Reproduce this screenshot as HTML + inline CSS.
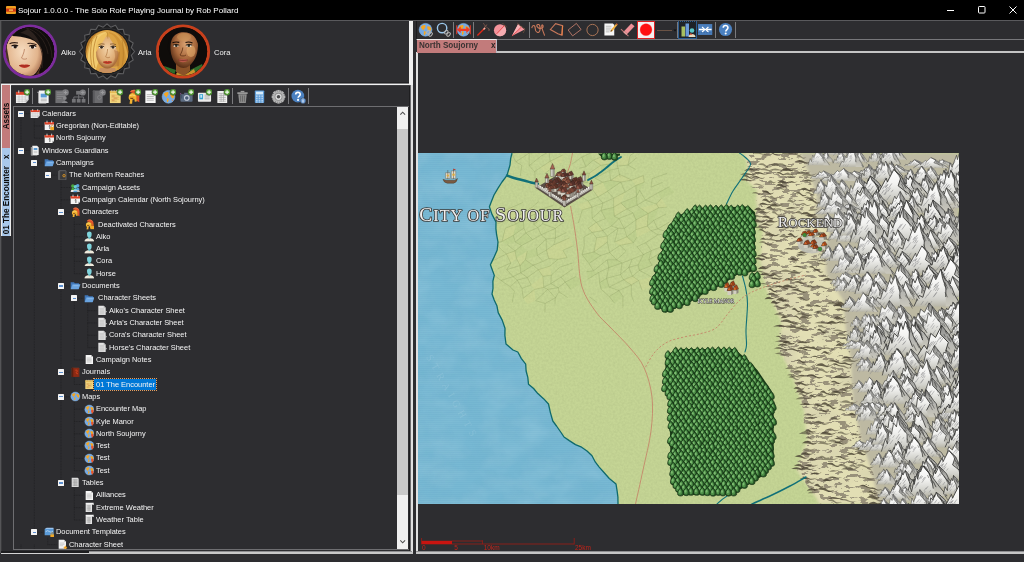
<!DOCTYPE html>
<html lang="en"><head><meta charset="utf-8"><title>Sojour 1.0.0.0 - The Solo Role Playing Journal by Rob Pollard</title>
<style>

*{box-sizing:border-box;margin:0;padding:0}
html,body{width:1024px;height:562px;overflow:hidden;background:#2d2d30;font-family:"Liberation Sans",sans-serif;color:#f1f1f1}
.abs{position:absolute}
.row,.pname,#title .t,.vtab span,.tabt{will-change:transform}
#title{left:0;top:0;width:1024px;height:20px;background:#000}
#title .t{left:18px;top:3.6px;font-size:8.05px;line-height:14px;color:#fff;white-space:nowrap}
.ln{position:absolute;background:#e6e6e6}
.g{position:absolute;background:#6a6a6d}
.pname{font-size:7.6px;color:#f1f1f1;line-height:10px;white-space:nowrap}
.vtab{position:absolute;left:1px;width:10.3px;overflow:visible;border-left:1px solid #ececec;border-right:1px solid #ececec}
.vtab span{position:absolute;left:50%;top:50%;transform:translate(-50%,-50%) rotate(-90deg);white-space:pre;font-weight:bold;font-size:8px;color:#151515;line-height:9px;margin-left:-.4px}
.sep{position:absolute;width:1px;background:#7a7a7d}
.ti{position:absolute;width:16px;height:16px}
.row{position:absolute;font-size:7.44px;line-height:11px;white-space:pre;color:#f4f4f4;height:11px}
.exp{position:absolute;width:6px;height:6px;background:#f4f4f4;border-radius:.5px}
.exp:after{content:"";position:absolute;left:1.3px;top:2.4px;width:3.4px;height:1.2px;background:#5c8fd0}
.ic{position:absolute;width:11px;height:11px}

</style></head>
<body>
<svg width="0" height="0" style="position:absolute"><defs>
<symbol id="plus" viewBox="0 0 16 16"><circle cx="12.900" cy="3.300" r="3.500" fill="#56a236" stroke="#2d2d30" stroke-width=".4"/><path d="M12.900 1.200v4.200M10.800 3.300h4.200" stroke="#f4f8f0" stroke-width="1.300"/></symbol>
<symbol id="cal" viewBox="0 0 16 16"><path d="M1 3.500h13.500v8l-3 3.500h-10.500z" fill="#f2f2f2"/><path d="M11.500 15v-3.500h3z" fill="#bdbdbd"/><rect x="1" y="3" width="13.500" height="3.200" fill="#d9432a"/><path d="M4 1.500v3M11.500 1.500v3" stroke="#ddd" stroke-width="1"/><path d="M1.500 8.500h12.500M1.500 10.800h12.500M1.500 13h10M4.300 6.500v8M7.600 6.500v8M10.900 6.500v8" stroke="#b9b9b9" stroke-width=".6"/></symbol>
<symbol id="cal1" viewBox="0 0 16 16"><path d="M1 3.500h14v8l-3 3.500h-11z" fill="#f4f4f4"/><path d="M12 15v-3.500h3z" fill="#bdbdbd"/><rect x="1" y="3" width="14" height="3.800" fill="#d9432a"/><path d="M4.500 1v3.500M11.500 1v3.500" stroke="#e8e8e8" stroke-width="1.200"/><path d="M7.200 9.200l1.600-1v5.300" stroke="#555" stroke-width="1.300" fill="none"/></symbol>
<symbol id="lock" viewBox="0 0 16 16"><rect x="9.500" y="10.500" width="6" height="4.800" fill="#f0a828"/><path d="M11 10.500v-1.300a1.500 1.500 0 0 1 3 0v1.300" stroke="#c88818" stroke-width=".9" fill="none"/></symbol>
<symbol id="docpic" viewBox="0 0 16 16"><path d="M3 1.500h8l2.500 2.500v11h-10.500z" fill="#f4f4f4"/><path d="M1.500 3.500h1.500v11.500h8" stroke="#cfcfcf" stroke-width="1" fill="none"/><rect x="5" y="5" width="6.500" height="4" fill="#5b9bd5"/><path d="M5 10.800h6.500M5 12.600h6.500" stroke="#9a9a9a" stroke-width=".8"/></symbol>
<symbol id="gsheet" viewBox="0 0 16 16"><rect x="1.500" y="1.500" width="10.500" height="13.500" fill="#707073"/><path d="M3 4h7.500M3 6h7.500M3 8h7.500M3 10h5" stroke="#8c8c8f" stroke-width=".8"/><circle cx="11.500" cy="9.500" r="2" fill="#88888b"/><path d="M8.300 15c0-3 6.400-3 6.400 0z" fill="#88888b"/><circle cx="12.300" cy="3.700" r="3.500" fill="#7c7c7f"/><path d="M12.300 1.800v3.800M10.400 3.700h3.800" stroke="#99999c" stroke-width="1.100"/></symbol>
<symbol id="gorg" viewBox="0 0 16 16"><rect x="5.500" y="2" width="5.500" height="4" fill="#747477"/><rect x="1" y="10.500" width="4" height="4" fill="#747477"/><rect x="6.200" y="10.500" width="4" height="4" fill="#747477"/><rect x="11.400" y="10.500" width="4" height="4" fill="#747477"/><path d="M8.200 6v4.500M3 10.500v-2h10.400v2" stroke="#747477" stroke-width="1" fill="none"/><circle cx="12.600" cy="3.700" r="3.300" fill="#7c7c7f"/><path d="M12.600 1.900v3.600M10.800 3.700h3.600" stroke="#99999c" stroke-width="1.100"/></symbol>
<symbol id="gbook" viewBox="0 0 16 16"><rect x="2" y="1.500" width="10.500" height="13.500" rx="1" fill="#6b6b6e"/><rect x="2" y="1.500" width="2" height="13.500" fill="#5a5a5d"/><circle cx="9" cy="9" r="2" fill="none" stroke="#858588" stroke-width=".9"/><circle cx="12.300" cy="3.700" r="3.500" fill="#7c7c7f"/><path d="M12.300 1.800v3.800M10.400 3.700h3.800" stroke="#99999c" stroke-width="1.100"/></symbol>
<symbol id="notes" viewBox="0 0 16 16"><rect x="2" y="2" width="11.500" height="13" fill="#f3d680"/><rect x="2" y="2" width="11.500" height="2.200" fill="#e6b84a"/><path d="M4 1v2.500M6.500 1v2.500M9 1v2.500M11.500 1v2.500" stroke="#c8c8c8" stroke-width=".7"/><path d="M3.500 6.500h8.500M3.500 8.700h8.500M3.500 10.900h8.500M3.500 13h6" stroke="#d0a850" stroke-width=".7"/><path d="M4 7.600h3M6 9.800h4M4 12h3" stroke="#d06a3a" stroke-width=".6"/></symbol>
<symbol id="helmet" viewBox="0 0 16 16"><path d="M4.200 3.200C6.500 -.3 12.800 0 14 5C14.800 8.500 13.800 11 14.300 14L11 12.500C11.300 9 11 5.800 8 4.600Z" fill="#e2542a"/><path d="M5 2.600C7 .8 11 1 12.600 3.500" stroke="#f08a5a" stroke-width=".8" fill="none"/><path d="M2.800 9C2.800 5.500 5.500 4 8 4.400C10.500 4.900 11.600 7 11.300 10L11.500 13.200L9.300 13.600L9 10.800L7 11.300L6.500 15.800L3.800 15.800L4.300 11.800C3.300 11.200 2.800 10.300 2.800 9Z" fill="#f2b232"/><path d="M4.300 9.300h3.700l-.5 1.300h-2.700z" fill="#7a4a10"/><path d="M3.800 7.300q2.500-2 6.200 0" stroke="#fbdc80" stroke-width=".9" fill="none"/></symbol>
<symbol id="doc" viewBox="0 0 16 16"><path d="M2.500 1.500h8l3 3v10.500h-11z" fill="#f6f6f6"/><path d="M10.500 1.500v3h3z" fill="#c8c8c8"/><path d="M4 6h7.500M4 8h7.500M4 10h7.500M4 12h7.500" stroke="#a8a8a8" stroke-width=".8"/></symbol>
<symbol id="globe" viewBox="0 0 16 16"><circle cx="8" cy="8.300" r="6.800" fill="#76aae4"/><path d="M3 5.500C4 3.500 6.500 2.800 8 3.500C7.500 4.500 8.500 5.500 7.500 6.500C6.500 7 6.800 8.500 6 9C5 9 4.800 7.500 3.800 7Z" fill="#f5a623"/><path d="M6.500 9.500C8 9.500 8.800 10.500 8.200 12C7.800 13.200 7 14 6.800 14.500C6 13 6 11 6.500 9.500Z" fill="#f5a623"/><path d="M10 4.500C12 4 13.800 5.500 14.300 7.500C13.500 8 13.800 9.500 12.800 10.500C12 9.500 11 9.500 10.500 8C10 7 9.500 5.500 10 4.500Z" fill="#f5a623"/><path d="M11.500 11.500l1.200 .3l-.8 1.500z" fill="#f08030"/><circle cx="8" cy="8.300" r="6.800" fill="none" stroke="#8ab8e4" stroke-width=".6"/></symbol>
<symbol id="pin" viewBox="0 0 16 16"><path d="M12.500 8.500c1.400 0 2 1.100 2 2c0 1.500-2 4-2 4s-2-2.500-2-4c0-.9.600-2 2-2z" fill="#e8542a"/></symbol>
<symbol id="camera" viewBox="0 0 16 16"><rect x="1.500" y="5.500" width="13" height="8" rx="1" fill="#5c6c82"/><rect x="5.500" y="4" width="4" height="2" fill="#5c6c82"/><circle cx="8.300" cy="9.500" r="3" fill="#c8d0dc"/><circle cx="8.300" cy="9.500" r="1.900" fill="#4a5c78"/><rect x="2" y="6.200" width="1.500" height="4" fill="#44546a"/><circle cx="1.800" cy="5" r=".6" fill="#b060c0"/></symbol>
<symbol id="idcard" viewBox="0 0 16 16"><rect x="1" y="4" width="14" height="9.500" rx=".8" fill="#ececec"/><rect x="2.500" y="5.500" width="4" height="5.500" fill="#35a0d0"/><rect x="3.500" y="6.300" width="2" height="3" fill="#bfe4f4"/><path d="M8 6.500h5.500M8 8.500h5.500M8 10.500h5.500" stroke="#9a9a9a" stroke-width=".8"/></symbol>
<symbol id="tabledoc" viewBox="0 0 16 16"><path d="M2.500 2h8.500l2 2v11h-10.500z" fill="#f0f0f0"/><path d="M4 5h7.500M4 7h7.500M4 9h7.500M4 11h7.500M4 13h7.500M6.500 4.500v9M9 4.500v9" stroke="#a0a0a0" stroke-width=".7"/></symbol>
<symbol id="trash" viewBox="0 0 16 16"><path d="M3.500 5.500h9l-1 9.500h-7z" fill="#8c8c8c"/><rect x="2.500" y="3.500" width="11" height="1.800" fill="#9c9c9c"/><rect x="6" y="2" width="4" height="1.500" fill="#9c9c9c"/><path d="M6 7v6.500M8 7v6.500M10 7v6.500" stroke="#5c5c5c" stroke-width=".8"/></symbol>
<symbol id="calc" viewBox="0 0 16 16"><rect x="3" y="1.500" width="10" height="13.500" rx=".8" fill="#5b9bd8"/><rect x="4.200" y="2.800" width="7.600" height="3" fill="#d8ecfa"/><path d="M4.200 7.600h7.600M4.200 9.800h7.600M4.200 12h7.600M4.200 13.800h7.600" stroke="#d0e4f6" stroke-width="1.200" stroke-dasharray="1.800 1.100"/></symbol>
<symbol id="gear" viewBox="0 0 16 16"><g transform="translate(8 8.300)"><g fill="#b4b4b4"><rect x="-1.300" y="-7.300" width="2.600" height="14.600"/><rect x="-1.300" y="-7.300" width="2.600" height="14.600" transform="rotate(45)"/><rect x="-1.300" y="-7.300" width="2.600" height="14.600" transform="rotate(90)"/><rect x="-1.300" y="-7.300" width="2.600" height="14.600" transform="rotate(135)"/><rect x="-1" y="-7" width="2" height="14" transform="rotate(22.500)"/><rect x="-1" y="-7" width="2" height="14" transform="rotate(67.500)"/><rect x="-1" y="-7" width="2" height="14" transform="rotate(112.500)"/><rect x="-1" y="-7" width="2" height="14" transform="rotate(157.500)"/><circle r="5.400"/></g><circle r="4.200" fill="#8e8e8e"/><circle r="3.300" fill="#dcdcdc"/><circle r="1.900" fill="#4a4a4c"/></g></symbol>
<symbol id="help" viewBox="0 0 16 16"><circle cx="8" cy="8" r="7" fill="#4a80c0"/><path d="M5.600 6.200c0-3.200 5-3.200 5 0c0 1.800-2.300 1.900-2.300 3.800" stroke="#fff" stroke-width="1.700" fill="none"/><circle cx="8.200" cy="12.200" r="1.100" fill="#fff"/></symbol>
<symbol id="helpi" viewBox="0 0 16 16"><circle cx="7.300" cy="7.500" r="6.800" fill="#4a80c0"/><path d="M5 5.800c0-3 4.800-3 4.800 0c0 1.700-2.200 1.800-2.200 3.600" stroke="#fff" stroke-width="1.700" fill="none"/><circle cx="7.500" cy="11.600" r="1.100" fill="#fff"/><circle cx="12.800" cy="12.600" r="3" fill="#6a9ad4" stroke="#2d2d30" stroke-width=".4"/><path d="M12.800 11.800v2.600" stroke="#fff" stroke-width="1"/><circle cx="12.800" cy="10.700" r=".55" fill="#fff"/></symbol>
<symbol id="server" viewBox="0 0 16 16"><path d="M3.500 1h7l2.500 2.500v11.500h-9.500z" fill="#f2f2f2"/><path d="M2 3v12.500h9" stroke="#c0c0c0" stroke-width="1.200" fill="none"/><rect x="5.500" y="4.500" width="5.500" height="3" fill="#5b9bd5"/><path d="M5.500 9.500h5.500M5.500 11.500h5.500" stroke="#aaa" stroke-width=".8"/></symbol>
<symbol id="folder" viewBox="0 0 16 16"><path d="M1 3.500h5l1.200 1.500h6.300v8.500h-12.500z" fill="#3f76b8"/><path d="M3.800 6.500h12l-3 7.500h-11.800z" fill="#6aa4e0"/><path d="M5 8.500h8" stroke="#a8ccf0" stroke-width=".8"/></symbol>
<symbol id="book" viewBox="0 0 16 16"><rect x="2.500" y="1" width="11" height="14" rx="1" fill="#3a3a3c" stroke="#8a8a8c" stroke-width=".8"/><rect x="2.500" y="1" width="2.200" height="14" fill="#58585a"/><circle cx="10.500" cy="8.500" r="1.800" fill="none" stroke="#f0a020" stroke-width="1.200"/></symbol>
<symbol id="assets" viewBox="0 0 16 16"><path d="M1 14.500c0-4 5-4 5 0z" fill="#e8e8e8"/><circle cx="4.200" cy="6" r="2.600" fill="#4aa840"/><path d="M2 12c0-5 4.500-5 4.500 0z" fill="#4aa840"/><circle cx="11.500" cy="5.500" r="2.600" fill="#5aa0dc"/><path d="M9 12c0-5 5-5 5 0z" fill="#5aa0dc"/><circle cx="8" cy="7" r="2.500" fill="#6ad0d0"/><path d="M5.500 13c0-5 5-5 5 0z" fill="#6ad0d0"/><path d="M2.500 12.500h11l1.500 2h-14z" fill="#f0f0f0"/><path d="M5.500 13.200h5l.5 2h-6z" fill="#58a0d8"/></symbol>
<symbol id="user" viewBox="0 0 16 16"><path d="M4.500 4C4.500 -.2 11.500 -.2 11.500 4L11.200 7C10.800 10.500 5.200 10.500 4.800 7Z" fill="#7fd4dc"/><path d="M6.300 9h3.400v3h-3.400z" fill="#68c0c8"/><path d="M.8 15.800c0-4 3.700-4.500 5.500-4.900l1.700 1.300l1.700-1.300c1.800 .4 5.500 .9 5.500 4.900z" fill="#eeeadc"/></symbol>
<symbol id="sheet" viewBox="0 0 16 16"><path d="M2 1h8l3 3v11h-11z" fill="#e4e4e4"/><path d="M10 1v3h3z" fill="#b0b0b0"/><path d="M3.500 5h8M3.500 7.200h8M3.500 9.400h8M3.500 11.600h8M3.500 13.500h8M6 4.500v9.500M9 4.500v9.500" stroke="#b4b4b4" stroke-width=".6"/><path d="M12.500 8l2.500 2l-2.500 2z" fill="#d0d0d0"/></symbol>
<symbol id="journal" viewBox="0 0 16 16"><rect x="2.500" y="1" width="11.500" height="14.500" rx=".8" fill="#8c2a14" stroke="#4a3a34" stroke-width=".8"/><rect x="2.500" y="1" width="2.400" height="14.500" fill="#5a2010"/><path d="M8 5c2-1.500 4 1 2 2.500c-2 1.500 1 3.500 2 2" stroke="#e84a20" stroke-width="1.200" fill="none"/></symbol>
<symbol id="table" viewBox="0 0 16 16"><path d="M2.500 1h9l1.500 1.500v12.500h-10.500z" fill="#dcdcdc"/><path d="M4 4h7.500M4 6.200h7.500M4 8.400h7.500M4 10.600h7.500M4 12.800h7.500M6.500 3.500v10M9 3.500v10" stroke="#909090" stroke-width=".7"/></symbol>
<symbol id="table2" viewBox="0 0 16 16"><path d="M2.500 2.500h9.500v12.500h-9.500z" fill="#e4e4e4"/><path d="M2.500 1h12v3.500h-2v-1.500h-10z" fill="#f4f4f4"/><path d="M4 5.500h6.500M4 7.700h6.500M4 9.900h6.500M4 12.100h6.500M6.300 5v9M8.600 5v9" stroke="#9a9a9a" stroke-width=".7"/></symbol>
<symbol id="tmpl" viewBox="0 0 16 16"><path d="M1 3h13.500v9.500h-13.500z" fill="#5b9bd8"/><path d="M1 3l3-2h10l.5 2z" fill="#9cc4ee"/><path d="M2.500 7q3-3 6 0q2 2 5-1" stroke="#d8eafa" stroke-width="1" fill="none"/><rect x="9.500" y="11" width="5.500" height="4.300" fill="#f0a828"/><path d="M10.800 11v-1.200a1.400 1.400 0 0 1 2.800 0v1.200" stroke="#c88818" stroke-width=".9" fill="none"/></symbol>
<symbol id="docstar" viewBox="0 0 16 16"><path d="M2.500 1h8l3 3v10.500h-11z" fill="#f2f2f2"/><path d="M10.500 1v3h3z" fill="#c0c0c0"/><path d="M4 6h7M4 8h7M4 10h5" stroke="#b0b0b0" stroke-width=".8"/><path d="M12.500 9.500l1 2.200l2.300 .2l-1.800 1.500l.6 2.300l-2.100-1.300l-2.100 1.300l.6-2.300l-1.800-1.500l2.300-.2z" fill="#f5a623"/></symbol>
<symbol id="link" viewBox="0 0 16 16"><g fill="none" stroke="#b4b4b4" stroke-width="1.100"><rect x="9.500" y="8.600" width="2.800" height="4.400" rx="1.400" transform="rotate(42 10.900 10.800)"/><rect x="12" y="11" width="2.800" height="4.400" rx="1.400" transform="rotate(42 13.400 13.200)"/></g></symbol>
<symbol id="mag" viewBox="0 0 16 16"><circle cx="6.500" cy="6.500" r="5" fill="none" stroke="#9cc8ec" stroke-width="1.500"/></symbol>
<symbol id="arrowlr" viewBox="0 0 16 16"><path d="M1 8.300l4-3.500v2.300h6v-2.300l4 3.500l-4 3.500v-2.300h-6v2.300z" fill="#f03828"/><path d="M.8 3.500v9.600M15.200 3.500v9.600" stroke="#f03828" stroke-width="1.100"/></symbol>
<symbol id="wand" viewBox="0 0 16 16"><path d="M1.500 14.500L9.500 6.500" stroke="#e02818" stroke-width="1.500"/><path d="M8 8l1.800-1.800" stroke="#f8b8a8" stroke-width="1.500"/><path d="M8 1.500l2 3l4.500 3.500M10 4.500l-1.500 2M11.500 2.800l-1 1.500M13 8.500l1.500 .2" stroke="#a06858" stroke-width=".9" fill="none" stroke-dasharray="1.600 .9"/></symbol>
<symbol id="pcircle" viewBox="0 0 16 16"><circle cx="7.500" cy="8.800" r="6.500" fill="#f4949c"/><path d="M7.500 2.300a6.500 6.500 0 0 1 0 13z" fill="#f8b8bc" opacity=".7" transform="rotate(40 7.500 8.800)"/><path d="M4 12.500L12.500 3.500" stroke="#e83838" stroke-width=".9"/><path d="M10.500 1.500l4.500 4.500" stroke="#a06848" stroke-width=".9" stroke-dasharray="1.300 .9"/></symbol>
<symbol id="pcone" viewBox="0 0 16 16"><path d="M1 15L7.500 2.500L14.500 8Z" fill="#f4949c"/><path d="M1 15L7.500 2.500L10 5Z" fill="#f8b4b8"/><path d="M1 15L11 5.500" stroke="#e84848" stroke-width=".8"/><path d="M7 1.500l8.500 6.500M14.500 9l-1.500 2.500" stroke="#a06848" stroke-width=".9" stroke-dasharray="1.300 .9"/></symbol>
<symbol id="squig" viewBox="0 0 16 16"><path d="M.8 6.500C1.500 2.500 4.500 3 4.500 7C4.500 11 8.500 13 9.500 9C10.500 5 9 1.500 6.500 3C5 5 9 8 12 6.500C14 5 12.500 2 11.500 3.500C11 6 13 10 14.500 14.500" fill="none" stroke="#c8785a" stroke-width="1.200"/></symbol>
<symbol id="poly" viewBox="0 0 16 16"><path d="M1.500 8L7 1.800L14.500 4L13.800 14L9.500 12.500Z" fill="none" stroke="#c8785a" stroke-width="1.200"/><path d="M14.500 4L13.800 14" stroke="#e8804a" stroke-width="1.300"/></symbol>
<symbol id="rrect" viewBox="0 0 16 16"><path d="M1.200 8.500L10 1.500L15 8L6 14.800Z" fill="none" stroke="#b87868" stroke-width="1"/></symbol>
<symbol id="ocircle" viewBox="0 0 16 16"><circle cx="8" cy="8.500" r="6" fill="none" stroke="#b07858" stroke-width="1"/></symbol>
<symbol id="docpen" viewBox="0 0 16 16"><path d="M1.500 1.500h9l1.500 1.500v11.500h-10.500z" fill="#f6f6f6"/><path d="M3 4.500h6M3 6.500h6M3 8.500h5M3 10.500h4" stroke="#a8a8a8" stroke-width=".8"/><path d="M8 10.500l.5-2.200l5.200-6.300l1.600 1.300l-5.200 6.300z" fill="#f0b040"/><path d="M13.700 2l1.600 1.300l.6-.9l-1.500-1.200z" fill="#e06030"/><path d="M8 10.500l.5-2.200l1.500 1.300z" fill="#604020"/></symbol>
<symbol id="eraser" viewBox="0 0 16 16"><path d="M4.500 9.500L12 1.500L15.500 4.500L8 12.500Z" fill="#f09098"/><path d="M1 7.500L9 15" stroke="#c07878" stroke-width="1.100"/><path d="M4.500 9.500L8 12.500L6.800 13.800L3.500 10.800Z" fill="#e8a0a0"/></symbol>
<symbol id="chart" viewBox="0 0 16 16"><rect x="1.500" y="4.500" width="3.500" height="10" fill="#a8c060"/><rect x="5.500" y="1.500" width="3.500" height="13" fill="#6a9ad8"/><circle cx="12" cy="8.500" r="2.300" fill="#5ac8c8"/><path d="M8.500 15c0-4 7-4 7 0z" fill="#e8dcc0"/><path d="M9 12.500l2-1.500l1.500 2z" fill="#e05838"/></symbol>
<symbol id="merge" viewBox="0 0 16 16"><rect x="0" y="2" width="16" height="12" fill="#4a7ebc"/><path d="M1 8h5.500M15 8h-5.500" stroke="#fff" stroke-width="1.600"/><path d="M4.500 5.200l3 2.800l-3 2.800M11.500 5.200l-3 2.800l3 2.800" fill="none" stroke="#fff" stroke-width="1.300"/><path d="M0 11.500h16" stroke="#3a68a0" stroke-width="1" stroke-dasharray="2 1"/></symbol>

</defs></svg>

<div id="title" class="abs"><svg class="abs" style="left:6px;top:6px" width="10" height="8" viewBox="0 0 10 8"><rect width="10" height="8" rx="1" fill="#f0a020"/><rect x="0" y="2.5" width="10" height="3.2" fill="#d03818"/><path d="M3 4.1h4" stroke="#ffd860" stroke-width="1.2"/></svg>
<div class="t abs">Sojour 1.0.0.0 - The Solo Role Playing Journal by Rob Pollard</div>
<svg class="abs" style="left:940px;top:0" width="84" height="20" viewBox="0 0 84 20"><g stroke="#fff" stroke-width="1" fill="none"><path d="M7 10.5h7"/><rect x="38.5" y="6.5" width="6.5" height="6.5" rx=".8"/><path d="M69.5 6.5l7 7M76.5 6.5l-7 7"/></g></svg>
</div>
<!-- frame lines -->
<div class="g" style="left:0;top:20px;width:1024px;height:1px;background:#5a5a5d"></div>
<div class="g" style="left:0;top:21px;width:1px;height:532px;background:#555557"></div>
<div class="g" style="left:1px;top:21px;width:1px;height:532px;background:#3a3a3c"></div>
<div class="g" style="left:1px;top:82px;width:409px;height:1px;background:#232325"></div>
<div class="g" style="left:1px;top:83px;width:411px;height:1px;background:#7a7a7c"></div>
<div class="ln" style="left:1px;top:84px;width:412px;height:1px;background:#f2f2f2"></div>
<div class="g" style="left:2px;top:85px;width:408px;height:1px;background:#48484a"></div>
<div class="ln" style="left:409px;top:21px;width:4px;height:64px;background:#f0f0f0"></div>
<div class="ln" style="left:411px;top:85px;width:2px;height:469px;background:#e0e0e0"></div>
<div class="g" style="left:410px;top:85px;width:1px;height:468px;background:#6a6a6c"></div>
<div class="g" style="left:409px;top:86px;width:1px;height:465px;background:#1e1e20"></div>
<div class="g" style="left:1px;top:551px;width:88px;height:2px;background:#1e1e20"></div>
<div class="ln" style="left:1px;top:553px;width:88px;height:1px;background:#d4d4d4"></div>
<div class="g" style="left:89px;top:551px;width:323px;height:1px;background:#8e8e90"></div>
<div class="ln" style="left:89px;top:552px;width:324px;height:2px;background:#c8c8c8"></div>
<div class="ln" style="left:416px;top:52px;width:2px;height:501px;background:#e0e0e0"></div>
<div class="g" style="left:416px;top:551px;width:608px;height:1px;background:#8e8e90"></div>
<div class="ln" style="left:416px;top:552px;width:608px;height:2px;background:#c6c6c6"></div>
<div class="ln" style="left:497px;top:51px;width:527px;height:2px;background:#c4c4c4"></div>
<div class="g" style="left:416px;top:39px;width:608px;height:1px;background:#77777a"></div>
<div class="g" style="left:416px;top:21px;width:1px;height:18px;background:#1c1c1e"></div>

<!-- portraits -->
<svg class="abs" style="left:0;top:21px" width="240" height="62" viewBox="0 21 240 62">
<defs>
<clipPath id="c1"><circle cx="30" cy="51.5" r="24.2"/></clipPath>
<clipPath id="c2"><circle cx="107" cy="51.5" r="21.5"/></clipPath>
<clipPath id="c3"><circle cx="183" cy="51.5" r="24.2"/></clipPath>
<radialGradient id="sk1" cx=".45" cy=".45" r=".6"><stop offset="0" stop-color="#f6dcc0"/><stop offset=".7" stop-color="#e2b48c"/><stop offset="1" stop-color="#a87050"/></radialGradient>
<radialGradient id="sk2" cx=".5" cy=".4" r=".6"><stop offset="0" stop-color="#f3d3a8"/><stop offset=".7" stop-color="#dca870"/><stop offset="1" stop-color="#9a6030"/></radialGradient>
<radialGradient id="sk3" cx=".55" cy=".4" r=".6"><stop offset="0" stop-color="#d8a070"/><stop offset=".6" stop-color="#a8683c"/><stop offset="1" stop-color="#5a3018"/></radialGradient>
</defs>
<!-- Aiko -->
<circle cx="30" cy="51.500" r="25.600" fill="#0d0b0b" stroke="#7c2c9c" stroke-width="3"/>
<g clip-path="url(#c1)">
<rect x="4" y="26" width="52" height="52" fill="#100c0b"/>
<ellipse cx="24" cy="54" rx="18.500" ry="24.500" fill="url(#sk1)"/>
<path d="M4 34C7 44 8 58 11 68L4 70Z" fill="#2a1810" opacity=".85"/><path d="M40 46C44 56 42 68 34 77L46 78L48 50Z" fill="#8a5438" opacity=".55"/>
<path d="M7 42C9 30 18 25 28 26.500C44 26 57 38 56 56C55 68 48 77 42 78L39 72C43 64 44 54 41 48C37 41 30 35 22 32C15 31 10 36 7 42Z" fill="#110d0c"/>
<path d="M12 36C16 28 24 26 30 27L46 34L45 52C42 46 36 41 30 39C24 37 17 36 12 36Z" fill="#120e0d"/><path d="M20 33C28 34 36 40 41 48C40 42 36 34 28 29Z" fill="#2c221e"/><path d="M26 28C36 30 46 40 48 54M30 27C42 30 52 42 52 58M36 40C42 48 44 58 42 68" stroke="#2e2420" stroke-width=".8" fill="none"/>
<path d="M9.500 43.800q3.500-1.800 8.500-.8M27.500 43.500q4.500-1 9 1.300" stroke="#3a261e" stroke-width="1.100" fill="none"/>
<ellipse cx="14.800" cy="46.800" rx="3" ry="1.400" fill="#f4ece6"/><ellipse cx="32.800" cy="47" rx="3.200" ry="1.400" fill="#f4ece6"/>
<circle cx="15.200" cy="46.800" r="1.700" fill="#241814"/><circle cx="32.500" cy="47" r="1.700" fill="#241814"/>
<path d="M11.500 46q3.300-1.800 6.600 0M29.300 46.200q3.500-1.800 7 .2" stroke="#1a100e" stroke-width="1.200" fill="none"/>
<path d="M24.500 49C24 53 22.500 56 21.500 58C23 59.500 25.500 59.500 27 58.500" stroke="#c08868" stroke-width=".9" fill="none"/>
<path d="M19 65.500C21 64 23 64.300 24.300 64.800C25.600 64.300 27.600 64 30 65.500C27.500 68.800 21.500 68.800 19 65.500Z" fill="#c4382a"/>
<path d="M19 65.600q5.500 1 11 0" stroke="#7a1c14" stroke-width=".6" fill="none"/>
<path d="M12 70C16 76 28 79 36 72" stroke="#c89878" stroke-width="1.500" fill="none" opacity=".6"/>
</g>
<!-- Arla -->
<g fill="#1e1e20" stroke="#5c5c5e" stroke-width="1.100"><path d="M107.0 23.9L110.8 27.2L115.5 25.3L118.2 29.6L123.2 29.2L124.4 34.1L129.3 35.3L128.9 40.3L133.2 43.0L131.3 47.7L134.6 51.5L131.3 55.3L133.2 60.0L128.9 62.7L129.3 67.7L124.4 68.9L123.2 73.8L118.2 73.4L115.5 77.7L110.8 75.8L107.0 79.1L103.2 75.8L98.5 77.7L95.8 73.4L90.8 73.8L89.6 68.9L84.7 67.7L85.1 62.7L80.8 60.0L82.7 55.3L79.4 51.5L82.7 47.7L80.8 43.0L85.1 40.3L84.7 35.3L89.6 34.1L90.8 29.2L95.8 29.6L98.5 25.3L103.2 27.2Z" stroke-linejoin="round"/></g><circle cx="107" cy="51.500" r="23.300" fill="none" stroke="#3a3a3c" stroke-width=".6"/>
<circle cx="107" cy="51.500" r="22" fill="#1b1a1a"/>
<g clip-path="url(#c2)">
<rect x="84" y="28" width="46" height="48" fill="#b87c2a"/>
<path d="M86 78C83 52 90 31 107 30C124 31 131 52 128 78Z" fill="#dca648"/>
<path d="M88 66C86 46 94 33 106 32L103 48L95 72Z" fill="#f2cc70"/>
<path d="M126 66C127 48 120 34 109 32L113 48L119 74Z" fill="#d09436"/>
<path d="M85 56C86 66 90 72 96 76L88 78Z" fill="#9a621e"/><path d="M129 56C128 66 124 72 118 76L126 78Z" fill="#8a561a"/><path d="M96 78l4-10h15l4 10z" fill="#c89060"/>
<path d="M86 78l10-7l5 7zM128 78l-10-7l-5 7z" fill="#2a2422"/>
<ellipse cx="107.300" cy="52.500" rx="11.300" ry="16" fill="url(#sk2)"/>
<path d="M96 46C97 38 102 33 107.500 33C105.500 39 101 44 96 52Z" fill="#eec060"/>
<path d="M119 48C118 39 113 33.500 107.500 33C109.500 39 114 43 119 54Z" fill="#dca444"/>
<path d="M107.500 32.500l.3 6" stroke="#b88430" stroke-width=".6"/><path d="M114 50C116 56 115 62 111 67L119 66L120 52Z" fill="#a86838" opacity=".45"/><path d="M92 40C90 50 90 60 93 70M97 36C93 46 92 58 95 68M122 40C124 50 124 60 121 70" stroke="#b47a28" stroke-width=".7" fill="none"/>
<path d="M98.500 44.600q3-1.500 6 -.4M110 44.200q3-1 6 .5" stroke="#8a6030" stroke-width=".9" fill="none"/>
<ellipse cx="101.300" cy="47.300" rx="2.600" ry="1.200" fill="#f0e6da"/><ellipse cx="113.300" cy="47.300" rx="2.600" ry="1.200" fill="#f0e6da"/>
<circle cx="101.500" cy="47.300" r="1.350" fill="#33281e"/><circle cx="113" cy="47.300" r="1.350" fill="#33281e"/>
<path d="M98.500 46.700q2.800-1.600 5.600 0M110.500 46.700q2.800-1.600 5.600 0" stroke="#2a1a10" stroke-width=".8" fill="none"/>
<path d="M107.600 49C107.400 53 106.300 55.500 105.600 56.800C107 58 109 58 110 57" stroke="#b8804c" stroke-width=".8" fill="none"/>
<path d="M103 62C105 60.800 106.500 61 107.500 61.500C108.500 61 110 60.800 112 62C110 64.800 105 64.800 103 62Z" fill="#cc4630"/>
<path d="M103 62.100q4.500 .8 9 0" stroke="#7a2818" stroke-width=".5" fill="none"/>
</g>
<!-- Cora -->
<circle cx="183" cy="51.500" r="25.600" fill="#0e0b0a" stroke="#c8401c" stroke-width="3"/>
<g clip-path="url(#c3)">
<rect x="158" y="26" width="50" height="52" fill="#0f0c0a"/>
<path d="M158 80l6-14l12 4l-4 10zM208 80l-6-16l-12 6l4 10z" fill="#2f6b2a"/>
<path d="M172 80l6-9l8 3l8-5l4 11z" fill="#c8922c"/>
<path d="M176 60h14v11l-6 5l-8-4z" fill="#8a5228"/>
<path d="M170 44C170 32 177 28.500 184 29C193 29.500 198.500 36 198 46C197.500 56 194 62 189 66C186 68.500 181 68.500 178 66C173 62 170 54 170 44Z" fill="url(#sk3)"/>
<ellipse cx="191" cy="51" rx="4.500" ry="6" fill="#e8b070" opacity=".55"/>
<ellipse cx="184" cy="37" rx="7" ry="4" fill="#d09858" opacity=".5"/>
<path d="M168 50C167 34 176 27 185 28C196 28 201 38 199.500 52C199 44 196 36 190 33.500C184 31 176 32 172.500 38C170.500 42 170 46 170.500 56Z" fill="#0e0b0a"/>
<path d="M172.500 42.800q3.200-1.500 6.800-.4M185.500 42.500q3.500-1.200 7 .6" stroke="#1a0e08" stroke-width="1.100" fill="none"/>
<ellipse cx="176" cy="45.800" rx="2.800" ry="1.250" fill="#e8dccc"/><ellipse cx="189" cy="45.800" rx="2.900" ry="1.250" fill="#e8dccc"/>
<circle cx="176.300" cy="45.800" r="1.300" fill="#2a2a20"/><circle cx="188.800" cy="45.800" r="1.300" fill="#2a2a20"/>
<path d="M173 45.200q3-1.800 6.200 0M185.800 45.200q3.200-1.800 6.400 0" stroke="#120a06" stroke-width=".9" fill="none"/>
<path d="M182.800 47.500C182.500 51 181 53.500 180 55C181.500 56.300 184.500 56.300 186 55" stroke="#6a3a1c" stroke-width=".9" fill="none"/>
<path d="M178 60C180 58.800 181.800 59 182.800 59.500C183.800 59 185.600 58.800 188 60C185.500 63 180.500 63 178 60Z" fill="#b85848"/>
<path d="M178 60.100q5 .9 10 0" stroke="#5a2018" stroke-width=".5" fill="none"/>
</g>
</svg>
<div class="pname abs" style="left:60.500px;top:47.500px">Aiko</div>
<div class="pname abs" style="left:137.500px;top:47.500px">Arla</div>
<div class="pname abs" style="left:213.500px;top:47.500px">Cora</div>

<div class="vtab" style="top:85px;height:63.300px;background:#c27b7b"></div><div class="vtab" style="top:148.300px;height:87.700px;background:#a9c8ea"></div><svg class="abs tabt" style="left:0;top:85px" width="13" height="152" viewBox="0 85 13 152"><g font-family="Liberation Sans,sans-serif" font-weight="bold" font-size="8.150" fill="#0c0c0c"><text transform="translate(9.300 129.300) rotate(-90)">Assets</text><text transform="translate(9.300 234.200) rotate(-90)">01 The Encounter</text><text transform="translate(9.300 159) rotate(-90)">x</text></g></svg><svg class="abs" style="left:15.25px;top:88.7px" width="15" height="15" viewBox="0 0 16 16"><use href="#cal"/><use href="#plus"/></svg><svg class="abs" style="left:36.25px;top:88.7px" width="15" height="15" viewBox="0 0 16 16"><use href="#docpic"/><use href="#plus"/></svg><svg class="abs" style="left:53.75px;top:88.7px" width="15" height="15" viewBox="0 0 16 16"><use href="#gsheet"/></svg><svg class="abs" style="left:70.75px;top:88.7px" width="15" height="15" viewBox="0 0 16 16"><use href="#gorg"/></svg><svg class="abs" style="left:91.25px;top:88.7px" width="15" height="15" viewBox="0 0 16 16"><use href="#gbook"/></svg><svg class="abs" style="left:107.75px;top:88.7px" width="15" height="15" viewBox="0 0 16 16"><use href="#notes"/><use href="#plus"/></svg><svg class="abs" style="left:125.75px;top:88.7px" width="15" height="15" viewBox="0 0 16 16"><use href="#helmet"/><use href="#plus"/></svg><svg class="abs" style="left:143.25px;top:88.7px" width="15" height="15" viewBox="0 0 16 16"><use href="#doc"/><use href="#plus"/></svg><svg class="abs" style="left:160.75px;top:88.7px" width="15" height="15" viewBox="0 0 16 16"><use href="#globe"/><use href="#plus"/></svg><svg class="abs" style="left:179.25px;top:88.7px" width="15" height="15" viewBox="0 0 16 16"><use href="#camera"/><use href="#plus"/></svg><svg class="abs" style="left:196.75px;top:88.7px" width="15" height="15" viewBox="0 0 16 16"><use href="#idcard"/><use href="#plus"/></svg><svg class="abs" style="left:214.75px;top:88.7px" width="15" height="15" viewBox="0 0 16 16"><use href="#tabledoc"/><use href="#plus"/></svg><svg class="abs" style="left:234.75px;top:88.7px" width="15" height="15" viewBox="0 0 16 16"><use href="#trash"/></svg><svg class="abs" style="left:252.25px;top:88.7px" width="15" height="15" viewBox="0 0 16 16"><use href="#calc"/></svg><svg class="abs" style="left:270.75px;top:88.7px" width="15" height="15" viewBox="0 0 16 16"><use href="#gear"/></svg><svg class="abs" style="left:291.25px;top:88.7px" width="15" height="15" viewBox="0 0 16 16"><use href="#helpi"/></svg><div class="sep" style="left:32px;top:88px;height:16px"></div><div class="sep" style="left:88px;top:88px;height:16px"></div><div class="sep" style="left:232px;top:88px;height:16px"></div><div class="sep" style="left:288px;top:88px;height:16px"></div><div class="sep" style="left:307.5px;top:88px;height:16px"></div><div class="g" style="left:12px;top:85px;width:397px;height:1px;background:#3c3c3f"></div><div class="g" style="left:13px;top:106px;width:396px;height:1px;background:#6e6e71"></div><div class="g" style="left:13px;top:106px;width:1px;height:443px;background:#6e6e71"></div><div class="g" style="left:13px;top:549px;width:396px;height:1px;background:#6e6e71"></div><div class="abs" style="left:397px;top:107px;width:11.300px;height:442px;background:#f0f0f0"></div><div class="abs" style="left:397px;top:129px;width:11.300px;height:365.500px;background:#c9c9c9"></div><svg class="abs" style="left:397px;top:107px" width="11.300" height="442" viewBox="0 0 11.300 442"><path d="M3.300 7.500l2.400-2.400l2.400 2.400M3.300 433.500l2.400 2.400l2.400-2.400" fill="none" stroke="#505050" stroke-width="1.100"/></svg><svg class="abs" style="left:0;top:0" width="400" height="562" viewBox="0 0 400 562"><defs><clipPath id="tc"><rect x="14" y="107" width="383" height="442"/></clipPath></defs><path clip-path="url(#tc)" d="M24.5 113.6H29.8M34.3 125.9H43.1M34.3 119.1V125.9M34.3 138.2H43.1M34.3 125.9V138.2M24.5 150.5H29.8M21.0 117.1V147.0M37.8 162.9H43.1M34.3 156.0V159.4M51.2 175.2H56.5M47.7 168.4V171.7M61.0 187.5H69.8M61.0 180.7V187.5M61.0 199.8H69.8M61.0 187.5V199.8M64.5 212.1H69.8M61.0 199.8V208.6M74.3 224.4H83.1M74.3 217.6V224.4M74.3 236.7H83.1M74.3 224.4V236.7M74.3 249.1H83.1M74.3 236.7V249.1M74.3 261.4H83.1M74.3 249.1V261.4M74.3 273.7H83.1M74.3 261.4V273.7M64.5 286.0H69.8M61.0 215.6V282.5M77.8 298.3H83.1M74.3 291.5V294.8M87.7 310.6H96.5M87.7 303.8V310.6M87.7 322.9H96.5M87.7 310.6V322.9M87.7 335.3H96.5M87.7 322.9V335.3M87.7 347.6H96.5M87.7 335.3V347.6M74.3 359.9H83.1M74.3 301.8V359.9M64.5 372.2H69.8M61.0 289.5V368.7M74.3 384.5H83.1M74.3 377.7V384.5M64.5 396.8H69.8M61.0 375.7V393.3M74.3 409.1H83.1M74.3 402.3V409.1M74.3 421.5H83.1M74.3 409.1V421.5M74.3 433.8H83.1M74.3 421.5V433.8M74.3 446.1H83.1M74.3 433.8V446.1M74.3 458.4H83.1M74.3 446.1V458.4M74.3 470.7H83.1M74.3 458.4V470.7M64.5 483.0H69.8M61.0 400.3V479.5M74.3 495.3H83.1M74.3 488.5V495.3M74.3 507.6H83.1M74.3 495.3V507.6M74.3 520.0H83.1M74.3 507.6V520.0M37.8 532.3H43.1M34.3 166.4V528.8M47.7 544.6H56.5M47.7 537.8V544.6M21 544.6V549M34.3 544.6V549" stroke="#202022" stroke-width=".8" stroke-dasharray=".8 .8" fill="none"/></svg><div class="abs" style="left:14px;top:107px;width:383px;height:442px;overflow:hidden"><div class="abs" style="left:-14px;top:-107px;width:400px;height:562px"><div class="exp" style="left:18.00px;top:110.60px"></div><svg class="abs" style="left:30.30px;top:108.00px" width="10.700" height="10.700" viewBox="0 0 16 16"><use href="#cal"/></svg><div class="row" style="left:42.40px;top:107.70px">Calendars</div><svg class="abs" style="left:43.63px;top:120.31px" width="10.700" height="10.700" viewBox="0 0 16 16"><use href="#cal1"/><use href="#lock"/></svg><div class="row" style="left:55.73px;top:120.01px">Gregorian (Non-Editable)</div><svg class="abs" style="left:43.63px;top:132.63px" width="10.700" height="10.700" viewBox="0 0 16 16"><use href="#cal1"/></svg><div class="row" style="left:55.73px;top:132.33px">North Sojourny</div><div class="exp" style="left:18.00px;top:147.54px"></div><svg class="abs" style="left:30.30px;top:144.94px" width="10.700" height="10.700" viewBox="0 0 16 16"><use href="#server"/></svg><div class="row" style="left:42.40px;top:144.64px">Windows Guardians</div><div class="exp" style="left:31.33px;top:159.86px"></div><svg class="abs" style="left:43.63px;top:157.26px" width="10.700" height="10.700" viewBox="0 0 16 16"><use href="#folder"/></svg><div class="row" style="left:55.73px;top:156.96px">Campaigns</div><div class="exp" style="left:44.67px;top:172.17px"></div><svg class="abs" style="left:56.97px;top:169.57px" width="10.700" height="10.700" viewBox="0 0 16 16"><use href="#book"/></svg><div class="row" style="left:69.07px;top:169.27px">The Northern Reaches</div><svg class="abs" style="left:70.30px;top:181.88px" width="10.700" height="10.700" viewBox="0 0 16 16"><use href="#assets"/></svg><div class="row" style="left:82.40px;top:181.58px">Campaign Assets</div><svg class="abs" style="left:70.30px;top:194.20px" width="10.700" height="10.700" viewBox="0 0 16 16"><use href="#cal1"/></svg><div class="row" style="left:82.40px;top:193.90px">Campaign Calendar (North Sojourny)</div><div class="exp" style="left:58.00px;top:209.11px"></div><svg class="abs" style="left:70.30px;top:206.51px" width="10.700" height="10.700" viewBox="0 0 16 16"><use href="#helmet"/></svg><div class="row" style="left:82.40px;top:206.21px">Characters</div><svg class="abs" style="left:83.63px;top:218.83px" width="10.700" height="10.700" viewBox="0 0 16 16"><use href="#helmet"/><use href="#lock"/></svg><div class="row" style="left:95.73px;top:218.53px"> Deactivated Characters</div><svg class="abs" style="left:83.63px;top:231.14px" width="10.700" height="10.700" viewBox="0 0 16 16"><use href="#user"/></svg><div class="row" style="left:95.73px;top:230.84px">Aiko</div><svg class="abs" style="left:83.63px;top:243.45px" width="10.700" height="10.700" viewBox="0 0 16 16"><use href="#user"/></svg><div class="row" style="left:95.73px;top:243.15px">Arla</div><svg class="abs" style="left:83.63px;top:255.77px" width="10.700" height="10.700" viewBox="0 0 16 16"><use href="#user"/></svg><div class="row" style="left:95.73px;top:255.47px">Cora</div><svg class="abs" style="left:83.63px;top:268.08px" width="10.700" height="10.700" viewBox="0 0 16 16"><use href="#user"/></svg><div class="row" style="left:95.73px;top:267.78px">Horse</div><div class="exp" style="left:58.00px;top:283.00px"></div><svg class="abs" style="left:70.30px;top:280.40px" width="10.700" height="10.700" viewBox="0 0 16 16"><use href="#folder"/></svg><div class="row" style="left:82.40px;top:280.10px">Documents</div><div class="exp" style="left:71.33px;top:295.31px"></div><svg class="abs" style="left:83.63px;top:292.71px" width="10.700" height="10.700" viewBox="0 0 16 16"><use href="#folder"/></svg><div class="row" style="left:95.73px;top:292.41px"> Character Sheets</div><svg class="abs" style="left:96.97px;top:305.02px" width="10.700" height="10.700" viewBox="0 0 16 16"><use href="#sheet"/></svg><div class="row" style="left:109.06px;top:304.72px">Aiko's Character Sheet</div><svg class="abs" style="left:96.97px;top:317.34px" width="10.700" height="10.700" viewBox="0 0 16 16"><use href="#sheet"/></svg><div class="row" style="left:109.06px;top:317.04px">Arla's Character Sheet</div><svg class="abs" style="left:96.97px;top:329.65px" width="10.700" height="10.700" viewBox="0 0 16 16"><use href="#sheet"/></svg><div class="row" style="left:109.06px;top:329.35px">Cora's Character Sheet</div><svg class="abs" style="left:96.97px;top:341.97px" width="10.700" height="10.700" viewBox="0 0 16 16"><use href="#sheet"/></svg><div class="row" style="left:109.06px;top:341.67px">Horse's Character Sheet</div><svg class="abs" style="left:83.63px;top:354.28px" width="10.700" height="10.700" viewBox="0 0 16 16"><use href="#doc"/></svg><div class="row" style="left:95.73px;top:353.98px">Campaign Notes</div><div class="exp" style="left:58.00px;top:369.19px"></div><svg class="abs" style="left:70.30px;top:366.59px" width="10.700" height="10.700" viewBox="0 0 16 16"><use href="#journal"/></svg><div class="row" style="left:82.40px;top:366.29px">Journals</div><svg class="abs" style="left:83.63px;top:378.91px" width="10.700" height="10.700" viewBox="0 0 16 16"><use href="#notes"/></svg><div class="abs" style="left:94.43px;top:378.61px;width:61.200px;height:11.800px;background:#0078d7;outline:.5px dotted #e8a060"></div><div class="row" style="left:95.73px;top:378.61px">01 The Encounter</div><div class="exp" style="left:58.00px;top:393.82px"></div><svg class="abs" style="left:70.30px;top:391.22px" width="10.700" height="10.700" viewBox="0 0 16 16"><use href="#globe"/></svg><div class="row" style="left:82.40px;top:390.92px">Maps</div><svg class="abs" style="left:83.63px;top:403.54px" width="10.700" height="10.700" viewBox="0 0 16 16"><use href="#globe"/><use href="#pin"/></svg><div class="row" style="left:95.73px;top:403.24px">Encounter Map</div><svg class="abs" style="left:83.63px;top:415.85px" width="10.700" height="10.700" viewBox="0 0 16 16"><use href="#globe"/><use href="#pin"/></svg><div class="row" style="left:95.73px;top:415.55px">Kyle Manor</div><svg class="abs" style="left:83.63px;top:428.16px" width="10.700" height="10.700" viewBox="0 0 16 16"><use href="#globe"/><use href="#pin"/></svg><div class="row" style="left:95.73px;top:427.86px">North Soujorny</div><svg class="abs" style="left:83.63px;top:440.48px" width="10.700" height="10.700" viewBox="0 0 16 16"><use href="#globe"/><use href="#pin"/></svg><div class="row" style="left:95.73px;top:440.18px">Test</div><svg class="abs" style="left:83.63px;top:452.79px" width="10.700" height="10.700" viewBox="0 0 16 16"><use href="#globe"/><use href="#pin"/></svg><div class="row" style="left:95.73px;top:452.49px">Test</div><svg class="abs" style="left:83.63px;top:465.11px" width="10.700" height="10.700" viewBox="0 0 16 16"><use href="#globe"/><use href="#pin"/></svg><div class="row" style="left:95.73px;top:464.81px">Test</div><div class="exp" style="left:58.00px;top:480.02px"></div><svg class="abs" style="left:70.30px;top:477.42px" width="10.700" height="10.700" viewBox="0 0 16 16"><use href="#table"/></svg><div class="row" style="left:82.40px;top:477.12px">Tables</div><svg class="abs" style="left:83.63px;top:489.73px" width="10.700" height="10.700" viewBox="0 0 16 16"><use href="#doc"/></svg><div class="row" style="left:95.73px;top:489.43px">Alliances</div><svg class="abs" style="left:83.63px;top:502.05px" width="10.700" height="10.700" viewBox="0 0 16 16"><use href="#table2"/></svg><div class="row" style="left:95.73px;top:501.75px">Extreme Weather</div><svg class="abs" style="left:83.63px;top:514.36px" width="10.700" height="10.700" viewBox="0 0 16 16"><use href="#table2"/></svg><div class="row" style="left:95.73px;top:514.06px">Weather Table</div><div class="exp" style="left:31.33px;top:529.28px"></div><svg class="abs" style="left:43.63px;top:526.68px" width="10.700" height="10.700" viewBox="0 0 16 16"><use href="#tmpl"/></svg><div class="row" style="left:55.73px;top:526.38px">Document Templates</div><svg class="abs" style="left:56.97px;top:538.99px" width="10.700" height="10.700" viewBox="0 0 16 16"><use href="#docstar"/></svg><div class="row" style="left:69.07px;top:538.69px">Character Sheet</div></div></div><svg class="abs" style="left:417.8px;top:22px" width="15" height="15" viewBox="0 0 16 16"><use href="#globe"/><use href="#link"/></svg><svg class="abs" style="left:436.3px;top:22px" width="15" height="15" viewBox="0 0 16 16"><use href="#mag"/><use href="#link"/></svg><svg class="abs" style="left:455.5px;top:22px" width="15" height="15" viewBox="0 0 16 16"><use href="#globe"/><use href="#arrowlr"/></svg><svg class="abs" style="left:475.5px;top:22px" width="15" height="15" viewBox="0 0 16 16"><use href="#wand"/></svg><svg class="abs" style="left:493.0px;top:22px" width="15" height="15" viewBox="0 0 16 16"><use href="#pcircle"/></svg><svg class="abs" style="left:511.0px;top:22px" width="15" height="15" viewBox="0 0 16 16"><use href="#pcone"/></svg><svg class="abs" style="left:531.0px;top:22px" width="15" height="15" viewBox="0 0 16 16"><use href="#squig"/></svg><svg class="abs" style="left:549.0px;top:22px" width="15" height="15" viewBox="0 0 16 16"><use href="#poly"/></svg><svg class="abs" style="left:567.0px;top:22px" width="15" height="15" viewBox="0 0 16 16"><use href="#rrect"/></svg><svg class="abs" style="left:584.5px;top:22px" width="15" height="15" viewBox="0 0 16 16"><use href="#ocircle"/></svg><svg class="abs" style="left:603.0px;top:22px" width="15" height="15" viewBox="0 0 16 16"><use href="#docpen"/></svg><svg class="abs" style="left:619.5px;top:22px" width="15" height="15" viewBox="0 0 16 16"><use href="#eraser"/></svg><div class="sep" style="left:453px;top:22px;height:15.500px"></div><div class="sep" style="left:473px;top:22px;height:15.500px"></div><div class="sep" style="left:528.5px;top:22px;height:15.500px"></div><div class="sep" style="left:677px;top:22px;height:15.500px"></div><div class="sep" style="left:715px;top:22px;height:15.500px"></div><div class="sep" style="left:735px;top:22px;height:15.500px"></div><div class="abs" style="left:636.500px;top:21px;width:18px;height:17.500px;background:#f6f0f0;border:1px solid #d82020"></div><svg class="abs" style="left:636.500px;top:21px" width="18" height="17.500" viewBox="0 0 18 17.500"><defs><radialGradient id="rg"><stop offset=".8" stop-color="#ff1010"/><stop offset="1" stop-color="#ff1010" stop-opacity="0"/></radialGradient></defs><circle cx="9" cy="8.700" r="6.700" fill="url(#rg)"/></svg><div class="abs" style="left:657px;top:29.500px;width:14.500px;height:1px;background:#6a5244"></div><svg class="abs" style="left:672.500px;top:28.500px" width="4" height="3" viewBox="0 0 4 3"><path d="M.5 .5h3l-1.500 2z" fill="#101010"/></svg><div class="abs" style="left:678px;top:20.500px;width:18.500px;height:18px;border:1px solid #2c5c90;border-top:1px dotted #2c5c90;background:#1e2328"></div><svg class="abs" style="left:679.500px;top:21.500px" width="16" height="16" viewBox="0 0 16 16"><use href="#chart"/></svg><svg class="abs" style="left:698px;top:22px" width="14.500" height="15" viewBox="0 0 16 16"><use href="#merge"/></svg><svg class="abs" style="left:717.500px;top:22px" width="15" height="15" viewBox="0 0 16 16"><use href="#help"/></svg><div class="abs" style="left:417px;top:39px;width:80px;height:14px;background:#c27b7b;border-top:1px solid #f0f0f0;border-right:1px solid #b8b8c4"></div><div class="abs tabt" style="left:419px;top:41px;font-size:8.150px;font-weight:bold;color:#3a3232;line-height:10px;white-space:nowrap">North Soujorny</div><div class="abs tabt" style="left:490.800px;top:41px;font-size:8.150px;font-weight:bold;color:#2a2626;line-height:10px">x</div>
<svg class="abs" style="left:418px;top:153px;will-change:transform" width="541" height="351" viewBox="418 153 541 351">
<defs>
<filter id="nz" x="0" y="0" width="100%" height="100%"><feTurbulence type="fractalNoise" baseFrequency=".45" numOctaves="2" seed="3"/><feColorMatrix values="0 0 0 0 0  0 0 0 0 0  0 0 0 0 0  0 0 0 .9 -.28"/></filter>
<filter id="nzw" x="0" y="0" width="100%" height="100%"><feTurbulence type="fractalNoise" baseFrequency=".035 .05" numOctaves="3" seed="11"/><feColorMatrix values="0 0 0 0 1  0 0 0 0 1  0 0 0 0 1  .9 0 0 0 -.3"/></filter>
<filter id="nzd" x="0" y="0" width="100%" height="100%"><feTurbulence type="fractalNoise" baseFrequency=".04 .06" numOctaves="3" seed="23"/><feColorMatrix values="0 0 0 0 .1  0 0 0 0 .3  0 0 0 0 .45  .9 0 0 0 -.32"/></filter>
<filter id="b3" x="-10%" y="-10%" width="120%" height="120%"><feGaussianBlur stdDeviation="3.500"/></filter>
<filter id="b1" x="-10%" y="-10%" width="120%" height="120%"><feGaussianBlur stdDeviation=".35"/></filter>
<filter id="b2" x="-10%" y="-10%" width="120%" height="120%"><feGaussianBlur stdDeviation="1.600"/></filter>
<pattern id="wl" width="4" height="2" patternUnits="userSpaceOnUse"><rect width="4" height="1" fill="#4a94b8" opacity=".09"/></pattern>
<linearGradient id="tg" x1="0" y1="0" x2="1" y2=".5"><stop offset="0" stop-color="#8ac468"/><stop offset=".32" stop-color="#5c9a4a"/><stop offset=".65" stop-color="#387032"/><stop offset="1" stop-color="#1a4018"/></linearGradient>
<linearGradient id="mg" x1="0" y1="0" x2="0" y2="1"><stop offset="0" stop-color="#ffffff"/><stop offset=".45" stop-color="#f2f2f0"/><stop offset=".8" stop-color="#d2d2cc"/><stop offset="1" stop-color="#b8b6a8"/></linearGradient>
<linearGradient id="ms" x1="0" y1="0" x2="0" y2="1"><stop offset="0" stop-color="#8e8e8c"/><stop offset=".5" stop-color="#b4b4b0"/><stop offset="1" stop-color="#cac8bc"/></linearGradient>
<g id="t"><g transform="scale(1.22 1.12)"><path d="M0-4C2-2.600 2.900 .6 2.300 2.200C1.300 3.600 -1.300 3.600 -2.300 2.200C-2.900 .6 -2-2.600 0-4Z" fill="#275626" stroke="#122e12" stroke-width=".55"/><path d="M-.2-3.300C1-2 1.400 .5 .8 1.700C.1 2.500 -1.400 2.300 -1.900 1.400C-2.400 .4 -1.500-2 -.2-3.300Z" fill="#4f9049"/><ellipse cx="-.7" cy="-.7" rx=".8" ry="1.300" fill="#7cba70"/></g></g>
<clipPath id="mc"><rect x="418" y="153" width="541" height="351"/></clipPath>
</defs>
<g clip-path="url(#mc)">
<rect x="418" y="153" width="541" height="351" fill="#c5d595"/>
<rect x="418" y="153" width="541" height="351" filter="url(#nz)" fill="#000" opacity=".09"/>
<g filter="url(#b1)">
<path d="M506.5 253.9L515.0 250.9L516.4 258.3L510.8 263.0Z" fill="#d6d88e" opacity=".28"/><path d="M523.2 298.4L534.3 289.5L535.6 300.7L527.5 303.9Z" fill="#d6d88e" opacity=".28"/><path d="M505.3 228.2L516.2 224.0L513.3 235.3L502.1 241.4Z" fill="#d6d88e" opacity=".28"/><path d="M502.1 241.4L513.3 235.3L515.3 242.0L507.3 244.7Z" fill="#b2c884" opacity=".32"/><path d="M515.0 250.9L521.5 245.6L527.3 250.9L516.4 258.3Z" fill="#b2c884" opacity=".32"/><path d="M516.4 258.3L527.3 250.9L525.3 259.8L520.1 265.6Z" fill="#d6d88e" opacity=".28"/><path d="M520.1 265.6L525.3 259.8L533.2 265.2L520.7 272.8Z" fill="#b2c884" opacity=".32"/><path d="M531.1 285.1L542.9 276.3L543.7 287.4L534.3 289.5Z" fill="#d6d88e" opacity=".28"/><path d="M500.0 212.8L512.6 207.0L517.7 216.3L511.5 219.0Z" fill="#d6d88e" opacity=".28"/><path d="M516.2 224.0L523.1 218.9L523.9 228.1L513.3 235.3Z" fill="#b2c884" opacity=".32"/><path d="M515.3 242.0L525.9 232.9L532.6 239.6L521.5 245.6Z" fill="#b2c884" opacity=".32"/><path d="M527.3 250.9L536.4 248.5L537.4 255.4L525.3 259.8Z" fill="#b2c884" opacity=".32"/><path d="M538.3 269.7L549.9 266.1L551.3 275.1L542.9 276.3Z" fill="#d6d88e" opacity=".28"/><path d="M517.7 216.3L532.3 207.2L534.9 214.2L523.1 218.9Z" fill="#d6d88e" opacity=".28"/><path d="M546.4 250.0L553.8 244.9L562.9 250.3L548.8 258.5Z" fill="#d6d88e" opacity=".28"/><path d="M548.8 258.5L562.9 250.3L567.0 257.5L558.2 259.3Z" fill="#d6d88e" opacity=".28"/><path d="M565.2 282.2L575.9 276.5L585.0 281.4L571.0 289.6Z" fill="#b2c884" opacity=".32"/><path d="M543.2 217.3L550.4 214.0L559.0 218.3L542.7 223.9Z" fill="#b2c884" opacity=".32"/><path d="M553.8 244.9L569.1 238.1L573.3 245.7L562.9 250.3Z" fill="#d6d88e" opacity=".28"/><path d="M492.4 261.0L506.5 253.9M497.7 268.9L510.8 263.0M495.3 275.9L501.1 280.5M501.1 280.5L512.9 276.6M501.1 280.5L510.4 286.9M510.4 286.9L517.2 280.1M510.4 286.9L514.4 291.3M514.4 291.3L512.1 302.8M496.1 243.0L502.1 241.4M496.1 243.0L500.5 248.9M500.5 248.9L506.5 253.9M506.5 253.9L515.0 250.9M506.5 253.9L510.8 263.0M510.8 263.0L506.7 269.6M506.7 269.6L520.1 265.6M506.7 269.6L512.9 276.6M512.9 276.6L520.7 272.8M512.9 276.6L517.2 280.1M517.2 280.1L527.3 277.5M517.2 280.1L521.9 288.3M521.9 288.3L531.1 285.1M521.9 288.3L523.2 298.4M523.2 298.4L534.3 289.5M494.3 218.8L500.0 212.8M494.3 218.8L497.7 223.5M497.7 223.5L511.5 219.0M505.3 228.2L516.2 224.0M505.3 228.2L502.1 241.4M502.1 241.4L513.3 235.3M507.3 244.7L515.0 250.9M515.0 250.9L521.5 245.6M515.0 250.9L516.4 258.3M516.4 258.3L520.1 265.6M520.1 265.6L525.3 259.8M520.1 265.6L520.7 272.8M520.7 272.8L533.2 265.2M520.7 272.8L527.3 277.5M527.3 277.5L538.3 269.7M527.3 277.5L531.1 285.1M534.3 289.5L543.7 287.4M535.6 300.7L547.7 289.3M535.6 300.7L545.1 303.4M545.1 303.4L555.3 297.9M545.1 303.4L544.9 312.3M500.0 212.8L512.6 207.0M511.5 219.0L517.7 216.3M511.5 219.0L516.2 224.0M516.2 224.0L523.1 218.9M513.3 235.3L523.9 228.1M513.3 235.3L515.3 242.0M515.3 242.0L525.9 232.9M515.3 242.0L521.5 245.6M521.5 245.6L532.6 239.6M527.3 250.9L525.3 259.8M525.3 259.8L533.2 265.2M533.2 265.2L542.9 261.4M533.2 265.2L538.3 269.7M538.3 269.7L549.9 266.1M538.3 269.7L542.9 276.3M542.9 276.3L551.3 275.1M542.9 276.3L543.7 287.4M543.7 287.4L550.8 283.6M543.7 287.4L547.7 289.3M547.7 289.3L558.3 287.7M547.7 289.3L555.3 297.9M555.3 297.9L559.0 291.9M555.3 297.9L555.1 304.1M512.6 207.0L522.8 202.5M517.7 216.3L532.3 207.2M517.7 216.3L523.1 218.9M523.1 218.9L534.9 214.2M523.1 218.9L523.9 228.1M523.9 228.1L525.9 232.9M525.9 232.9L537.8 227.6M525.9 232.9L532.6 239.6M532.6 239.6L541.1 234.8M536.4 248.5L546.2 239.1M536.4 248.5L537.4 255.4M537.4 255.4L546.4 250.0M537.4 255.4L542.9 261.4M542.9 261.4L548.8 258.5M549.9 266.1L558.2 259.3M551.3 275.1L559.8 267.2M551.3 275.1L550.8 283.6M550.8 283.6L561.1 277.1M550.8 283.6L558.3 287.7M558.3 287.7L565.2 282.2M558.3 287.7L559.0 291.9M559.0 291.9L567.8 297.6M532.3 207.2L538.4 201.5M534.9 214.2L539.4 209.5M534.9 214.2L533.8 224.4M533.8 224.4L543.2 217.3M533.8 224.4L537.8 227.6M537.8 227.6L542.7 223.9M537.8 227.6L541.1 234.8M541.1 234.8L555.3 228.4M541.1 234.8L546.2 239.1M546.2 239.1L555.5 238.0M546.2 239.1L546.4 250.0M546.4 250.0L553.8 244.9M546.4 250.0L548.8 258.5M548.8 258.5L558.2 259.3M558.2 259.3L567.0 257.5M559.8 267.2L572.3 263.0M561.1 277.1L573.3 268.7M561.1 277.1L565.2 282.2M565.2 282.2L575.9 276.5M565.2 282.2L571.0 289.6M539.4 209.5L553.2 205.6M539.4 209.5L543.2 217.3M543.2 217.3L542.7 223.9M542.7 223.9L555.3 228.4M555.3 228.4L562.7 222.9M555.3 228.4L555.5 238.0M555.5 238.0L566.6 232.3M555.5 238.0L553.8 244.9M553.8 244.9L569.1 238.1M562.9 250.3L573.3 245.7M562.9 250.3L567.0 257.5M550.4 214.0L561.9 206.6M550.4 214.0L559.0 218.3" fill="none" stroke="#76864f" stroke-width=".65" opacity=".36"/>
<path d="M586.5 271.6L593.5 270.8L598.8 272.4L587.7 279.3Z" fill="#b2c884" opacity=".32"/><path d="M582.2 254.7L594.0 252.0L600.7 255.6L588.9 263.5Z" fill="#b2c884" opacity=".32"/><path d="M599.6 282.8L606.5 278.3L609.1 287.1L601.2 289.3Z" fill="#b2c884" opacity=".32"/><path d="M609.2 296.5L619.0 290.5L622.9 296.3L614.5 303.2Z" fill="#b2c884" opacity=".32"/><path d="M577.1 204.9L588.1 200.9L591.9 207.2L582.3 209.9Z" fill="#d6d88e" opacity=".28"/><path d="M588.1 228.4L596.3 222.3L602.8 230.5L592.2 232.4Z" fill="#d6d88e" opacity=".28"/><path d="M596.6 237.9L607.3 236.0L607.3 242.0L594.0 252.0Z" fill="#d6d88e" opacity=".28"/><path d="M607.2 259.8L616.6 259.8L622.0 263.0L608.7 267.7Z" fill="#b2c884" opacity=".32"/><path d="M623.6 279.8L632.4 276.2L638.6 280.5L631.3 284.9Z" fill="#d6d88e" opacity=".28"/><path d="M591.3 187.8L602.7 182.2L607.3 191.4L597.9 197.0Z" fill="#d6d88e" opacity=".28"/><path d="M601.1 210.3L613.7 207.3L614.3 216.2L605.4 218.7Z" fill="#b2c884" opacity=".32"/><path d="M605.4 218.7L614.3 216.2L618.9 218.6L611.4 226.1Z" fill="#b2c884" opacity=".32"/><path d="M614.7 242.1L626.9 236.8L633.4 242.7L619.9 245.4Z" fill="#d6d88e" opacity=".28"/><path d="M638.6 280.5L651.8 277.0L656.8 283.7L642.2 290.4Z" fill="#d6d88e" opacity=".28"/><path d="M602.7 182.2L610.6 180.4L620.8 182.0L607.3 191.4Z" fill="#b2c884" opacity=".32"/><path d="M613.7 198.1L625.1 192.2L620.8 202.9L613.7 207.3Z" fill="#d6d88e" opacity=".28"/><path d="M613.7 207.3L620.8 202.9L627.1 208.9L614.3 216.2Z" fill="#d6d88e" opacity=".28"/><path d="M626.9 236.8L635.9 229.7L636.8 237.2L633.4 242.7Z" fill="#b2c884" opacity=".32"/><path d="M643.4 254.5L651.3 250.7L648.9 259.8L638.1 265.0Z" fill="#b2c884" opacity=".32"/><path d="M638.1 265.0L648.9 259.8L652.2 265.3L639.4 270.4Z" fill="#b2c884" opacity=".32"/><path d="M610.6 180.4L619.6 174.4L631.9 180.1L620.8 182.0Z" fill="#d6d88e" opacity=".28"/><path d="M620.8 202.9L636.5 196.4L637.1 205.1L627.1 208.9Z" fill="#b2c884" opacity=".32"/><path d="M632.9 212.9L640.4 208.0L648.1 213.5L636.0 219.9Z" fill="#b2c884" opacity=".32"/><path d="M636.0 219.9L648.1 213.5L647.3 226.0L635.9 229.7Z" fill="#d6d88e" opacity=".28"/><path d="M635.9 229.7L647.3 226.0L650.7 230.5L636.8 237.2Z" fill="#d6d88e" opacity=".28"/><path d="M648.9 259.8L660.5 252.8L667.7 260.5L652.2 265.3Z" fill="#b2c884" opacity=".32"/><path d="M631.9 180.1L643.4 175.5L644.2 182.3L635.8 185.5Z" fill="#d6d88e" opacity=".28"/><path d="M635.8 185.5L644.2 182.3L639.7 190.2L636.5 196.4Z" fill="#b2c884" opacity=".32"/><path d="M640.4 208.0L656.5 204.0L658.6 207.8L648.1 213.5Z" fill="#d6d88e" opacity=".28"/><path d="M648.1 213.5L658.6 207.8L653.6 220.4L647.3 226.0Z" fill="#b2c884" opacity=".32"/><path d="M656.5 204.0L661.3 198.5L667.1 207.1L658.6 207.8Z" fill="#d6d88e" opacity=".28"/><path d="M657.6 193.0L669.4 186.7L674.4 192.4L661.3 198.5Z" fill="#b2c884" opacity=".32"/><path d="M586.5 271.6L593.5 270.8M587.7 279.3L598.8 272.4M589.7 296.9L596.8 302.3M583.9 237.0L592.2 232.4M583.9 237.0L584.3 245.6M584.3 245.6L582.2 254.7M582.2 254.7L594.0 252.0M582.2 254.7L588.9 263.5M588.9 263.5L600.7 255.6M588.9 263.5L593.5 270.8M593.5 270.8L607.2 259.8M598.8 272.4L608.7 267.7M598.8 272.4L599.6 282.8M599.6 282.8L606.5 278.3M599.6 282.8L601.2 289.3M601.2 289.3L609.2 296.5M609.2 296.5L619.0 290.5M609.2 296.5L614.5 303.2M582.3 209.9L591.9 207.2M582.3 209.9L578.4 223.0M588.1 228.4L596.3 222.3M588.1 228.4L592.2 232.4M592.2 232.4L602.8 230.5M592.2 232.4L596.6 237.9M596.6 237.9L607.3 236.0M596.6 237.9L594.0 252.0M594.0 252.0L607.3 242.0M594.0 252.0L600.7 255.6M600.7 255.6L609.6 252.5M607.2 259.8L616.6 259.8M607.2 259.8L608.7 267.7M608.7 267.7L622.0 263.0M608.7 267.7L606.5 278.3M606.5 278.3L620.5 274.6M606.5 278.3L609.1 287.1M609.1 287.1L623.6 279.8M609.1 287.1L619.0 290.5M619.0 290.5L631.3 284.9M619.0 290.5L622.9 296.3M622.9 296.3L622.9 307.7M580.8 196.5L591.3 187.8M580.8 196.5L588.1 200.9M588.1 200.9L597.9 197.0M588.1 200.9L591.9 207.2M591.9 207.2L602.8 203.0M591.9 207.2L592.1 218.3M592.1 218.3L601.1 210.3M592.1 218.3L596.3 222.3M596.3 222.3L605.4 218.7M596.3 222.3L602.8 230.5M602.8 230.5L611.4 226.1M602.8 230.5L607.3 236.0M607.3 236.0L618.1 228.2M607.3 236.0L607.3 242.0M607.3 242.0L609.6 252.5M609.6 252.5L619.9 245.4M609.6 252.5L616.6 259.8M616.6 259.8L626.2 251.3M616.6 259.8L622.0 263.0M622.0 263.0L632.1 259.2M622.0 263.0L620.5 274.6M620.5 274.6L628.9 267.3M620.5 274.6L623.6 279.8M623.6 279.8L632.4 276.2M623.6 279.8L631.3 284.9M631.3 284.9L638.6 280.5M631.3 284.9L631.4 295.4M631.4 295.4L633.9 301.8M591.3 187.8L602.7 182.2M591.3 187.8L597.9 197.0M597.9 197.0L607.3 191.4M597.9 197.0L602.8 203.0M602.8 203.0L613.7 198.1M602.8 203.0L601.1 210.3M601.1 210.3L613.7 207.3M601.1 210.3L605.4 218.7M611.4 226.1L618.9 218.6M611.4 226.1L618.1 228.2M618.1 228.2L624.3 228.4M618.1 228.2L614.7 242.1M614.7 242.1L626.9 236.8M619.9 245.4L633.4 242.7M619.9 245.4L626.2 251.3M632.1 259.2L643.4 254.5M632.1 259.2L628.9 267.3M628.9 267.3L638.1 265.0M628.9 267.3L632.4 276.2M632.4 276.2L639.4 270.4M632.4 276.2L638.6 280.5M638.6 280.5L642.2 290.4M595.0 178.1L609.6 170.4M595.0 178.1L602.7 182.2M602.7 182.2L610.6 180.4M607.3 191.4L620.8 182.0M607.3 191.4L613.7 198.1M613.7 198.1L625.1 192.2M613.7 198.1L613.7 207.3M613.7 207.3L620.8 202.9M613.7 207.3L614.3 216.2M614.3 216.2L627.1 208.9M614.3 216.2L618.9 218.6M618.9 218.6L632.9 212.9M618.9 218.6L624.3 228.4M624.3 228.4L636.0 219.9M624.3 228.4L626.9 236.8M626.9 236.8L635.9 229.7M626.9 236.8L633.4 242.7M633.4 242.7L636.8 237.2M637.0 246.7L645.7 242.7M637.0 246.7L643.4 254.5M643.4 254.5L651.3 250.7M643.4 254.5L638.1 265.0M638.1 265.0L639.4 270.4M639.4 270.4L652.2 265.3M639.4 270.4L651.8 277.0M609.6 170.4L619.0 168.1M609.6 170.4L610.6 180.4M610.6 180.4L619.6 174.4M610.6 180.4L620.8 182.0M620.8 182.0L631.9 180.1M620.8 182.0L625.1 192.2M625.1 192.2L635.8 185.5M620.8 202.9L636.5 196.4M620.8 202.9L627.1 208.9M627.1 208.9L637.1 205.1M627.1 208.9L632.9 212.9M632.9 212.9L636.0 219.9M636.0 219.9L648.1 213.5M636.0 219.9L635.9 229.7M635.9 229.7L647.3 226.0M645.7 242.7L658.1 234.8M645.7 242.7L651.3 250.7M651.3 250.7L662.0 246.4M651.3 250.7L648.9 259.8M648.9 259.8L660.5 252.8M648.9 259.8L652.2 265.3M619.6 174.4L631.9 180.1M631.9 180.1L643.4 175.5M635.8 185.5L644.2 182.3M635.8 185.5L636.5 196.4M636.5 196.4L639.7 190.2M636.5 196.4L637.1 205.1M637.1 205.1L645.3 200.2M637.1 205.1L640.4 208.0M640.4 208.0L648.1 213.5M648.1 213.5L658.6 207.8M648.1 213.5L647.3 226.0M647.3 226.0L653.6 220.4M647.3 226.0L650.7 230.5M650.7 230.5L657.7 229.0M650.7 230.5L658.1 234.8M658.1 234.8L671.2 233.1M643.4 175.5L644.2 182.3M639.7 190.2L645.3 200.2M645.3 200.2L657.6 193.0M645.3 200.2L656.5 204.0M656.5 204.0L661.3 198.5M656.5 204.0L658.6 207.8M658.6 207.8L667.1 207.1M653.6 220.4L666.4 213.9M653.6 220.4L657.7 229.0M657.7 229.0L669.5 221.9M657.7 229.0L671.2 233.1M652.2 178.6L667.2 173.3M652.2 178.6L651.1 187.1M651.1 187.1L662.7 182.4M657.6 193.0L669.4 186.7" fill="none" stroke="#76864f" stroke-width=".65" opacity=".36"/>
<path d="M540.3 167.7L550.1 161.3L554.5 166.0L545.1 173.3Z" fill="#d6d88e" opacity=".28"/><path d="M550.1 161.3L563.2 154.8L562.4 162.1L554.5 166.0Z" fill="#d6d88e" opacity=".28"/><path d="M512.1 154.3L519.9 150.9M512.1 154.3L515.9 161.8M515.9 161.8L529.2 153.1M515.9 161.8L521.8 165.4M521.8 165.4L520.3 176.0M529.2 153.1L537.6 152.5M529.2 153.1L529.2 165.7M529.2 165.7L541.1 156.1M529.2 165.7L534.6 171.5M534.6 171.5L540.3 167.7M534.6 171.5L535.5 179.3M541.1 156.1L549.0 151.6M540.3 167.7L550.1 161.3M545.1 173.3L554.5 166.0M545.1 173.3L550.1 176.1M549.0 151.6L562.3 144.6M549.0 151.6L550.1 161.3M550.1 161.3L563.2 154.8M550.1 161.3L554.5 166.0" fill="none" stroke="#76864f" stroke-width=".65" opacity=".36"/>
<path d="M581.0 173.7L589.4 173.1L587.4 182.5L579.4 183.2Z" fill="#b2c884" opacity=".32"/><path d="M581.8 157.1L590.4 153.1L593.4 160.1L585.8 166.7Z" fill="#b2c884" opacity=".32"/><path d="M589.4 173.1L600.8 165.2L601.1 174.2L587.4 182.5Z" fill="#d6d88e" opacity=".28"/><path d="M593.4 160.1L605.1 155.6L608.8 164.1L600.8 165.2Z" fill="#d6d88e" opacity=".28"/><path d="M600.8 165.2L608.8 164.1L612.7 171.9L601.1 174.2Z" fill="#b2c884" opacity=".32"/><path d="M616.5 157.9L630.1 155.5L627.9 165.1L617.4 166.1Z" fill="#d6d88e" opacity=".28"/><path d="M572.2 164.0L581.8 157.1M578.7 168.3L585.8 166.7M581.0 173.7L589.4 173.1M581.0 173.7L579.4 183.2M579.4 183.2L587.4 182.5M579.4 183.2L584.4 191.4M581.8 157.1L590.4 153.1M581.8 157.1L585.8 166.7M585.8 166.7L593.4 160.1M589.4 173.1L600.8 165.2M589.4 173.1L587.4 182.5M590.4 153.1L603.0 150.6M593.4 160.1L605.1 155.6M593.4 160.1L600.8 165.2M600.8 165.2L608.8 164.1M605.1 155.6L616.4 150.4M608.8 164.1L616.5 157.9M616.5 157.9L617.4 166.1M617.4 166.1L627.9 165.1M617.4 166.1L620.2 177.3M630.1 155.5L640.2 149.0M630.1 155.5L627.9 165.1M627.9 165.1L636.8 157.6M627.9 165.1L635.6 169.4" fill="none" stroke="#76864f" stroke-width=".65" opacity=".36"/>
</g>
<path d="M786.0 153.0L796.0 175.0L803.0 195.0L801.0 215.0L816.0 232.0L810.0 250.0L813.0 275.0L829.0 300.0L832.0 330.0L837.0 360.0L839.0 400.0L847.0 440.0L857.6 470.0L864.0 500.0L865.0 504.0L959.0 504.0L959.0 153.0Z" fill="#bdb9a2" filter="url(#b2)"/>
<path d="M744.0 153.0L747.5 165.0L746.0 180.0L757.0 190.0L756.0 200.0L757.5 210.0L756.0 220.0L763.0 230.0L760.0 260.0L766.7 290.0L781.0 320.0L780.0 350.0L794.0 380.0L804.0 410.0L807.0 440.0L797.0 470.0L817.5 500.0L819.0 504.0L879.0 504.0L878.0 500.0L871.6 470.0L861.0 440.0L853.0 400.0L851.0 360.0L846.0 330.0L843.0 300.0L827.0 275.0L824.0 250.0L830.0 232.0L815.0 215.0L817.0 195.0L810.0 175.0L800.0 153.0Z" fill="#e2deb4" filter="url(#b2)"/>
<clipPath id="hc"><path d="M744.0 153.0L746.0 157.4L746.7 160.8L747.5 165.0L748.5 172.0L746.4 175.7L746.0 180.0L747.7 184.2L754.0 188.8L757.0 190.0L757.9 194.1L756.0 200.0L756.2 205.7L757.5 210.0L754.6 214.8L756.0 220.0L756.9 221.6L758.7 227.8L763.0 230.0L760.9 233.2L761.7 240.2L759.9 242.6L761.5 248.8L762.3 253.0L759.5 255.3L760.0 260.0L760.3 266.0L763.9 267.0L761.4 271.7L762.7 277.1L765.2 280.4L763.6 285.4L766.7 290.0L767.9 294.0L772.3 298.3L772.1 301.8L774.6 303.0L777.4 310.0L779.1 313.8L778.7 315.8L781.0 320.0L779.1 324.9L778.8 326.7L779.3 331.4L779.7 335.2L778.1 339.9L778.4 345.1L780.0 350.0L779.7 355.4L784.0 356.0L784.2 360.6L786.4 363.3L790.3 370.9L790.4 372.4L790.4 374.5L794.0 380.0L794.7 383.3L798.3 387.1L796.2 394.8L799.8 395.6L801.3 399.3L802.7 407.8L804.0 410.0L806.0 415.1L803.8 418.0L803.8 424.1L805.9 428.4L805.4 430.2L807.9 437.8L807.0 440.0L807.1 445.6L805.5 449.6L801.5 452.9L800.7 455.1L797.8 460.5L797.4 466.6L797.0 470.0L801.3 473.1L803.5 478.8L805.8 479.4L804.9 482.1L807.1 485.4L811.2 491.8L814.4 493.2L815.9 498.0L817.5 500.0L819.0 504.0L879.0 504.0L878.0 500.0L879.4 496.7L875.4 489.9L873.4 487.3L875.6 482.3L873.5 473.2L871.6 470.0L868.1 466.1L869.5 462.0L864.2 455.8L862.4 448.7L860.9 444.7L861.0 440.0L861.7 433.2L859.3 432.2L860.2 423.8L858.0 421.9L855.9 417.2L854.8 410.2L854.1 406.0L853.0 400.0L853.3 395.0L854.6 389.7L852.6 386.3L853.4 380.0L850.5 373.9L849.5 370.3L851.5 366.4L851.0 360.0L849.3 355.1L850.5 350.3L846.9 344.9L845.2 341.5L846.5 333.4L846.0 330.0L845.6 322.6L845.0 320.2L844.1 317.1L844.4 312.0L842.8 304.8L843.0 300.0L838.0 297.1L835.4 289.6L832.1 285.4L829.0 279.0L827.0 275.0L828.0 268.6L825.5 266.9L825.3 262.2L827.0 255.7L824.0 250.0L824.2 241.6L827.3 238.2L830.0 232.0L828.7 228.5L820.7 225.1L820.8 220.8L815.0 215.0L813.6 208.3L817.1 203.4L816.0 202.2L817.0 195.0L817.6 189.5L812.7 186.5L810.1 181.4L810.0 175.0L808.8 169.4L807.0 165.4L800.4 159.3L800.0 153.0Z"/></clipPath>
<filter id="hv" x="0" y="0" width="100%" height="100%"><feTurbulence type="fractalNoise" baseFrequency=".1 .28" numOctaves="4" seed="8"/><feColorMatrix values="0 0 0 0 .24  0 0 0 0 .21  0 0 0 0 .15  18 0 0 0 -9.900"/></filter>
<filter id="hv2" x="0" y="0" width="100%" height="100%"><feTurbulence type="fractalNoise" baseFrequency=".03 .05" numOctaves="2" seed="31"/><feColorMatrix values="0 0 0 0 .45  0 0 0 0 .42  0 0 0 0 .34  3 0 0 0 -1.350"/></filter>
<g clip-path="url(#hc)"><rect x="740" y="153" width="150" height="351" filter="url(#hv2)" opacity=".22"/><rect x="740" y="153" width="150" height="351" filter="url(#hv)" opacity=".8"/></g>
<g fill="#463e30" filter="url(#b1)"><path d="M768.7 152.8q2.8 -2 4.7 .2t4.7 .9q-2.4 2.5 -4.3 .6t-5.2 -1.7zM794.8 161.6q5 -3.1 8.4 -.5t8.4 .4q-4.2 3.3 -7.5 1.6t-9.2 -1.5zM744.1 170.7q4.9 -3.8 8.2 -2t8.2 -1.1q-4.1 3.3 -7.4 3.1t-9 0zM780.6 170.7q5 -4.3 8.4 -1.9t8.4 -.9q-4.2 3.9 -7.6 3.2t-9.2 -.4zM740.2 174.5q5.3 -2.5 8.9 -.9t8.9 -.3q-4.4 2.4 -8 1.7t-9.8 -.5zM753.6 173.2q4.8 -2.3 8 -.4t8 .2q-4 2.4 -7.2 1.2t-8.8 -1zM775.6 173.3q3.4 -2.6 5.7 -.3t5.7 .4q-2.8 2.8 -5.1 1.3t-6.2 -1.4zM742.1 176.2q3.8 -2.5 6.4 0t6.4 .7q-3.2 2.9 -5.7 1t-7 -1.7zM751.4 176.5q4.1 -1.7 6.9 .3t6.9 .8q-3.5 2.2 -6.2 .5t-7.6 -1.6zM738.5 180.2q5.6 -2.5 9.4 -.7t9.4 -.1q-4.7 2.4 -8.4 1.6t-10.3 -.7zM777.3 182.9q4 -4.1 6.7 -1.7t6.7 -.7q-3.4 3.7 -6.1 2.9t-7.4 -.5zM788.1 182.7q3.1 -2.6 5.1 -1.3t5.1 -.7q-2.6 2.3 -4.6 2t-5.7 -.1zM803.8 181q3.8 -2.4 6.4 -.9t6.4 -.3q-3.2 2.3 -5.7 1.7t-7 -.5zM775.9 185.8q3.7 -4 6.1 -1.2t6.1 -.2q-3 3.9 -5.5 2.5t-6.7 -1.1zM799.5 189.8q4.5 -3.5 7.5 -1t7.5 -.1q-3.7 3.4 -6.7 2.1t-8.2 -1.1zM762.3 191.9q3.5 -2.9 5.8 -.1t5.8 .8q-2.9 3.3 -5.3 1.2t-6.4 -1.9zM795.1 193.4q3.5 -2.8 5.9 .1t5.9 .9q-3 3.3 -5.3 1t-6.5 -2zM761.8 200.5q3.5 -3.8 5.9 -.7t5.9 .3q-2.9 4 -5.3 2.1t-6.5 -1.6zM807.5 200.5q4 -3.5 6.6 -.1t6.6 1q-3.3 4 -5.9 1.4t-7.3 -2.3zM758.1 204.5q4.6 -3 7.7 -1.1t7.7 -.4q-3.9 2.8 -6.9 2.1t-8.5 -.6zM769.1 206.2q4.3 -4 7.2 -1.8t7.2 -.9q-3.6 3.5 -6.5 3t-7.9 -.3zM754.1 209.9q3.9 -3.7 6.4 -1.5t6.4 -.7q-3.2 3.3 -5.8 2.7t-7.1 -.4zM766.6 208.1q2.9 -3.5 4.8 -.9t4.8 0q-2.4 3.5 -4.3 2.1t-5.2 -1.2zM785.4 209q4.8 -2.8 7.9 -1.7t7.9 -1.1q-4 2.3 -7.1 2.4t-8.7 .3zM800.7 214.3q5.1 -3.9 8.5 -1.1t8.5 -.1q-4.2 3.8 -7.6 2.4t-9.3 -1.2zM761.8 217.5q4.1 -3.5 6.9 -.8t6.9 .1q-3.4 3.6 -6.2 2t-7.5 -1.3zM804.9 216q3.8 -2 6.3 -.2t6.3 .4q-3.1 2.2 -5.7 .9t-6.9 -1.1zM751.6 222q4.5 -4.1 7.6 -1.8t7.6 -.8q-3.8 3.7 -6.8 3t-8.3 -.4zM765.4 222.4q4.3 -3.5 7.2 -1.7t7.2 -.9q-3.6 3 -6.5 2.8t-7.9 -.1zM810.9 219.3q2.9 -1.9 4.8 -.1t4.8 .5q-2.4 2.1 -4.3 .8t-5.3 -1.2zM760.8 224.9q3.9 -3.1 6.5 -1.1t6.5 -.3q-3.3 3 -5.9 2.1t-7.2 -.7zM805.2 222.9q3.5 -3.2 5.8 -.4t5.8 .5q-2.9 3.4 -5.2 1.6t-6.3 -1.6zM758.3 230.3q3.1 -2.6 5.2 -.1t5.2 .7q-2.6 3 -4.6 1t-5.7 -1.7zM763.8 235.7q5.2 -3.7 8.6 -1.6t8.6 -.7q-4.3 3.4 -7.7 2.7t-9.5 -.5zM787.4 235.1q3.4 -3.8 5.6 -.5t5.6 .5q-2.8 4 -5.1 1.9t-6.2 -1.9zM815.3 235.1q3.2 -3.6 5.4 -1.1t5.4 -.1q-2.7 3.5 -4.8 2.2t-5.9 -1zM760 239.6q2.7 -3 4.5 -1.4t4.5 -.7q-2.3 2.7 -4.1 2.3t-5 -.2zM800.2 244q5 -2.6 8.3 -.8t8.3 -.1q-4.1 2.5 -7.4 1.6t-9.1 -.7zM810.1 248.8q3.5 -3.4 5.8 -1.9t5.8 -1.2q-2.9 2.8 -5.2 2.9t-6.4 .3zM756 256.2q5.3 -2.7 8.8 -.1t8.8 .7q-4.4 3 -7.9 1.1t-9.7 -1.8zM795.7 255.5q3.7 -2.8 6.2 -1.4t6.2 -.7q-3.1 2.4 -5.6 2.2t-6.8 -.1zM754.3 259.2q3.6 -3.3 6 -1t6 -.1q-3 3.3 -5.4 2.1t-6.6 -1zM789.9 259.9q2.8 -3.7 4.6 -1.4t4.6 -.5q-2.3 3.4 -4.1 2.5t-5.1 -.7zM757.8 269.1q4 -4.4 6.6 -2.2t6.6 -1.1q-3.3 3.8 -6 3.4t-7.3 -.1zM792.6 266.6q4.8 -1.9 7.9 .1t7.9 .7q-4 2.2 -7.1 .7t-8.7 -1.4zM808.4 267.2q3.4 -2.3 5.7 .2t5.7 1q-2.9 2.8 -5.1 .7t-6.3 -1.9zM813.6 270q3 -2.2 5 .2t5 1q-2.5 2.7 -4.5 .7t-5.5 -1.9zM759.2 275.1q5.4 -3.6 8.9 -1.2t8.9 -.3q-4.5 3.5 -8 2.3t-9.8 -.9zM769.9 279.1q4.2 -2.6 7 -1t7 -.3q-3.5 2.4 -6.3 1.8t-7.7 -.5zM783.5 280.4q4.4 -3.6 7.3 -1.7t7.3 -.8q-3.6 3.2 -6.6 2.7t-8 -.2zM822.5 280.1q4.4 -3.7 7.3 -1.6t7.3 -.7q-3.7 3.4 -6.6 2.7t-8 -.5zM792.7 282.7q4.7 -3 7.9 -1t7.9 -.2q-4 2.9 -7.1 1.9t-8.7 -.8zM775.1 286.8q4.7 -2.6 7.9 -.2t7.9 .5q-3.9 2.8 -7.1 1.2t-8.6 -1.5zM781.4 286.9q5.3 -4.2 8.9 -1.4t8.9 -.3q-4.4 4 -8 2.7t-9.8 -1.1zM767.1 289.7q3.1 -3.3 5.2 -.4t5.2 .6q-2.6 3.6 -4.7 1.5t-5.7 -1.8zM790.5 290.2q5.5 -2.9 9.1 -.2t9.1 .7q-4.6 3.2 -8.2 1.3t-10 -1.7zM764.3 299.3q4 -3.6 6.6 -1.9t6.6 -1.1q-3.3 3.1 -6 2.9t-7.3 0zM775.7 300.4q3.9 -4.2 6.5 -1.6t6.5 -.5q-3.3 3.9 -5.9 2.9t-7.2 -.8zM770.5 303.2q3.1 -4.2 5.2 -1.8t5.2 -.7q-2.6 3.9 -4.7 3.1t-5.7 -.6zM835.7 303.1q4.1 -3.2 6.9 -.3t6.9 .7q-3.4 3.5 -6.2 1.5t-7.6 -1.8zM813.6 306.4q2.8 -2.8 4.6 -1.1t4.6 -.5q-2.3 2.6 -4.2 2t-5.1 -.4zM833.2 306q5.4 -3.9 9 -1t9 .1q-4.5 3.9 -8.1 2.3t-9.9 -1.4zM791.5 309.5q2.9 -3.5 4.9 -.3t4.9 .8q-2.5 3.9 -4.4 1.6t-5.4 -2.1zM834.4 309.7q5.4 -2.4 9 -.3t9 .4q-4.5 2.7 -8.1 1.2t-9.9 -1.3zM780.7 318.2q2.8 -3.4 4.6 -1.9t4.6 -1.1q-2.3 2.8 -4.2 2.8t-5.1 .2zM793.3 316.5q2.7 -1.9 4.5 .3t4.5 .9q-2.3 2.3 -4.1 .5t-5 -1.7zM833.2 318.7q3.9 -3.9 6.5 -1.7t6.5 -.8q-3.2 3.5 -5.8 2.9t-7.1 -.4zM780.9 321.3q5.6 -3.8 9.4 -.5t9.4 .6q-4.7 4 -8.5 1.9t-10.3 -1.9zM826.5 323.7q4.6 -4.5 7.6 -2.2t7.6 -1.2q-3.8 3.9 -6.8 3.5t-8.3 -.2zM773.1 326.6q5.6 -2.8 9.4 -1.4t9.4 -.7q-4.7 2.4 -8.4 2.2t-10.3 -.1zM795.1 328.3q4.5 -2.3 7.6 .1t7.6 .8q-3.8 2.7 -6.8 .8t-8.3 -1.7zM816.8 330.2q2.9 -2.9 4.9 .1t4.9 1q-2.4 3.4 -4.4 1.1t-5.4 -2.1zM775.5 336.5q3.2 -1.7 5.3 .4t5.3 .9q-2.6 2.2 -4.8 .4t-5.8 -1.7zM782.4 343q4.2 -3.8 7.1 -1.1t7.1 -.1q-3.5 3.7 -6.3 2.4t-7.8 -1.1zM796.5 343.2q4.8 -3.2 8.1 -1.6t8.1 -.8q-4 2.8 -7.3 2.5t-8.9 -.1zM835.5 341.5q2.8 -1.8 4.6 .2t4.6 .8q-2.3 2.2 -4.1 .5t-5 -1.5zM777.4 345.8q4.6 -3.3 7.7 -1.7t7.7 -1q-3.9 2.8 -7 2.6t-8.5 0zM801.6 348.1q4.3 -2.6 7.1 -1.5t7.1 -.9q-3.6 2.2 -6.4 2.2t-7.8 .2zM835.5 346q2.8 -4.1 4.7 -2.1t4.7 -1.1q-2.3 3.5 -4.2 3.2t-5.1 0zM773.9 348.5q5.1 -2.3 8.5 -.2t8.5 .5q-4.2 2.6 -7.6 1t-9.3 -1.4zM787.5 349.6q4.2 -2.6 7 -.5t7 .3q-3.5 2.7 -6.3 1.4t-7.7 -1.2zM797.1 348.8q3.7 -3.2 6.2 -1t6.2 -.1q-3.1 3.2 -5.5 2t-6.8 -.9zM808.6 348.4q4.2 -3.1 7.1 -.5t7.1 .4q-3.5 3.3 -6.4 1.6t-7.8 -1.5zM822 352.4q3 -2.1 5.1 0t5.1 .6q-2.5 2.4 -4.6 .9t-5.6 -1.4zM810.9 357q3.9 -2.1 6.5 -.5t6.5 0q-3.2 2.2 -5.8 1.2t-7.1 -.8zM841.3 358.4q4.3 -3.1 7.1 -1.7t7.1 -1q-3.6 2.6 -6.4 2.6t-7.8 .1zM796 360.5q3 -2.2 5.1 .2t5.1 .9q-2.5 2.7 -4.6 .7t-5.6 -1.8zM827.5 361.3q5.7 -2.8 9.5 0t9.5 .8q-4.7 3.2 -8.5 1.1t-10.4 -1.9zM815.4 365.8q5.3 -4.1 8.9 -1.3t8.9 -.3q-4.4 3.9 -8 2.6t-9.7 -1zM831.9 364.4q3.3 -2 5.5 -.1t5.5 .5q-2.7 2.2 -4.9 .9t-6 -1.2zM839.5 363.8q4.4 -2.8 7.3 -.8t7.3 0q-3.7 2.8 -6.6 1.7t-8.1 -.9zM796.1 376.3q4.7 -2.5 7.8 -1.2t7.8 -.6q-3.9 2.3 -7.1 1.9t-8.6 -.2zM806.4 375.6q5.4 -2.6 8.9 .1t8.9 .9q-4.5 3.1 -8 .9t-9.8 -1.9zM833 378q5.6 -4.6 9.3 -2.1t9.3 -1.1q-4.6 4 -8.4 3.5t-10.2 -.3zM794.5 383.6q4.9 -3.2 8.2 -.5t8.2 .4q-4.1 3.5 -7.4 1.6t-9 -1.6zM830.3 382.2q3.6 -2.6 6.1 -.4t6.1 .3q-3 2.7 -5.4 1.3t-6.7 -1.2zM793.3 388.8q3.5 -3.5 5.9 -1.2t5.9 -.4q-2.9 3.3 -5.3 2.3t-6.4 -.7zM794.8 392.4q5.7 -3.6 9.5 -1t9.5 -.1q-4.7 3.5 -8.5 2.2t-10.4 -1.1zM819.9 392.3q3.2 -3.3 5.3 -.6t5.3 .3q-2.7 3.4 -4.8 1.8t-5.9 -1.4zM830.7 392.8q4.9 -3.2 8.2 -1.2t8.2 -.4q-4.1 3 -7.4 2.2t-9.1 -.6zM808.6 396.6q2.8 -3.6 4.6 -1.3t4.6 -.4q-2.3 3.3 -4.2 2.4t-5.1 -.7zM826.4 395.2q4.7 -3 7.9 -1.6t7.9 -.9q-3.9 2.6 -7.1 2.4t-8.6 .1zM799.4 404.8q4.8 -2.7 8 -1.2t8 -.6q-4 2.4 -7.2 2t-8.8 -.2zM820.8 404.6q3.5 -3.7 5.8 -1.6t5.8 -.7q-2.9 3.4 -5.2 2.7t-6.3 -.5zM813.6 405.5q3.7 -2.5 6.1 -.5t6.1 .2q-3 2.6 -5.5 1.4t-6.7 -1.1zM825.5 406q3.5 -3.1 5.8 0t5.8 1q-2.9 3.6 -5.2 1.2t-6.4 -2.2zM817.7 410.9q3.5 -2.8 5.8 -.8t5.8 -.1q-2.9 2.7 -5.2 1.7t-6.4 -.8zM847.9 414.8q3.4 -3.2 5.7 -1.3t5.7 -.5q-2.9 2.9 -5.2 2.3t-6.3 -.5zM804.5 418.8q4.8 -3 8 -1.8t8 -1.2q-4 2.4 -7.2 2.6t-8.8 .4zM804.2 431.6q3.8 -3.4 6.3 -1.1t6.3 -.2q-3.2 3.3 -5.7 2.2t-6.9 -.9zM819.7 434.2q5.2 -4.3 8.7 -1.7t8.7 -.6q-4.3 4 -7.8 3t-9.5 -.7zM834 439q4 -2.6 6.7 -.7t6.7 0q-3.4 2.6 -6 1.6t-7.4 -.8zM802 443.3q5.1 -4.1 8.4 -1.3t8.4 -.3q-4.2 3.9 -7.6 2.6t-9.3 -1zM833.2 443.2q4.5 -3 7.6 -.8t7.6 0q-3.8 3 -6.8 1.8t-8.3 -1zM852.2 446.2q3.1 -3.2 5.1 0t5.1 1q-2.5 3.7 -4.6 1.2t-5.6 -2.2zM800.5 454.6q4.4 -3.6 7.3 -1.6t7.3 -.7q-3.6 3.3 -6.5 2.7t-8 -.4zM846.5 455.1q3.8 -3.5 6.4 -1.9t6.4 -1.1q-3.2 2.9 -5.7 2.8t-7 .1zM856 453.8q3.4 -3.8 5.7 -1.1t5.7 -.2q-2.9 3.7 -5.1 2.4t-6.3 -1.1zM794.6 456.8q4.5 -3.4 7.6 -.6t7.6 .3q-3.8 3.5 -6.8 1.8t-8.3 -1.5zM807.7 460.5q3.3 -4 5.6 -2t5.6 -1.1q-2.8 3.4 -5 3.1t-6.1 0zM834.5 457.1q4.7 -2.1 7.8 .2t7.8 .9q-3.9 2.6 -7 .6t-8.5 -1.8zM793.9 465.8q4.9 -3.4 8.2 -.4t8.2 .6q-4.1 3.7 -7.4 1.6t-9 -1.8zM804 465.9q4.3 -2.5 7.1 -.9t7.1 -.2q-3.6 2.4 -6.4 1.7t-7.8 -.6zM826.8 464.3q4.3 -2.9 7.2 -.1t7.2 .8q-3.6 3.3 -6.5 1.2t-7.9 -2zM791.2 469q5 -3.1 8.4 -.9t8.4 -.1q-4.2 3.1 -7.5 1.9t-9.2 -.9zM800.4 469.1q4.3 -3.2 7.2 -1.1t7.2 -.3q-3.6 3.1 -6.5 2.1t-7.9 -.7zM810.1 474.2q3.8 -2.5 6.3 -1.4t6.3 -.8q-3.1 2.1 -5.6 2.1t-6.9 .1zM799.5 478.9q5.4 -3 9 -1t9 -.3q-4.5 2.9 -8.1 2t-9.9 -.7zM827.5 477.8q4.6 -2.3 7.7 -.8t7.7 -.3q-3.9 2.2 -7 1.6t-8.5 -.5zM822.7 481q3.4 -3.3 5.7 -1.6t5.7 -.9q-2.9 2.9 -5.2 2.6t-6.3 -.1zM814.1 485.6q3 -3.3 5 -.5t5 .4q-2.5 3.4 -4.5 1.7t-5.5 -1.5zM859.1 485.8q4.3 -2.2 7.2 .2t7.2 .9q-3.6 2.7 -6.5 .7t-7.9 -1.8zM806.7 490.7q4.1 -4.2 6.9 -2.1t6.9 -1.1q-3.4 3.7 -6.2 3.3t-7.6 -.1zM817.4 489.5q5.3 -3.7 8.8 -.5t8.8 .5q-4.4 4 -7.9 1.9t-9.7 -1.9zM869 488.7q3.9 -2.2 6.5 -.1t6.5 .5q-3.3 2.4 -5.9 1t-7.2 -1.3zM866.7 492.6q3.5 -3.3 5.8 -.9t5.8 0q-2.9 3.4 -5.2 2t-6.3 -1.2zM827.4 498.9q5.4 -2.9 9 -1.4t9 -.8q-4.5 2.5 -8.1 2.2t-9.9 -.1zM866.8 497.8q4.5 -4.2 7.5 -1.6t7.5 -.6q-3.8 3.9 -6.8 2.9t-8.3 -.7zM867.5 504.4q5 -4 8.3 -1.9t8.3 -.9q-4.2 3.6 -7.5 3.1t-9.2 -.2z" opacity=".8"/><path d="M752.6 153.6q5.6 -1.9 9.4 -.1t9.4 .4q-4.7 2.1 -8.4 .8t-10.3 -1.2zM781.8 154.1q4.3 -4.1 7.1 -1.9t7.1 -1q-3.6 3.6 -6.4 3.1t-7.8 -.2zM791.9 154.5q3 -2.7 5 -.6t5 .1q-2.5 2.8 -4.5 1.5t-5.5 -1.1zM796.6 156.7q3 -2.4 4.9 -.2t4.9 .5q-2.5 2.6 -4.5 1.1t-5.4 -1.4zM757.7 164.7q4.5 -2.7 7.5 .1t7.5 .9q-3.7 3.2 -6.7 1t-8.2 -2zM769.2 165.6q4.4 -3.7 7.3 -1.8t7.3 -.9q-3.7 3.3 -6.6 2.9t-8.1 -.2zM775 164.3q5.6 -2.4 9.4 .2t9.4 .9q-4.7 2.8 -8.4 .8t-10.3 -1.9zM758.7 170q5 -2.9 8.4 -.7t8.4 .1q-4.2 2.9 -7.6 1.7t-9.2 -1zM769.1 170.2q5.3 -2.8 8.8 -1.2t8.8 -.5q-4.4 2.5 -7.9 2t-9.6 -.3zM784.3 174.8q3.1 -3.6 5.1 -1.5t5.1 -.7q-2.6 3.3 -4.6 2.6t-5.6 -.4zM794.8 173.5q4.9 -2.6 8.1 -1.5t8.1 -.9q-4.1 2.2 -7.3 2.2t-8.9 .1zM801.2 175.7q4.7 -4.1 7.8 -1.9t7.8 -.9q-3.9 3.7 -7 3.1t-8.6 -.3zM785.1 177.4q3.4 -2.4 5.7 -.9t5.7 -.3q-2.8 2.3 -5.1 1.7t-6.2 -.4zM767.5 182.2q2.8 -3.2 4.6 -1t4.6 -.1q-2.3 3.2 -4.1 2t-5 -.9zM752.9 184.6q3.7 -2.1 6.2 -.5t6.2 .1q-3.1 2.1 -5.5 1.2t-6.8 -.8zM775.8 188.8q3.6 -2.9 6.1 -.9t6.1 -.2q-3 2.8 -5.5 1.9t-6.7 -.8zM751.7 193.3q3.9 -2.2 6.4 -.3t6.4 .3q-3.2 2.3 -5.8 1.1t-7.1 -1.1zM804.7 193.4q3.3 -3.1 5.5 -.6t5.5 .2q-2.7 3.3 -4.9 1.7t-6 -1.3zM768 197.9q3.1 -3.5 5.1 -1.2t5.1 -.4q-2.5 3.3 -4.6 2.3t-5.6 -.7zM803.5 198.1q3.6 -2.9 6 -.5t6 .3q-3 3.1 -5.4 1.5t-6.5 -1.4zM786.9 201.5q2.8 -3.7 4.6 -1.3t4.6 -.3q-2.3 3.6 -4.2 2.5t-5.1 -.9zM799.5 204.5q3.6 -2.9 6 -.6t6 .2q-3 3 -5.4 1.5t-6.6 -1.2zM774.1 209.4q4.5 -2.1 7.4 -.2t7.4 .4q-3.7 2.3 -6.7 1t-8.2 -1.2zM808.2 210.7q3.5 -3.3 5.8 -1.9t5.8 -1.2q-2.9 2.7 -5.2 2.8t-6.4 .3zM758.2 212.8q3.8 -4.1 6.3 -1.6t6.3 -.6q-3.1 3.8 -5.7 2.9t-6.9 -.7zM771.4 213.1q3 -3 5 -.2t5 .7q-2.5 3.3 -4.5 1.3t-5.5 -1.8zM795.6 213q2.9 -3.6 4.8 -1.2t4.8 -.3q-2.4 3.5 -4.3 2.4t-5.3 -.9zM748 216.1q5.5 -3.1 9.2 -1t9.2 -.2q-4.6 3 -8.3 2t-10.1 -.8zM790 219.9q2.7 -3.3 4.6 -.8t4.6 .1q-2.3 3.4 -4.1 1.9t-5 -1.2zM795.8 221.5q4.5 -3.7 7.5 -1.2t7.5 -.2q-3.7 3.6 -6.7 2.4t-8.2 -1zM753.9 228q5.2 -2.8 8.6 -1.2t8.6 -.6q-4.3 2.5 -7.8 2.1t-9.5 -.3zM775.1 227.9q5.3 -3.9 8.8 -1.5t8.8 -.5q-4.4 3.6 -7.9 2.7t-9.7 -.7zM819.2 227.5q3.6 -2.5 6 -1.1t6 -.5q-3 2.3 -5.4 1.9t-6.5 -.2zM779.2 237q3.7 -3.7 6.2 -1.7t6.2 -.8q-3.1 3.3 -5.6 2.8t-6.8 -.3zM801.9 233.7q5.7 -3.1 9.5 -.1t9.5 .8q-4.7 3.5 -8.5 1.3t-10.4 -2zM765 240q5.5 -2.3 9.1 -.5t9.1 .1q-4.6 2.3 -8.2 1.3t-10 -.9zM820.6 239q3.5 -3 5.9 -.7t5.9 .1q-2.9 3 -5.3 1.7t-6.5 -1.1zM758.7 242.6q4.3 -3.2 7.2 -.1t7.2 .9q-3.6 3.6 -6.5 1.3t-7.9 -2.1zM783.7 249.6q4.2 -2.6 7 -1.4t7 -.8q-3.5 2.2 -6.3 2.1t-7.7 .1zM796.5 253.3q4 -2.6 6.6 -1.3t6.6 -.7q-3.3 2.3 -6 2.1t-7.3 -.1zM818.2 252q3.1 -3.5 5.1 -1.9t5.1 -1.2q-2.6 2.9 -4.6 2.9t-5.6 .2zM808.8 260q5.7 -2.4 9.4 -.6t9.4 .1q-4.7 2.5 -8.5 1.4t-10.4 -.9zM816.7 263.9q3.5 -2.1 5.9 -.5t5.9 .1q-2.9 2.1 -5.3 1.2t-6.5 -.8zM754.6 271.6q5.2 -1.7 8.7 .2t8.7 .8q-4.3 2.1 -7.8 .5t-9.5 -1.5zM779.3 271.7q5.5 -3.4 9.2 -1.5t9.2 -.7q-4.6 3 -8.3 2.5t-10.1 -.3zM789.5 272.6q4.1 -3.7 6.9 -1.5t6.9 -.6q-3.4 3.4 -6.2 2.7t-7.6 -.5zM769.7 274.4q4.1 -3.4 6.8 -.1t6.8 .9q-3.4 3.8 -6.2 1.4t-7.5 -2.2zM819.8 276.7q2.8 -2.5 4.7 -1.1t4.7 -.5q-2.4 2.2 -4.2 1.8t-5.2 -.3zM759 284.1q4.7 -2.1 7.8 -.3t7.8 .3q-3.9 2.2 -7 1t-8.5 -1.1zM764.3 287.1q4.3 -2.7 7.2 -.7t7.2 0q-3.6 2.7 -6.5 1.6t-8 -.9zM806.6 287.3q3.1 -3.5 5.2 -1.4t5.2 -.5q-2.6 3.3 -4.7 2.5t-5.7 -.6zM814.8 287.3q5.3 -2.8 8.8 -.5t8.8 .3q-4.4 2.9 -8 1.4t-9.7 -1.3zM766.5 294.8q4.6 -3.7 7.7 -1.3t7.7 -.4q-3.9 3.5 -7 2.5t-8.5 -.7zM796.4 298.1q4.1 -2.8 6.9 .1t6.9 .9q-3.4 3.3 -6.2 1t-7.6 -2zM826.2 304.1q4.9 -3.7 8.1 -1.6t8.1 -.7q-4.1 3.3 -7.3 2.7t-8.9 -.4zM772.7 306.7q4 -2.8 6.6 -.2t6.6 .6q-3.3 3.1 -6 1.2t-7.3 -1.7zM782.4 305.8q3.5 -3.3 5.8 -.7t5.8 .2q-2.9 3.4 -5.2 1.8t-6.3 -1.4zM805.2 306q2.8 -3.7 4.6 -1.2t4.6 -.3q-2.3 3.5 -4.2 2.4t-5.1 -.9zM802.9 310.3q3.3 -2.3 5.5 -.8t5.5 -.2q-2.8 2.2 -5 1.5t-6.1 -.5zM773.7 314.8q5.4 -3.6 9.1 -.8t9.1 .2q-4.5 3.7 -8.2 2t-10 -1.5zM795.9 314.4q5.2 -3.2 8.7 -.7t8.7 .2q-4.4 3.3 -7.9 1.8t-9.6 -1.3zM813.7 312.8q4.4 -3.6 7.4 -.5t7.4 .6q-3.7 3.9 -6.6 1.8t-8.1 -1.8zM799.5 318.1q4 -3.7 6.7 -1.4t6.7 -.4q-3.3 3.5 -6 2.5t-7.4 -.7zM814.2 323.3q5.6 -2.9 9.3 -1.2t9.3 -.4q-4.6 2.7 -8.3 2.1t-10.2 -.5zM836.5 322.9q4 -2.6 6.7 -1.1t6.7 -.4q-3.4 2.4 -6 1.9t-7.4 -.4zM786.1 327.6q5.2 -3.6 8.7 -1.6t8.7 -.7q-4.3 3.2 -7.8 2.7t-9.5 -.3zM799.5 326.8q3.1 -3.6 5.2 -1.4t5.2 -.6q-2.6 3.3 -4.7 2.6t-5.8 -.6zM817.8 326.9q3 -3.2 5 -1t5 -.2q-2.5 3.1 -4.5 2.1t-5.5 -.8zM832.6 330.8q4.9 -2.3 8.2 -.5t8.2 .2q-4.1 2.4 -7.4 1.3t-9 -1zM835.4 335.4q4.5 -4.3 7.5 -1.9t7.5 -.9q-3.8 3.9 -6.8 3.2t-8.3 -.4zM841.2 338.7q3.1 -2.5 5.1 -.4t5.1 .3q-2.6 2.7 -4.6 1.3t-5.6 -1.2zM774.5 341.9q5.7 -2.8 9.5 -1.1t9.5 -.5q-4.7 2.6 -8.5 2t-10.4 -.4zM821.6 348.5q4.9 -2.1 8.1 -.4t8.1 .2q-4 2.2 -7.3 1.2t-8.9 -.9zM774.4 354.1q4.8 -3 8.1 -.7t8.1 .1q-4 3 -7.3 1.7t-8.9 -1.1zM841.4 361.6q5.6 -4.5 9.3 -2t9.3 -.9q-4.7 4 -8.4 3.3t-10.3 -.4zM785 369.1q4.8 -3.8 7.9 -1.6t7.9 -.6q-4 3.5 -7.1 2.7t-8.7 -.5zM794 368.2q5.4 -2.7 9.1 -1.1t9.1 -.4q-4.5 2.5 -8.2 1.9t-10 -.4zM803.3 369.8q4.1 -2.8 6.9 -1.6t6.9 -1q-3.5 2.3 -6.2 2.4t-7.6 .3zM839.7 366.8q3.6 -2.3 6 -.2t6 .4q-3 2.5 -5.4 1.1t-6.6 -1.3zM793.1 372.4q4 -3.3 6.7 -1.9t6.7 -1.2q-3.4 2.8 -6 2.8t-7.4 .2zM818 370.4q3.7 -3.4 6.2 -.4t6.2 .5q-3.1 3.7 -5.6 1.7t-6.8 -1.8zM786.6 375.3q5.3 -2.4 8.8 0t8.8 .7q-4.4 2.7 -7.9 .9t-9.6 -1.6zM788.3 377.6q3.7 -3.6 6.2 -.4t6.2 .6q-3.1 3.9 -5.6 1.7t-6.8 -1.9zM842.2 385.3q4 -2.9 6.7 -1.7t6.7 -1q-3.3 2.3 -6 2.4t-7.3 .3zM843.8 388.5q3.3 -2.2 5.5 -.7t5.5 -.1q-2.7 2.1 -4.9 1.4t-6 -.6zM838.5 390.2q4 -3.5 6.6 -.9t6.6 .1q-3.3 3.5 -5.9 2t-7.3 -1.2zM798.3 394.6q2.8 -3.8 4.6 -.9t4.6 .1q-2.3 3.9 -4.2 2.2t-5.1 -1.4zM816.8 396.6q3.3 -4 5.5 -1.6t5.5 -.7q-2.7 3.7 -4.9 2.9t-6 -.6zM795.4 399.3q5.5 -3.8 9.1 -1.9t9.1 -1.1q-4.6 3.3 -8.2 3t-10.1 0zM840 402.5q5.4 -4 9 -1.2t9 -.2q-4.5 3.9 -8.1 2.5t-9.9 -1.1zM838.1 409.8q2.7 -2.5 4.5 -.5t4.5 .2q-2.3 2.5 -4.1 1.4t-5 -1zM803.1 415.3q4.2 -3.2 7 -1.3t7 -.5q-3.5 2.9 -6.3 2.2t-7.7 -.5zM829.8 419.2q3.5 -3.5 5.9 -1.4t5.9 -.5q-2.9 3.2 -5.3 2.5t-6.5 -.5zM805 423.7q3.7 -2.4 6.2 -1.1t6.2 -.6q-3.1 2.1 -5.6 1.9t-6.8 -.2zM813.1 422.8q5.2 -3.9 8.6 -.8t8.6 .2q-4.3 4 -7.7 2.2t-9.5 -1.6zM825.8 429.9q4.3 -2.8 7.2 -.7t7.2 0q-3.6 2.8 -6.5 1.7t-7.9 -.9zM798.8 434q5.4 -4.2 9.1 -1.7t9.1 -.7q-4.5 3.8 -8.2 3t-10 -.6zM836.4 433.4q4.2 -3.3 7.1 -.9t7.1 0q-3.5 3.3 -6.4 2t-7.8 -1.1zM851.8 435.1q3 -3 5 -1.3t5 -.6q-2.5 2.7 -4.5 2.2t-5.5 -.3zM805.2 438.2q2.8 -2.6 4.7 -.6t4.7 .1q-2.4 2.7 -4.2 1.5t-5.2 -1zM817.5 443.8q4.7 -4.2 7.9 -1.6t7.9 -.5q-4 3.9 -7.1 2.9t-8.7 -.8zM827.3 441.6q4.9 -3.7 8.2 -1.1t8.2 -.1q-4.1 3.6 -7.4 2.3t-9.1 -1.1zM802 450.4q4.1 -3.2 6.8 -1.5t6.8 -.8q-3.4 2.8 -6.1 2.5t-7.4 -.2zM854.1 449.9q4.9 -3.7 8.1 -.4t8.1 .7q-4.1 4 -7.3 1.8t-8.9 -2zM818 457.5q3.7 -2.8 6.2 -.8t6.2 -.1q-3.1 2.7 -5.6 1.7t-6.8 -.8zM820.8 460q5.5 -3.3 9.2 -1.6t9.2 -.8q-4.6 2.9 -8.3 2.6t-10.1 -.2zM847.2 462.7q3.4 -2.2 5.6 -.5t5.6 .1q-2.8 2.2 -5 1.3t-6.2 -.8zM837.7 465.7q4.7 -3.3 7.8 -.3t7.8 .6q-3.9 3.7 -7.1 1.6t-8.6 -1.8zM848.8 466.3q3.7 -3.7 6.1 -.9t6.1 .1q-3.1 3.8 -5.5 2.1t-6.7 -1.4zM855.4 465.6q5.6 -2.9 9.3 0t9.3 .9q-4.7 3.3 -8.4 1.1t-10.3 -2zM828.6 471.9q3.6 -2.8 6 -1.7t6 -1.1q-3 2.3 -5.4 2.4t-6.6 .3zM841 469.4q5.7 -4.2 9.4 -1.8t9.4 -.8q-4.7 3.8 -8.5 3.1t-10.4 -.4zM862.1 478.4q3.6 -2.1 6 -.3t6 .3q-3 2.2 -5.4 1.1t-6.6 -1zM805.8 482.4q2.7 -3.5 4.6 -1t4.6 0q-2.3 3.5 -4.1 2.1t-5 -1.1zM807.6 493.3q3.2 -2.7 5.3 -1.4t5.3 -.7q-2.7 2.3 -4.8 2.1t-5.8 0zM827.6 500.8q4.1 -3 6.8 -.1t6.8 .8q-3.4 3.4 -6.1 1.2t-7.5 -2zM839.3 500.1q5.3 -2.1 8.9 .1t8.9 .8q-4.4 2.5 -8 .7t-9.8 -1.7zM870.4 499.1q4.2 -2.7 6.9 -.2t6.9 .6q-3.5 3 -6.2 1.2t-7.6 -1.6z" opacity=".55"/></g>
<defs>
<g id="m0"><path d="M-1.2 -5.3L0.6 -9.4L2.2 -7.8L3.1 -12.4L4.2 -10.9L4.1 -15.7L6.3 -13.7L6.7 -17.8L8.0 -16.8L9.0 -19.9L11.3 -17.8L12.8 -13.9L14.1 -12.5L17.5 -8.7L18.8 -5.3Z" fill="url(#mg)"/><path d="M9.0 -19.9L11.2 -16.2L11.7 -12.6L9.7 -9.0L11.5 -5.3L18.8 -5.3L17.5 -8.7L14.1 -12.5L12.8 -13.9L11.3 -17.8Z" fill="url(#ms)"/><path d="M10.1 -16.7l1.7 3.4M10.8 -16.3l0.8 1.7M11.1 -16.2l1.4 2.7M12.2 -13.1l1.5 2.9M10.4 -13.5l1.8 3.7M17.7 -6.2l1.7 3.5" stroke="#3a3a38" stroke-width=".5" fill="none" opacity=".7"/><path d="M6.2 -12.0l-2.3 3.2M3.2 -8.9l-1.5 2.1M7.0 -12.0l-2.5 3.5M3.5 -10.6l-2.5 3.6M6.9 -11.3l-1.4 2.1M6.1 -11.3l-2.4 3.4M7.8 -14.5l-1.4 1.9M2.5 -8.7l-1.5 2.2M7.7 -12.1l-1.1 1.6M4.9 -11.0l-1.5 2.2" stroke="#8a8a8c" stroke-width=".5" fill="none" opacity=".8"/><path d="M-1.2 -5.3L0.6 -9.4L2.2 -7.8L3.1 -12.4L4.2 -10.9L4.1 -15.7L6.3 -13.7L6.7 -17.8L8.0 -16.8L9.0 -19.9L11.3 -17.8L12.8 -13.9L14.1 -12.5L17.5 -8.7L18.8 -5.3" fill="none" stroke="#3c3c3a" stroke-width=".6" stroke-linejoin="round"/><path d="M9.0 -19.9L11.2 -16.2L11.7 -12.6L9.7 -9.0" fill="none" stroke="#2a2a28" stroke-width=".55"/><path d="M-18.0 0.0L-14.9 -9.9L-12.8 -5.3L-11.2 -15.2L-9.4 -11.2L-5.4 -21.8L-4.7 -17.9L-2.8 -24.2L2.8 -17.8L7.4 -9.4L14.0 0.0Z" fill="url(#mg)"/><path d="M-2.8 -24.2L-2.6 -18.2L3.3 -12.1L5.0 -6.1L5.0 0.0L14.0 0.0L7.4 -9.4L2.8 -17.8Z" fill="url(#ms)"/><path d="M0.4 -15.9l1.9 3.9M3.8 -11.2l1.3 2.6M5.4 -7.4l1.9 3.7M3.7 -12.3l0.8 1.6M3.1 -14.8l1.7 3.4M4.3 -12.4l1.9 3.7M1.9 -10.8l0.8 1.5M-1.2 -21.2l1.1 2.3M-0.6 -18.9l1.5 2.9M-0.8 -20.6l1.8 3.7" stroke="#3a3a38" stroke-width=".5" fill="none" opacity=".7"/><path d="M-10.4 -1.8l-1.1 1.6M-9.4 -10.0l-1.8 2.5M-3.9 -13.7l-2.8 4.0M-7.0 -6.6l-1.3 1.9M-10.4 -5.8l-1.1 1.6M-6.6 -16.3l-1.8 2.5M-1.0 -13.7l-2.4 3.5M-10.1 -5.4l-1.5 2.2M-3.0 -4.1l-1.9 2.7M-9.2 -7.0l-2.1 3.0M-4.5 -5.9l-1.2 1.7M-8.9 -11.2l-1.6 2.3M-2.5 -5.8l-1.6 2.3M-3.0 -14.0l-2.2 3.1M-8.5 -9.9l-1.4 2.0M-5.6 -6.8l-1.1 1.6" stroke="#8a8a8c" stroke-width=".5" fill="none" opacity=".8"/><path d="M-18.0 0.0L-14.9 -9.9L-12.8 -5.3L-11.2 -15.2L-9.4 -11.2L-5.4 -21.8L-4.7 -17.9L-2.8 -24.2L2.8 -17.8L7.4 -9.4L14.0 0.0" fill="none" stroke="#3c3c3a" stroke-width=".6" stroke-linejoin="round"/><path d="M-2.8 -24.2L-2.6 -18.2L3.3 -12.1L5.0 -6.1" fill="none" stroke="#2a2a28" stroke-width=".55"/></g>
<g id="m1"><path d="M-23.0 -5.0L-21.1 -9.7L-18.9 -8.4L-17.2 -14.3L-17.0 -12.1L-15.8 -18.5L-14.4 -15.8L-12.6 -20.1L-9.5 -16.2L-7.3 -13.1L-3.3 -8.7L-1.0 -5.0Z" fill="url(#mg)"/><path d="M-12.6 -20.1L-11.5 -16.3L-9.6 -12.5L-9.9 -8.8L-8.5 -5.0L-1.0 -5.0L-3.3 -8.7L-7.3 -13.1L-9.5 -16.2Z" fill="url(#ms)"/><path d="M-5.1 -9.9l1.6 3.2M-7.9 -9.6l1.8 3.7M-9.6 -14.3l1.3 2.6M-10.6 -14.5l1.1 2.2M-9.1 -11.4l0.8 1.6M-7.5 -8.0l2.2 4.3M-8.2 -10.7l2.1 4.1" stroke="#3a3a38" stroke-width=".5" fill="none" opacity=".7"/><path d="M-17.3 -6.5l-1.3 1.8M-12.0 -9.1l-2.1 3.0M-16.0 -7.6l-2.1 3.0M-14.6 -12.9l-1.7 2.4M-15.0 -11.7l-2.5 3.5M-15.3 -13.8l-1.5 2.1M-15.3 -5.8l-1.1 1.6M-11.6 -7.1l-2.5 3.6M-12.8 -11.9l-1.6 2.3M-12.2 -14.2l-2.5 3.6M-12.0 -13.4l-1.1 1.6" stroke="#8a8a8c" stroke-width=".5" fill="none" opacity=".8"/><path d="M-23.0 -5.0L-21.1 -9.7L-18.9 -8.4L-17.2 -14.3L-17.0 -12.1L-15.8 -18.5L-14.4 -15.8L-12.6 -20.1L-9.5 -16.2L-7.3 -13.1L-3.3 -8.7L-1.0 -5.0" fill="none" stroke="#3c3c3a" stroke-width=".6" stroke-linejoin="round"/><path d="M-12.6 -20.1L-11.5 -16.3L-9.6 -12.5L-9.9 -8.8" fill="none" stroke="#2a2a28" stroke-width=".55"/><path d="M2.0 -6.3L5.4 -11.6L5.5 -10.2L8.6 -17.6L9.1 -15.0L10.8 -20.1L14.7 -16.7L18.6 -11.3L22.0 -6.3Z" fill="url(#mg)"/><path d="M10.8 -20.1L12.2 -16.6L13.9 -13.2L15.7 -9.7L16.0 -6.3L22.0 -6.3L18.6 -11.3L14.7 -16.7Z" fill="url(#ms)"/><path d="M16.1 -11.1l1.7 3.4M14.2 -14.0l1.5 3.0M15.9 -10.1l2.1 4.3M16.2 -12.8l1.8 3.6M19.4 -7.2l1.4 2.8M14.8 -13.8l1.9 3.8" stroke="#3a3a38" stroke-width=".5" fill="none" opacity=".7"/><path d="M5.7 -8.2l-1.2 1.7M8.4 -14.9l-1.1 1.6M9.4 -15.8l-1.2 1.8M10.4 -9.6l-2.7 3.9M11.7 -7.0l-2.7 3.9M9.3 -15.7l-2.7 3.8M7.7 -11.5l-2.4 3.4M10.0 -12.0l-1.6 2.3M7.9 -13.7l-2.1 3.0M14.2 -7.1l-2.4 3.4" stroke="#8a8a8c" stroke-width=".5" fill="none" opacity=".8"/><path d="M2.0 -6.3L5.4 -11.6L5.5 -10.2L8.6 -17.6L9.1 -15.0L10.8 -20.1L14.7 -16.7L18.6 -11.3L22.0 -6.3" fill="none" stroke="#3c3c3a" stroke-width=".6" stroke-linejoin="round"/><path d="M10.8 -20.1L12.2 -16.6L13.9 -13.2L15.7 -9.7" fill="none" stroke="#2a2a28" stroke-width=".55"/><path d="M-15.2 0.0L-11.6 -7.4L-9.2 -6.1L-6.7 -13.9L-5.3 -11.9L-2.0 -20.9L-0.5 -17.9L2.9 -25.1L6.0 -18.4L10.2 -13.0L12.2 -7.7L16.8 0.0Z" fill="url(#mg)"/><path d="M2.9 -25.1L4.1 -18.8L6.3 -12.5L6.2 -6.3L6.2 0.0L16.8 0.0L12.2 -7.7L10.2 -13.0L6.0 -18.4Z" fill="url(#ms)"/><path d="M5.4 -16.5l2.2 4.5M4.8 -20.0l1.5 3.0M5.1 -14.7l1.7 3.4M5.3 -16.5l1.3 2.6M14.1 -2.8l2.2 4.3M5.7 -9.5l1.7 3.4M14.1 -3.2l1.7 3.4M10.6 -9.1l1.0 1.9M8.1 -15.2l1.7 3.4M3.9 -21.6l1.6 3.1" stroke="#3a3a38" stroke-width=".5" fill="none" opacity=".7"/><path d="M-3.1 -3.5l-2.6 3.7M-0.2 -14.8l-1.2 1.7M1.7 -12.3l-1.4 2.1M1.5 -16.4l-1.4 2.0M-3.8 -13.0l-1.4 2.0M1.5 -14.5l-1.6 2.3M-0.1 -15.3l-1.8 2.6M-3.4 -11.0l-2.6 3.8M0.4 -14.3l-2.4 3.5M-0.0 -9.4l-2.3 3.3M-5.9 -3.3l-1.7 2.5M-2.8 -15.3l-2.2 3.2M0.7 -12.6l-1.6 2.2M0.3 -9.5l-2.0 2.8M-5.9 -7.9l-1.8 2.6M-8.7 -3.6l-1.8 2.6" stroke="#8a8a8c" stroke-width=".5" fill="none" opacity=".8"/><path d="M-15.2 0.0L-11.6 -7.4L-9.2 -6.1L-6.7 -13.9L-5.3 -11.9L-2.0 -20.9L-0.5 -17.9L2.9 -25.1L6.0 -18.4L10.2 -13.0L12.2 -7.7L16.8 0.0" fill="none" stroke="#3c3c3a" stroke-width=".6" stroke-linejoin="round"/><path d="M2.9 -25.1L4.1 -18.8L6.3 -12.5L6.2 -6.3" fill="none" stroke="#2a2a28" stroke-width=".55"/></g>
<g id="m2"><path d="M1.0 -5.4L3.5 -12.6L5.0 -10.1L7.5 -17.9L7.9 -15.4L10.4 -20.7L13.7 -17.3L15.5 -15.4L17.4 -11.2L21.0 -8.9L23.0 -5.4Z" fill="url(#mg)"/><path d="M10.4 -20.7L11.4 -16.9L14.2 -13.1L17.4 -9.2L17.8 -5.4L23.0 -5.4L21.0 -8.9L17.4 -11.2L15.5 -15.4L13.7 -17.3Z" fill="url(#ms)"/><path d="M15.8 -11.0l2.0 4.0M19.3 -8.0l1.4 2.8M11.6 -18.9l1.3 2.6M14.0 -13.8l2.1 4.3M16.1 -12.2l2.0 4.0M19.4 -7.3l1.6 3.1M18.3 -7.9l2.1 4.2" stroke="#3a3a38" stroke-width=".5" fill="none" opacity=".7"/><path d="M11.4 -15.9l-2.0 2.8M14.4 -9.7l-1.4 2.0M12.1 -11.9l-2.4 3.4M12.2 -10.7l-2.2 3.2M11.3 -7.2l-1.7 2.4M7.2 -13.2l-1.3 1.8M12.2 -15.7l-1.3 1.9M6.2 -9.9l-2.7 3.9M6.9 -10.7l-2.5 3.6M15.1 -7.3l-1.4 2.1M11.1 -12.0l-1.5 2.2" stroke="#8a8a8c" stroke-width=".5" fill="none" opacity=".8"/><path d="M1.0 -5.4L3.5 -12.6L5.0 -10.1L7.5 -17.9L7.9 -15.4L10.4 -20.7L13.7 -17.3L15.5 -15.4L17.4 -11.2L21.0 -8.9L23.0 -5.4" fill="none" stroke="#3c3c3a" stroke-width=".6" stroke-linejoin="round"/><path d="M10.4 -20.7L11.4 -16.9L14.2 -13.1L17.4 -9.2" fill="none" stroke="#2a2a28" stroke-width=".55"/><path d="M-22.8 -3.0L-21.1 -6.7L-20.2 -5.9L-19.0 -10.8L-18.2 -8.0L-16.2 -12.9L-16.2 -11.3L-15.1 -15.9L-14.5 -14.5L-12.9 -17.7L-10.7 -15.2L-9.7 -12.1L-6.8 -10.1L-4.3 -5.6L-2.8 -3.0Z" fill="url(#mg)"/><path d="M-12.9 -17.7L-11.9 -14.0L-10.3 -10.3L-9.1 -6.6L-9.5 -3.0L-2.8 -3.0L-4.3 -5.6L-6.8 -10.1L-9.7 -12.1L-10.7 -15.2Z" fill="url(#ms)"/><path d="M-11.2 -15.1l1.7 3.3M-5.6 -6.7l2.2 4.5M-10.8 -11.9l0.8 1.6M-11.2 -13.4l1.3 2.5M-6.6 -8.1l1.2 2.4M-6.5 -7.4l2.0 4.1" stroke="#3a3a38" stroke-width=".5" fill="none" opacity=".7"/><path d="M-12.8 -7.1l-2.2 3.2M-12.9 -8.4l-1.3 1.9M-12.5 -11.3l-2.0 2.8M-15.7 -9.4l-1.4 2.0M-19.4 -4.2l-2.2 3.2M-13.5 -8.0l-2.8 4.0M-13.5 -12.2l-1.4 2.0M-16.6 -10.8l-1.9 2.7M-16.4 -4.2l-1.2 1.7M-12.1 -6.8l-1.3 1.9" stroke="#8a8a8c" stroke-width=".5" fill="none" opacity=".8"/><path d="M-22.8 -3.0L-21.1 -6.7L-20.2 -5.9L-19.0 -10.8L-18.2 -8.0L-16.2 -12.9L-16.2 -11.3L-15.1 -15.9L-14.5 -14.5L-12.9 -17.7L-10.7 -15.2L-9.7 -12.1L-6.8 -10.1L-4.3 -5.6L-2.8 -3.0" fill="none" stroke="#3c3c3a" stroke-width=".6" stroke-linejoin="round"/><path d="M-12.9 -17.7L-11.9 -14.0L-10.3 -10.3L-9.1 -6.6" fill="none" stroke="#2a2a28" stroke-width=".55"/><path d="M-9.8 -7.4L-7.6 -11.6L-7.3 -9.7L-6.3 -13.8L-5.0 -12.7L-4.3 -17.2L-3.1 -14.8L-2.4 -18.8L-0.7 -17.7L0.1 -20.9L1.8 -19.2L3.9 -15.2L5.4 -12.4L7.1 -10.5L8.2 -7.4Z" fill="url(#mg)"/><path d="M0.1 -20.9L1.0 -17.5L2.1 -14.2L1.8 -10.8L3.3 -7.4L8.2 -7.4L7.1 -10.5L5.4 -12.4L3.9 -15.2L1.8 -19.2Z" fill="url(#ms)"/><path d="M4.4 -13.1l1.6 3.1M2.2 -12.8l1.7 3.3M2.9 -14.3l2.2 4.4M4.5 -12.2l1.6 3.2M4.5 -11.7l0.8 1.6" stroke="#3a3a38" stroke-width=".5" fill="none" opacity=".7"/><path d="M-1.1 -15.8l-1.8 2.5M-5.1 -11.8l-2.2 3.1M0.3 -10.4l-2.5 3.5M-0.1 -12.2l-1.2 1.7M-1.7 -15.4l-2.5 3.6M-8.0 -8.0l-1.2 1.8M-0.1 -16.8l-1.7 2.4M-2.3 -14.1l-2.7 3.8M-2.7 -11.6l-2.4 3.5" stroke="#8a8a8c" stroke-width=".5" fill="none" opacity=".8"/><path d="M-9.8 -7.4L-7.6 -11.6L-7.3 -9.7L-6.3 -13.8L-5.0 -12.7L-4.3 -17.2L-3.1 -14.8L-2.4 -18.8L-0.7 -17.7L0.1 -20.9L1.8 -19.2L3.9 -15.2L5.4 -12.4L7.1 -10.5L8.2 -7.4" fill="none" stroke="#3c3c3a" stroke-width=".6" stroke-linejoin="round"/><path d="M0.1 -20.9L1.0 -17.5L2.1 -14.2L1.8 -10.8" fill="none" stroke="#2a2a28" stroke-width=".55"/><path d="M-12.0 0.0L-9.9 -7.5L-8.6 -3.0L-6.6 -11.7L-6.8 -8.0L-4.9 -15.6L-4.4 -11.6L-3.1 -17.4L-2.4 -16.7L-0.8 -20.9L4.6 -14.7L10.5 -6.7L16.0 0.0Z" fill="url(#mg)"/><path d="M-0.8 -20.9L3.5 -15.7L5.5 -10.5L6.4 -5.2L9.4 0.0L16.0 0.0L10.5 -6.7L4.6 -14.7Z" fill="url(#ms)"/><path d="M13.4 -2.6l1.7 3.3M3.2 -15.8l2.0 4.0M6.0 -10.7l2.2 4.4M2.4 -14.5l1.0 2.1M6.5 -9.9l1.9 3.8M14.4 -1.0l2.0 3.9M4.3 -11.3l1.2 2.5M4.6 -11.9l1.2 2.3" stroke="#3a3a38" stroke-width=".5" fill="none" opacity=".7"/><path d="M-2.0 -13.6l-1.1 1.6M-3.4 -9.9l-1.4 2.0M-4.0 -8.8l-2.4 3.5M0.7 -0.9l-1.1 1.5M-4.4 -2.6l-1.1 1.6M0.9 -3.5l-2.3 3.3M-1.7 -14.3l-2.5 3.6M-4.1 -9.5l-1.8 2.6M1.2 -13.0l-2.7 3.8M2.8 -6.8l-1.4 2.0M1.6 -5.9l-1.6 2.3M0.5 -13.2l-1.6 2.3M4.6 -4.1l-1.1 1.6M-0.9 -13.8l-1.5 2.1" stroke="#8a8a8c" stroke-width=".5" fill="none" opacity=".8"/><path d="M-12.0 0.0L-9.9 -7.5L-8.6 -3.0L-6.6 -11.7L-6.8 -8.0L-4.9 -15.6L-4.4 -11.6L-3.1 -17.4L-2.4 -16.7L-0.8 -20.9L4.6 -14.7L10.5 -6.7L16.0 0.0" fill="none" stroke="#3c3c3a" stroke-width=".6" stroke-linejoin="round"/><path d="M-0.8 -20.9L3.5 -15.7L5.5 -10.5L6.4 -5.2" fill="none" stroke="#2a2a28" stroke-width=".55"/></g>
<g id="m3"><path d="M-21.2 -6.9L-19.8 -11.2L-18.5 -10.0L-16.8 -13.7L-16.0 -12.8L-14.7 -16.9L-14.2 -15.7L-13.5 -19.6L-11.4 -17.5L-8.6 -15.1L-6.6 -12.5L-4.3 -10.4L-1.2 -6.9Z" fill="url(#mg)"/><path d="M-13.5 -19.6L-12.5 -16.4L-9.7 -13.3L-11.0 -10.1L-8.8 -6.9L-1.2 -6.9L-4.3 -10.4L-6.6 -12.5L-8.6 -15.1L-11.4 -17.5Z" fill="url(#ms)"/><path d="M-7.9 -9.4l1.6 3.3M-8.4 -9.7l2.0 4.0M-9.2 -9.2l1.5 3.0M-5.8 -9.4l2.1 4.1M-4.1 -7.5l1.7 3.5M-10.8 -16.5l2.1 4.2" stroke="#3a3a38" stroke-width=".5" fill="none" opacity=".7"/><path d="M-14.4 -8.1l-1.6 2.3M-14.4 -14.3l-1.4 1.9M-14.5 -7.8l-2.6 3.7M-13.7 -13.7l-2.7 3.9M-15.6 -12.3l-1.6 2.3M-15.5 -7.8l-1.2 1.7M-17.3 -10.5l-2.2 3.2M-17.0 -11.4l-1.9 2.8M-13.2 -15.5l-2.0 2.8M-19.2 -8.0l-2.5 3.6" stroke="#8a8a8c" stroke-width=".5" fill="none" opacity=".8"/><path d="M-21.2 -6.9L-19.8 -11.2L-18.5 -10.0L-16.8 -13.7L-16.0 -12.8L-14.7 -16.9L-14.2 -15.7L-13.5 -19.6L-11.4 -17.5L-8.6 -15.1L-6.6 -12.5L-4.3 -10.4L-1.2 -6.9" fill="none" stroke="#3c3c3a" stroke-width=".6" stroke-linejoin="round"/><path d="M-13.5 -19.6L-12.5 -16.4L-9.7 -13.3L-11.0 -10.1" fill="none" stroke="#2a2a28" stroke-width=".55"/><path d="M1.0 -3.5L3.8 -8.0L4.5 -6.7L5.9 -12.4L6.6 -10.6L8.0 -17.5L9.8 -15.3L11.3 -19.6L13.1 -17.2L15.6 -14.5L17.7 -10.0L20.8 -6.5L23.0 -3.5Z" fill="url(#mg)"/><path d="M11.3 -19.6L12.0 -15.6L13.7 -11.5L15.3 -7.5L18.5 -3.5L23.0 -3.5L20.8 -6.5L17.7 -10.0L15.6 -14.5L13.1 -17.2Z" fill="url(#ms)"/><path d="M17.5 -7.1l1.9 3.9M18.2 -7.2l1.5 3.0M17.3 -9.6l1.7 3.3M16.1 -11.9l1.0 1.9M18.7 -6.6l1.8 3.5M18.2 -6.7l1.1 2.1M17.7 -8.3l1.7 3.3" stroke="#3a3a38" stroke-width=".5" fill="none" opacity=".7"/><path d="M8.2 -13.4l-1.8 2.5M12.7 -14.5l-1.5 2.2M7.7 -12.3l-2.1 3.0M12.5 -5.7l-2.4 3.4M5.7 -8.2l-1.7 2.4M5.2 -7.9l-1.5 2.2M14.8 -6.1l-2.8 3.9M7.1 -9.5l-1.9 2.7M11.1 -4.0l-1.1 1.6M14.2 -4.6l-1.7 2.4M14.8 -6.5l-1.4 2.1" stroke="#8a8a8c" stroke-width=".5" fill="none" opacity=".8"/><path d="M1.0 -3.5L3.8 -8.0L4.5 -6.7L5.9 -12.4L6.6 -10.6L8.0 -17.5L9.8 -15.3L11.3 -19.6L13.1 -17.2L15.6 -14.5L17.7 -10.0L20.8 -6.5L23.0 -3.5" fill="none" stroke="#3c3c3a" stroke-width=".6" stroke-linejoin="round"/><path d="M11.3 -19.6L12.0 -15.6L13.7 -11.5L15.3 -7.5" fill="none" stroke="#2a2a28" stroke-width=".55"/><path d="M-19.6 0.0L-17.0 -6.5L-15.5 -3.8L-14.4 -8.8L-12.5 -7.4L-11.6 -14.2L-9.5 -11.6L-8.0 -16.9L-6.9 -14.8L-5.6 -19.6L-3.6 -16.9L-0.4 -12.0L1.6 -9.6L2.9 -4.5L5.2 0.0Z" fill="url(#mg)"/><path d="M-5.6 -19.6L-6.1 -14.7L-2.7 -9.8L-5.3 -4.9L-3.6 0.0L5.2 0.0L2.9 -4.5L1.6 -9.6L-0.4 -12.0L-3.6 -16.9Z" fill="url(#ms)"/><path d="M-1.8 -10.2l1.0 2.1M-0.8 -8.4l1.1 2.2M-2.1 -12.4l1.4 2.9M-3.1 -9.2l2.1 4.1M0.0 -2.9l1.5 3.1M-3.4 -13.7l1.2 2.5M-4.5 -17.5l1.7 3.3" stroke="#3a3a38" stroke-width=".5" fill="none" opacity=".7"/><path d="M-8.4 -3.1l-1.9 2.6M-15.5 -0.6l-1.9 2.7M-8.4 -5.7l-2.8 4.0M-7.6 -12.2l-1.3 1.8M-7.6 -7.1l-1.8 2.5M-10.4 -7.3l-1.7 2.4M-8.7 -4.4l-2.4 3.4M-6.2 -9.2l-1.1 1.5M-10.3 -1.4l-1.5 2.2M-7.3 -13.4l-2.3 3.3M-8.7 -8.2l-2.7 3.9M-14.4 -3.2l-2.2 3.2" stroke="#8a8a8c" stroke-width=".5" fill="none" opacity=".8"/><path d="M-19.6 0.0L-17.0 -6.5L-15.5 -3.8L-14.4 -8.8L-12.5 -7.4L-11.6 -14.2L-9.5 -11.6L-8.0 -16.9L-6.9 -14.8L-5.6 -19.6L-3.6 -16.9L-0.4 -12.0L1.6 -9.6L2.9 -4.5L5.2 0.0" fill="none" stroke="#3c3c3a" stroke-width=".6" stroke-linejoin="round"/><path d="M-5.6 -19.6L-6.1 -14.7L-2.7 -9.8L-5.3 -4.9" fill="none" stroke="#2a2a28" stroke-width=".55"/><path d="M2.0 1.2L4.8 -3.2L5.2 -2.1L7.7 -6.8L8.0 -5.2L10.4 -9.2L12.4 -7.1L13.7 -5.4L15.3 -3.8L16.7 -1.3L18.0 1.2Z" fill="url(#mg)"/><path d="M10.4 -9.2L11.1 -6.6L13.0 -4.0L13.5 -1.4L14.5 1.2L18.0 1.2L16.7 -1.3L15.3 -3.8L13.7 -5.4L12.4 -7.1Z" fill="url(#ms)"/><path d="M14.8 -0.7l0.9 1.8M12.7 -4.2l1.5 2.9M11.2 -7.9l1.5 2.9M15.6 -0.4l1.3 2.7M16.5 -0.5l1.8 3.7" stroke="#3a3a38" stroke-width=".5" fill="none" opacity=".7"/><path d="M10.5 -2.9l-2.7 3.8M10.1 -1.9l-2.3 3.3M10.2 -4.3l-2.1 3.0M12.0 -2.5l-2.4 3.4M7.9 -1.3l-2.1 3.1M10.3 0.3l-1.2 1.7M7.8 -4.3l-2.6 3.8M9.5 -4.5l-2.5 3.5" stroke="#8a8a8c" stroke-width=".5" fill="none" opacity=".8"/><path d="M2.0 1.2L4.8 -3.2L5.2 -2.1L7.7 -6.8L8.0 -5.2L10.4 -9.2L12.4 -7.1L13.7 -5.4L15.3 -3.8L16.7 -1.3L18.0 1.2" fill="none" stroke="#3c3c3a" stroke-width=".6" stroke-linejoin="round"/><path d="M10.4 -9.2L11.1 -6.6L13.0 -4.0L13.5 -1.4" fill="none" stroke="#2a2a28" stroke-width=".55"/></g>
<g id="m4"><path d="M-1.2 -4.6L1.2 -9.0L1.9 -6.6L3.0 -10.1L4.0 -9.7L4.4 -13.5L5.4 -12.0L6.4 -15.7L7.5 -14.7L8.3 -17.3L11.4 -14.7L13.6 -11.2L17.0 -8.4L18.8 -4.6Z" fill="url(#mg)"/><path d="M8.3 -17.3L9.0 -14.1L10.2 -11.0L11.3 -7.8L14.3 -4.6L18.8 -4.6L17.0 -8.4L13.6 -11.2L11.4 -14.7Z" fill="url(#ms)"/><path d="M12.8 -10.0l2.1 4.1M12.6 -10.5l1.8 3.5M10.4 -14.6l1.6 3.1M14.0 -9.1l1.5 3.0M10.2 -14.6l1.3 2.6M10.4 -13.6l1.2 2.4" stroke="#3a3a38" stroke-width=".5" fill="none" opacity=".7"/><path d="M6.7 -12.6l-1.1 1.5M7.9 -13.1l-1.2 1.7M6.8 -11.4l-1.2 1.7M8.5 -10.4l-2.1 3.0M10.2 -11.4l-2.5 3.6M8.8 -11.6l-2.0 2.8M7.2 -8.0l-1.2 1.7M5.9 -8.3l-2.0 2.9M4.6 -5.5l-1.1 1.6M9.6 -6.9l-2.6 3.7" stroke="#8a8a8c" stroke-width=".5" fill="none" opacity=".8"/><path d="M-1.2 -4.6L1.2 -9.0L1.9 -6.6L3.0 -10.1L4.0 -9.7L4.4 -13.5L5.4 -12.0L6.4 -15.7L7.5 -14.7L8.3 -17.3L11.4 -14.7L13.6 -11.2L17.0 -8.4L18.8 -4.6" fill="none" stroke="#3c3c3a" stroke-width=".6" stroke-linejoin="round"/><path d="M8.3 -17.3L9.0 -14.1L10.2 -11.0L11.3 -7.8" fill="none" stroke="#2a2a28" stroke-width=".55"/><path d="M-18.0 0.0L-12.4 -8.8L-10.6 -6.2L-8.3 -16.2L-5.3 -13.6L-1.5 -21.1L3.0 -15.5L5.7 -10.8L10.3 -6.4L14.0 0.0Z" fill="url(#mg)"/><path d="M-1.5 -21.1L-2.4 -15.8L2.7 -10.5L1.1 -5.3L3.6 0.0L14.0 0.0L10.3 -6.4L5.7 -10.8L3.0 -15.5Z" fill="url(#ms)"/><path d="M2.0 -14.3l1.5 3.0M3.9 -3.1l1.3 2.5M9.3 -3.7l0.8 1.7M5.8 -10.8l2.2 4.4M3.2 -13.1l1.2 2.5M0.7 -17.8l0.9 1.9M8.0 -0.8l2.0 4.1M5.7 -10.2l1.9 3.7M-0.1 -15.8l1.0 2.0M2.6 -7.9l0.9 1.7" stroke="#3a3a38" stroke-width=".5" fill="none" opacity=".7"/><path d="M-9.0 -9.4l-1.6 2.3M-9.0 -5.9l-2.4 3.5M-5.3 -11.1l-1.8 2.5M-13.3 -2.8l-2.5 3.5M-0.6 -13.4l-2.0 2.9M-5.9 -4.2l-2.2 3.2M-10.5 -5.1l-1.4 2.0M-11.1 -1.9l-1.5 2.1M-2.2 -14.0l-2.4 3.5M-1.3 -14.2l-1.3 1.8M-5.0 -7.8l-1.5 2.1M-4.5 -10.2l-2.4 3.5M-6.4 -11.2l-2.8 3.9M-7.5 -11.0l-2.7 3.8M-11.3 -1.7l-2.0 2.8M-9.3 -2.4l-1.6 2.4" stroke="#8a8a8c" stroke-width=".5" fill="none" opacity=".8"/><path d="M-18.0 0.0L-12.4 -8.8L-10.6 -6.2L-8.3 -16.2L-5.3 -13.6L-1.5 -21.1L3.0 -15.5L5.7 -10.8L10.3 -6.4L14.0 0.0" fill="none" stroke="#3c3c3a" stroke-width=".6" stroke-linejoin="round"/><path d="M-1.5 -21.1L-2.4 -15.8L2.7 -10.5L1.1 -5.3" fill="none" stroke="#2a2a28" stroke-width=".55"/></g>
<g id="m5"><path d="M-23.0 -4.2L-22.0 -7.6L-20.6 -6.0L-18.9 -9.8L-18.4 -8.6L-17.7 -13.1L-16.4 -11.5L-15.1 -15.0L-15.3 -13.4L-14.1 -16.7L-10.9 -14.3L-8.6 -12.0L-6.5 -9.1L-3.6 -6.6L-1.0 -4.2Z" fill="url(#mg)"/><path d="M-14.1 -16.7L-12.7 -13.5L-9.2 -10.4L-8.9 -7.3L-6.5 -4.2L-1.0 -4.2L-3.6 -6.6L-6.5 -9.1L-8.6 -12.0L-10.9 -14.3Z" fill="url(#ms)"/><path d="M-3.6 -6.3l1.7 3.4M-11.7 -13.2l2.0 4.0M-10.9 -12.1l1.6 3.2M-8.7 -10.9l1.0 2.0M-7.2 -9.9l1.0 2.0M-9.8 -11.2l0.9 1.9M-11.9 -13.8l1.6 3.1" stroke="#3a3a38" stroke-width=".5" fill="none" opacity=".7"/><path d="M-13.6 -11.8l-1.7 2.4M-12.1 -10.4l-2.3 3.4M-16.4 -9.2l-1.9 2.8M-12.0 -7.5l-2.2 3.2M-15.6 -12.9l-2.8 4.0M-14.4 -8.3l-1.3 1.8M-11.0 -6.3l-1.6 2.3M-17.1 -10.6l-1.6 2.3M-14.9 -8.6l-1.1 1.5M-15.6 -12.1l-2.5 3.6M-10.2 -4.8l-1.9 2.7" stroke="#8a8a8c" stroke-width=".5" fill="none" opacity=".8"/><path d="M-23.0 -4.2L-22.0 -7.6L-20.6 -6.0L-18.9 -9.8L-18.4 -8.6L-17.7 -13.1L-16.4 -11.5L-15.1 -15.0L-15.3 -13.4L-14.1 -16.7L-10.9 -14.3L-8.6 -12.0L-6.5 -9.1L-3.6 -6.6L-1.0 -4.2" fill="none" stroke="#3c3c3a" stroke-width=".6" stroke-linejoin="round"/><path d="M-14.1 -16.7L-12.7 -13.5L-9.2 -10.4L-8.9 -7.3" fill="none" stroke="#2a2a28" stroke-width=".55"/><path d="M2.0 -5.2L4.2 -8.8L4.9 -6.9L5.7 -10.5L6.8 -9.2L7.0 -13.0L8.6 -11.5L8.5 -15.9L9.9 -14.3L11.0 -16.7L14.0 -13.7L18.4 -9.6L22.0 -5.2Z" fill="url(#mg)"/><path d="M11.0 -16.7L12.6 -13.8L11.8 -10.9L13.4 -8.1L14.8 -5.2L22.0 -5.2L18.4 -9.6L14.0 -13.7Z" fill="url(#ms)"/><path d="M17.4 -9.1l1.0 2.0M17.2 -5.9l2.0 3.9M19.5 -6.0l1.0 2.0M13.9 -9.2l1.1 2.2M15.2 -7.4l2.2 4.4M12.5 -14.6l1.7 3.4" stroke="#3a3a38" stroke-width=".5" fill="none" opacity=".7"/><path d="M12.1 -9.0l-2.3 3.2M12.3 -7.9l-1.1 1.5M11.5 -6.2l-1.9 2.8M9.6 -9.4l-2.5 3.5M4.4 -5.6l-1.5 2.2M7.6 -10.6l-1.3 1.9M11.6 -7.8l-2.2 3.1M9.4 -10.9l-1.1 1.6M8.8 -12.4l-1.2 1.7M11.4 -9.9l-1.4 1.9" stroke="#8a8a8c" stroke-width=".5" fill="none" opacity=".8"/><path d="M2.0 -5.2L4.2 -8.8L4.9 -6.9L5.7 -10.5L6.8 -9.2L7.0 -13.0L8.6 -11.5L8.5 -15.9L9.9 -14.3L11.0 -16.7L14.0 -13.7L18.4 -9.6L22.0 -5.2" fill="none" stroke="#3c3c3a" stroke-width=".6" stroke-linejoin="round"/><path d="M11.0 -16.7L12.6 -13.8L11.8 -10.9L13.4 -8.1" fill="none" stroke="#2a2a28" stroke-width=".55"/><path d="M-15.2 0.0L-8.8 -9.5L-8.9 -6.2L-4.0 -15.3L-3.3 -12.8L0.8 -20.8L5.7 -16.2L8.0 -10.9L12.9 -5.5L16.8 0.0Z" fill="url(#mg)"/><path d="M0.8 -20.8L5.2 -15.6L3.5 -10.4L10.3 -5.2L10.4 0.0L16.8 0.0L12.9 -5.5L8.0 -10.9L5.7 -16.2Z" fill="url(#ms)"/><path d="M10.6 -4.9l1.3 2.6M6.6 -12.7l2.0 4.0M10.3 -7.6l1.3 2.7M10.6 -2.5l1.4 2.8M5.5 -13.5l1.1 2.2M6.7 -12.0l1.5 2.9M5.6 -11.7l1.7 3.5M4.1 -16.4l1.9 3.8M7.3 -7.7l1.5 3.1M10.5 -6.7l2.0 3.9" stroke="#3a3a38" stroke-width=".5" fill="none" opacity=".7"/><path d="M5.2 -1.3l-2.8 3.9M-2.8 -13.6l-1.6 2.3M-4.9 -10.6l-1.6 2.3M-9.3 -2.2l-1.6 2.3M-3.8 -11.1l-1.1 1.6M-1.3 -9.2l-1.8 2.5M0.3 -7.9l-1.1 1.5M-3.2 -9.5l-1.3 1.9M-3.9 -6.3l-1.1 1.6M-4.9 -1.8l-1.6 2.3M-5.3 -7.8l-1.5 2.2M-2.9 -11.5l-1.6 2.2M-0.5 -11.9l-2.3 3.3M-3.1 -11.1l-1.3 1.9M-1.3 -4.7l-2.6 3.6M-3.1 -8.1l-2.4 3.4" stroke="#8a8a8c" stroke-width=".5" fill="none" opacity=".8"/><path d="M-15.2 0.0L-8.8 -9.5L-8.9 -6.2L-4.0 -15.3L-3.3 -12.8L0.8 -20.8L5.7 -16.2L8.0 -10.9L12.9 -5.5L16.8 0.0" fill="none" stroke="#3c3c3a" stroke-width=".6" stroke-linejoin="round"/><path d="M0.8 -20.8L5.2 -15.6L3.5 -10.4L10.3 -5.2" fill="none" stroke="#2a2a28" stroke-width=".55"/></g>
<g id="m6"><path d="M1.0 -5.7L3.0 -9.9L3.6 -8.6L4.9 -13.2L5.9 -11.8L6.3 -17.3L7.5 -15.4L8.2 -20.0L9.8 -18.6L10.6 -21.9L12.9 -17.5L16.0 -14.8L19.6 -10.0L23.0 -5.7Z" fill="url(#mg)"/><path d="M10.6 -21.9L10.6 -17.9L13.9 -13.8L15.4 -9.8L15.0 -5.7L23.0 -5.7L19.6 -10.0L16.0 -14.8L12.9 -17.5Z" fill="url(#ms)"/><path d="M11.9 -18.9l1.3 2.6M18.6 -10.8l1.7 3.4M13.1 -15.6l0.8 1.7M12.3 -19.3l2.0 4.1M13.3 -15.1l2.0 4.1M12.9 -17.1l2.1 4.2M11.5 -19.9l1.0 2.1" stroke="#3a3a38" stroke-width=".5" fill="none" opacity=".7"/><path d="M12.0 -12.2l-2.7 3.9M11.6 -8.9l-1.7 2.4M10.6 -9.1l-2.6 3.8M11.3 -13.1l-1.4 2.0M12.3 -10.7l-2.4 3.4M5.6 -8.9l-1.7 2.4M11.1 -11.0l-1.5 2.1M10.7 -11.2l-2.3 3.2M7.2 -14.3l-1.7 2.4M9.8 -15.0l-2.0 2.8M11.3 -16.6l-2.7 3.8" stroke="#8a8a8c" stroke-width=".5" fill="none" opacity=".8"/><path d="M1.0 -5.7L3.0 -9.9L3.6 -8.6L4.9 -13.2L5.9 -11.8L6.3 -17.3L7.5 -15.4L8.2 -20.0L9.8 -18.6L10.6 -21.9L12.9 -17.5L16.0 -14.8L19.6 -10.0L23.0 -5.7" fill="none" stroke="#3c3c3a" stroke-width=".6" stroke-linejoin="round"/><path d="M10.6 -21.9L10.6 -17.9L13.9 -13.8L15.4 -9.8" fill="none" stroke="#2a2a28" stroke-width=".55"/><path d="M-22.8 -3.1L-21.4 -9.3L-19.5 -6.1L-18.8 -12.9L-17.5 -10.9L-16.1 -16.3L-15.3 -14.4L-14.4 -18.8L-11.5 -15.9L-8.4 -10.9L-6.4 -7.3L-2.8 -3.1Z" fill="url(#mg)"/><path d="M-14.4 -18.8L-14.1 -14.9L-12.2 -11.0L-11.7 -7.0L-8.9 -3.1L-2.8 -3.1L-6.4 -7.3L-8.4 -10.9L-11.5 -15.9Z" fill="url(#ms)"/><path d="M-9.6 -9.6l2.1 4.1M-7.9 -5.9l0.8 1.6M-10.1 -9.2l1.7 3.3M-12.5 -15.9l2.0 4.1M-11.8 -14.7l0.9 1.8M-12.4 -15.3l1.1 2.2" stroke="#3a3a38" stroke-width=".5" fill="none" opacity=".7"/><path d="M-16.0 -10.0l-2.4 3.4M-12.1 -6.0l-1.5 2.1M-13.3 -11.4l-1.8 2.5M-14.9 -12.9l-1.5 2.1M-16.2 -7.4l-1.3 1.9M-12.1 -6.2l-1.3 1.9M-15.1 -11.9l-1.3 1.9M-16.4 -4.0l-1.2 1.7M-16.4 -12.0l-1.5 2.1M-12.4 -7.7l-1.7 2.5" stroke="#8a8a8c" stroke-width=".5" fill="none" opacity=".8"/><path d="M-22.8 -3.1L-21.4 -9.3L-19.5 -6.1L-18.8 -12.9L-17.5 -10.9L-16.1 -16.3L-15.3 -14.4L-14.4 -18.8L-11.5 -15.9L-8.4 -10.9L-6.4 -7.3L-2.8 -3.1" fill="none" stroke="#3c3c3a" stroke-width=".6" stroke-linejoin="round"/><path d="M-14.4 -18.8L-14.1 -14.9L-12.2 -11.0L-11.7 -7.0" fill="none" stroke="#2a2a28" stroke-width=".55"/><path d="M-9.8 -7.8L-7.6 -12.6L-6.5 -10.8L-5.5 -16.9L-4.8 -14.9L-3.6 -19.6L-2.1 -18.4L-1.0 -22.2L2.2 -18.0L4.8 -14.0L8.2 -7.8Z" fill="url(#mg)"/><path d="M-1.0 -22.2L0.1 -18.6L0.4 -15.0L0.8 -11.4L1.8 -7.8L8.2 -7.8L4.8 -14.0L2.2 -18.0Z" fill="url(#ms)"/><path d="M3.4 -8.7l1.5 3.1M1.9 -16.6l0.9 1.8M3.5 -13.8l1.8 3.7M1.9 -17.1l1.2 2.5M1.6 -12.2l1.1 2.2" stroke="#3a3a38" stroke-width=".5" fill="none" opacity=".7"/><path d="M-1.8 -9.0l-2.4 3.5M-1.0 -15.7l-2.1 3.0M-6.7 -10.5l-1.5 2.2M-1.2 -8.5l-2.0 2.9M-4.0 -13.2l-2.8 4.0M-4.7 -14.2l-2.4 3.4M-2.5 -16.3l-1.2 1.7M-3.2 -15.9l-2.6 3.7M-3.0 -13.3l-1.8 2.5" stroke="#8a8a8c" stroke-width=".5" fill="none" opacity=".8"/><path d="M-9.8 -7.8L-7.6 -12.6L-6.5 -10.8L-5.5 -16.9L-4.8 -14.9L-3.6 -19.6L-2.1 -18.4L-1.0 -22.2L2.2 -18.0L4.8 -14.0L8.2 -7.8" fill="none" stroke="#3c3c3a" stroke-width=".6" stroke-linejoin="round"/><path d="M-1.0 -22.2L0.1 -18.6L0.4 -15.0L0.8 -11.4" fill="none" stroke="#2a2a28" stroke-width=".55"/><path d="M-12.0 0.0L-8.3 -7.4L-7.9 -3.5L-5.4 -11.5L-4.8 -7.8L-3.3 -14.3L-1.0 -12.1L1.2 -20.9L2.5 -16.8L4.0 -22.2L8.0 -16.4L9.2 -12.5L12.9 -6.2L16.0 0.0Z" fill="url(#mg)"/><path d="M4.0 -22.2L6.7 -16.6L6.5 -11.1L8.7 -5.5L7.7 0.0L16.0 0.0L12.9 -6.2L9.2 -12.5L8.0 -16.4Z" fill="url(#ms)"/><path d="M4.8 -19.1l2.2 4.5M5.3 -18.0l1.0 2.0M9.1 -7.1l2.1 4.1M14.1 -1.3l1.2 2.4M11.6 -7.6l1.4 2.8M9.5 -11.5l1.6 3.2M4.9 -19.7l0.9 1.9M5.4 -19.2l1.9 3.8" stroke="#3a3a38" stroke-width=".5" fill="none" opacity=".7"/><path d="M4.4 -9.5l-1.4 2.0M-0.4 -14.8l-1.9 2.7M2.3 -11.7l-2.7 3.9M3.4 -8.4l-1.3 1.8M-4.4 -4.8l-2.5 3.6M-1.6 -7.4l-1.7 2.5M2.8 -12.1l-1.9 2.7M0.2 -13.4l-1.7 2.4M-1.6 -11.4l-2.0 2.9M-6.9 -4.9l-2.3 3.2M1.3 -12.6l-2.5 3.5M3.6 -11.2l-1.2 1.7M-3.1 -11.0l-1.3 1.9M4.4 -5.2l-2.4 3.4" stroke="#8a8a8c" stroke-width=".5" fill="none" opacity=".8"/><path d="M-12.0 0.0L-8.3 -7.4L-7.9 -3.5L-5.4 -11.5L-4.8 -7.8L-3.3 -14.3L-1.0 -12.1L1.2 -20.9L2.5 -16.8L4.0 -22.2L8.0 -16.4L9.2 -12.5L12.9 -6.2L16.0 0.0" fill="none" stroke="#3c3c3a" stroke-width=".6" stroke-linejoin="round"/><path d="M4.0 -22.2L6.7 -16.6L6.5 -11.1L8.7 -5.5" fill="none" stroke="#2a2a28" stroke-width=".55"/></g>
<g id="m7"><path d="M-21.2 -6.7L-18.4 -9.7L-18.5 -8.7L-17.0 -13.5L-16.8 -11.4L-15.7 -14.7L-14.7 -13.4L-12.6 -17.0L-11.9 -16.0L-11.2 -19.0L-8.9 -16.8L-5.7 -13.7L-3.8 -10.6L-1.2 -6.7Z" fill="url(#mg)"/><path d="M-11.2 -19.0L-9.3 -15.9L-10.3 -12.9L-6.5 -9.8L-7.1 -6.7L-1.2 -6.7L-3.8 -10.6L-5.7 -13.7L-8.9 -16.8Z" fill="url(#ms)"/><path d="M-5.5 -8.7l1.3 2.6M-8.4 -11.7l1.0 2.1M-10.1 -16.5l1.1 2.3M-8.9 -16.0l0.8 1.6M-9.6 -15.0l1.6 3.3M-4.8 -8.3l1.3 2.7" stroke="#3a3a38" stroke-width=".5" fill="none" opacity=".7"/><path d="M-12.7 -8.9l-2.3 3.3M-15.6 -9.4l-1.2 1.7M-14.3 -12.8l-2.3 3.4M-18.0 -8.4l-2.1 2.9M-13.5 -10.9l-1.5 2.1M-10.8 -7.1l-2.4 3.4M-9.6 -8.5l-2.6 3.7M-12.1 -8.9l-1.1 1.6M-13.7 -12.7l-2.4 3.4M-11.3 -15.1l-1.8 2.6" stroke="#8a8a8c" stroke-width=".5" fill="none" opacity=".8"/><path d="M-21.2 -6.7L-18.4 -9.7L-18.5 -8.7L-17.0 -13.5L-16.8 -11.4L-15.7 -14.7L-14.7 -13.4L-12.6 -17.0L-11.9 -16.0L-11.2 -19.0L-8.9 -16.8L-5.7 -13.7L-3.8 -10.6L-1.2 -6.7" fill="none" stroke="#3c3c3a" stroke-width=".6" stroke-linejoin="round"/><path d="M-11.2 -19.0L-9.3 -15.9L-10.3 -12.9L-6.5 -9.8" fill="none" stroke="#2a2a28" stroke-width=".55"/><path d="M1.0 -3.4L3.2 -8.2L3.8 -7.3L5.1 -13.6L6.7 -10.6L7.1 -16.4L8.4 -14.4L9.8 -19.0L13.8 -15.6L17.1 -12.1L18.9 -7.1L23.0 -3.4Z" fill="url(#mg)"/><path d="M9.8 -19.0L10.6 -15.1L13.4 -11.2L16.0 -7.3L15.8 -3.4L23.0 -3.4L18.9 -7.1L17.1 -12.1L13.8 -15.6Z" fill="url(#ms)"/><path d="M14.1 -10.5l0.8 1.7M13.0 -12.6l1.6 3.1M11.5 -15.7l1.2 2.3M11.2 -17.1l1.3 2.6M17.7 -7.8l1.8 3.7M14.0 -10.4l1.7 3.3M13.0 -12.9l2.0 4.0" stroke="#3a3a38" stroke-width=".5" fill="none" opacity=".7"/><path d="M12.2 -5.0l-2.6 3.8M11.6 -7.9l-2.1 3.1M5.3 -4.9l-1.4 2.0M8.8 -13.3l-2.8 4.0M7.1 -8.4l-2.2 3.1M9.7 -11.0l-2.3 3.3M9.5 -6.8l-1.8 2.5M7.2 -12.4l-1.2 1.8M11.3 -10.6l-2.6 3.7M10.4 -12.3l-1.7 2.4M11.6 -10.4l-2.1 3.0" stroke="#8a8a8c" stroke-width=".5" fill="none" opacity=".8"/><path d="M1.0 -3.4L3.2 -8.2L3.8 -7.3L5.1 -13.6L6.7 -10.6L7.1 -16.4L8.4 -14.4L9.8 -19.0L13.8 -15.6L17.1 -12.1L18.9 -7.1L23.0 -3.4" fill="none" stroke="#3c3c3a" stroke-width=".6" stroke-linejoin="round"/><path d="M9.8 -19.0L10.6 -15.1L13.4 -11.2L16.0 -7.3" fill="none" stroke="#2a2a28" stroke-width=".55"/><path d="M-19.6 0.0L-17.0 -6.1L-15.9 -4.4L-13.1 -10.2L-12.4 -9.3L-10.5 -15.0L-9.2 -13.7L-7.4 -19.0L-4.8 -15.8L-1.0 -10.6L2.9 -5.1L5.2 0.0Z" fill="url(#mg)"/><path d="M-7.4 -19.0L-5.3 -14.3L-3.1 -9.5L-3.1 -4.8L-0.4 0.0L5.2 0.0L2.9 -5.1L-1.0 -10.6L-4.8 -15.8Z" fill="url(#ms)"/><path d="M-4.4 -13.6l1.4 2.8M1.9 -1.9l1.8 3.7M-5.1 -15.4l1.9 3.8M-4.0 -12.9l1.8 3.6M-3.9 -11.5l0.9 1.7M-5.5 -15.0l1.2 2.3M-4.2 -13.8l1.1 2.1" stroke="#3a3a38" stroke-width=".5" fill="none" opacity=".7"/><path d="M-12.2 -8.4l-1.8 2.5M-9.9 -12.5l-2.6 3.6M-7.9 -5.8l-2.0 2.8M-12.9 -5.7l-1.1 1.6M-12.0 -6.2l-1.1 1.5M-8.1 -2.4l-2.4 3.4M-11.0 -9.6l-2.4 3.4M-9.9 -10.9l-2.7 3.9M-6.1 -4.8l-2.5 3.6M-10.6 -11.9l-1.5 2.1M-4.2 -1.7l-1.2 1.8M-13.6 -6.6l-1.9 2.7" stroke="#8a8a8c" stroke-width=".5" fill="none" opacity=".8"/><path d="M-19.6 0.0L-17.0 -6.1L-15.9 -4.4L-13.1 -10.2L-12.4 -9.3L-10.5 -15.0L-9.2 -13.7L-7.4 -19.0L-4.8 -15.8L-1.0 -10.6L2.9 -5.1L5.2 0.0" fill="none" stroke="#3c3c3a" stroke-width=".6" stroke-linejoin="round"/><path d="M-7.4 -19.0L-5.3 -14.3L-3.1 -9.5L-3.1 -4.8" fill="none" stroke="#2a2a28" stroke-width=".55"/><path d="M2.0 1.1L3.7 -2.1L4.7 -1.3L6.9 -5.2L6.9 -3.8L7.9 -7.3L9.6 -6.2L10.7 -8.9L12.1 -7.2L13.3 -5.2L15.4 -3.5L16.2 -1.8L18.0 1.1Z" fill="url(#mg)"/><path d="M10.7 -8.9L11.8 -6.4L12.0 -3.9L11.8 -1.4L12.1 1.1L18.0 1.1L16.2 -1.8L15.4 -3.5L13.3 -5.2L12.1 -7.2Z" fill="url(#ms)"/><path d="M12.8 -5.5l1.0 2.0M12.3 -5.8l1.2 2.4M15.6 -0.5l2.1 4.3M15.4 0.3l1.9 3.8M12.2 -3.6l1.0 1.9" stroke="#3a3a38" stroke-width=".5" fill="none" opacity=".7"/><path d="M10.2 -5.5l-2.4 3.5M10.5 -0.2l-2.2 3.1M8.4 -5.8l-1.3 1.8M9.1 -3.7l-1.3 1.8M10.3 -5.0l-1.4 2.0M5.1 0.8l-1.8 2.6M7.1 -2.1l-2.1 2.9M8.1 -2.8l-1.9 2.7" stroke="#8a8a8c" stroke-width=".5" fill="none" opacity=".8"/><path d="M2.0 1.1L3.7 -2.1L4.7 -1.3L6.9 -5.2L6.9 -3.8L7.9 -7.3L9.6 -6.2L10.7 -8.9L12.1 -7.2L13.3 -5.2L15.4 -3.5L16.2 -1.8L18.0 1.1" fill="none" stroke="#3c3c3a" stroke-width=".6" stroke-linejoin="round"/><path d="M10.7 -8.9L11.8 -6.4L12.0 -3.9L11.8 -1.4" fill="none" stroke="#2a2a28" stroke-width=".55"/></g>
<g id="m8"><path d="M-1.2 -4.9L2.4 -10.9L3.5 -9.2L6.6 -14.7L7.3 -13.2L10.3 -18.4L12.1 -15.7L13.2 -12.8L15.1 -10.0L16.6 -8.8L18.8 -4.9Z" fill="url(#mg)"/><path d="M10.3 -18.4L10.7 -15.0L11.4 -11.7L11.9 -8.3L12.2 -4.9L18.8 -4.9L16.6 -8.8L15.1 -10.0L13.2 -12.8L12.1 -15.7Z" fill="url(#ms)"/><path d="M14.3 -7.9l1.9 3.7M17.7 -6.2l2.2 4.4M12.9 -14.2l1.3 2.5M14.0 -11.7l1.4 2.8M13.0 -13.2l2.1 4.2M13.6 -12.3l1.1 2.2" stroke="#3a3a38" stroke-width=".5" fill="none" opacity=".7"/><path d="M10.4 -8.9l-2.5 3.6M9.1 -12.9l-2.3 3.3M10.0 -8.7l-1.5 2.1M10.3 -13.8l-2.5 3.6M4.5 -9.6l-1.2 1.7M5.2 -5.7l-1.1 1.6M3.3 -7.4l-1.4 2.0M5.4 -6.7l-2.5 3.5M10.0 -13.3l-1.4 2.0M1.2 -6.3l-1.8 2.6" stroke="#8a8a8c" stroke-width=".5" fill="none" opacity=".8"/><path d="M-1.2 -4.9L2.4 -10.9L3.5 -9.2L6.6 -14.7L7.3 -13.2L10.3 -18.4L12.1 -15.7L13.2 -12.8L15.1 -10.0L16.6 -8.8L18.8 -4.9" fill="none" stroke="#3c3c3a" stroke-width=".6" stroke-linejoin="round"/><path d="M10.3 -18.4L10.7 -15.0L11.4 -11.7L11.9 -8.3" fill="none" stroke="#2a2a28" stroke-width=".55"/><path d="M-18.0 0.0L-14.1 -6.3L-12.5 -5.2L-9.0 -12.0L-7.9 -11.1L-5.3 -18.3L-4.0 -15.7L-0.5 -22.4L3.8 -14.9L9.7 -9.6L14.0 0.0Z" fill="url(#mg)"/><path d="M-0.5 -22.4L-0.9 -16.8L2.1 -11.2L1.4 -5.6L5.1 0.0L14.0 0.0L9.7 -9.6L3.8 -14.9Z" fill="url(#ms)"/><path d="M2.2 -14.0l1.6 3.2M4.2 -6.3l1.9 3.7M3.1 -12.2l1.6 3.3M6.5 -6.2l1.5 3.1M2.3 -14.4l2.0 3.9M2.0 -16.1l1.0 1.9M1.8 -18.7l1.5 3.0M6.8 -4.3l2.2 4.4M7.8 -4.9l1.7 3.3M8.7 -7.6l1.2 2.3" stroke="#3a3a38" stroke-width=".5" fill="none" opacity=".7"/><path d="M-5.8 -9.3l-2.4 3.5M-10.0 -2.1l-1.8 2.5M-4.6 -4.5l-1.8 2.6M-7.8 -8.3l-2.8 4.0M-6.9 -13.0l-1.1 1.6M-0.2 -4.4l-1.8 2.6M-3.2 -13.2l-2.1 3.0M0.6 -9.6l-2.5 3.5M-7.2 -9.7l-2.8 3.9M-7.6 -6.2l-2.6 3.8M1.6 -4.4l-1.8 2.5M-0.5 -13.2l-2.4 3.4M-4.3 -14.9l-1.2 1.8M-5.6 -7.5l-2.8 4.0M-7.9 -9.8l-2.7 3.9M-1.5 -2.5l-2.6 3.8" stroke="#8a8a8c" stroke-width=".5" fill="none" opacity=".8"/><path d="M-18.0 0.0L-14.1 -6.3L-12.5 -5.2L-9.0 -12.0L-7.9 -11.1L-5.3 -18.3L-4.0 -15.7L-0.5 -22.4L3.8 -14.9L9.7 -9.6L14.0 0.0" fill="none" stroke="#3c3c3a" stroke-width=".6" stroke-linejoin="round"/><path d="M-0.5 -22.4L-0.9 -16.8L2.1 -11.2L1.4 -5.6" fill="none" stroke="#2a2a28" stroke-width=".55"/></g>
<g id="m9"><path d="M-23.0 -5.5L-21.1 -10.2L-19.8 -9.0L-18.1 -16.5L-17.5 -13.6L-17.2 -19.1L-15.9 -17.9L-14.3 -22.2L-11.6 -18.2L-7.2 -14.9L-5.0 -10.2L-1.0 -5.5Z" fill="url(#mg)"/><path d="M-14.3 -22.2L-12.9 -18.0L-10.5 -13.8L-10.9 -9.7L-7.8 -5.5L-1.0 -5.5L-5.0 -10.2L-7.2 -14.9L-11.6 -18.2Z" fill="url(#ms)"/><path d="M-4.5 -8.3l1.8 3.6M-12.1 -18.0l1.2 2.5M-2.8 -6.3l1.6 3.2M-11.0 -17.2l2.1 4.3M-2.7 -6.5l1.1 2.2M-3.7 -6.3l2.0 3.9M-11.4 -18.3l2.1 4.2" stroke="#3a3a38" stroke-width=".5" fill="none" opacity=".7"/><path d="M-13.5 -9.6l-2.0 2.9M-12.9 -13.4l-2.3 3.3M-14.3 -9.4l-2.5 3.5M-13.0 -12.2l-2.3 3.3M-16.2 -7.0l-2.7 3.9M-14.7 -14.7l-1.9 2.8M-13.5 -6.6l-1.6 2.3M-14.8 -15.3l-1.7 2.4M-15.6 -13.5l-2.1 3.1M-18.8 -9.6l-1.2 1.8M-15.6 -9.0l-2.5 3.5" stroke="#8a8a8c" stroke-width=".5" fill="none" opacity=".8"/><path d="M-23.0 -5.5L-21.1 -10.2L-19.8 -9.0L-18.1 -16.5L-17.5 -13.6L-17.2 -19.1L-15.9 -17.9L-14.3 -22.2L-11.6 -18.2L-7.2 -14.9L-5.0 -10.2L-1.0 -5.5" fill="none" stroke="#3c3c3a" stroke-width=".6" stroke-linejoin="round"/><path d="M-14.3 -22.2L-12.9 -18.0L-10.5 -13.8L-10.9 -9.7" fill="none" stroke="#2a2a28" stroke-width=".55"/><path d="M2.0 -6.9L3.6 -11.4L5.1 -9.9L5.8 -14.6L6.0 -12.4L6.8 -18.1L8.0 -15.3L9.2 -21.1L9.7 -19.1L10.3 -22.2L12.7 -20.5L14.8 -17.4L17.2 -13.9L19.2 -10.9L22.0 -6.9Z" fill="url(#mg)"/><path d="M10.3 -22.2L11.4 -18.3L15.1 -14.5L14.7 -10.7L17.8 -6.9L22.0 -6.9L19.2 -10.9L17.2 -13.9L14.8 -17.4L12.7 -20.5Z" fill="url(#ms)"/><path d="M14.5 -15.2l1.0 2.0M16.5 -11.5l1.4 2.7M14.0 -16.2l1.1 2.1M13.0 -18.3l1.7 3.4M18.5 -10.3l1.2 2.4M19.4 -8.0l0.8 1.5" stroke="#3a3a38" stroke-width=".5" fill="none" opacity=".7"/><path d="M12.3 -11.3l-1.1 1.6M8.8 -10.6l-1.4 2.0M11.9 -12.5l-2.5 3.5M9.4 -8.1l-1.3 1.8M9.0 -10.3l-2.1 3.1M9.8 -11.9l-2.2 3.1M14.3 -10.4l-2.0 2.9M10.7 -13.7l-2.8 3.9M6.8 -14.1l-1.2 1.7M14.9 -9.2l-1.8 2.6" stroke="#8a8a8c" stroke-width=".5" fill="none" opacity=".8"/><path d="M2.0 -6.9L3.6 -11.4L5.1 -9.9L5.8 -14.6L6.0 -12.4L6.8 -18.1L8.0 -15.3L9.2 -21.1L9.7 -19.1L10.3 -22.2L12.7 -20.5L14.8 -17.4L17.2 -13.9L19.2 -10.9L22.0 -6.9" fill="none" stroke="#3c3c3a" stroke-width=".6" stroke-linejoin="round"/><path d="M10.3 -22.2L11.4 -18.3L15.1 -14.5L14.7 -10.7" fill="none" stroke="#2a2a28" stroke-width=".55"/><path d="M-15.2 0.0L-12.0 -10.3L-10.5 -6.0L-9.2 -15.8L-7.3 -13.5L-5.6 -22.4L-3.4 -19.3L-2.2 -27.7L2.4 -22.2L6.0 -16.9L9.3 -12.9L12.8 -7.1L16.8 0.0Z" fill="url(#mg)"/><path d="M-2.2 -27.7L-0.9 -20.8L4.9 -13.8L5.0 -6.9L8.2 0.0L16.8 0.0L12.8 -7.1L9.3 -12.9L6.0 -16.9L2.4 -22.2Z" fill="url(#ms)"/><path d="M7.2 -13.6l1.7 3.4M2.3 -16.8l0.8 1.7M1.3 -22.2l1.6 3.3M4.9 -10.1l1.4 2.7M3.2 -18.8l1.3 2.7M3.5 -19.2l0.8 1.6M0.8 -22.6l2.1 4.2M2.9 -17.1l1.0 2.0M5.8 -13.8l1.4 2.8M-0.7 -24.7l1.7 3.4" stroke="#3a3a38" stroke-width=".5" fill="none" opacity=".7"/><path d="M-1.0 -13.8l-2.7 3.9M2.4 -11.3l-1.1 1.6M-6.7 -14.4l-2.5 3.5M-5.0 -12.7l-1.4 2.0M-10.6 -5.7l-2.3 3.3M0.2 -17.8l-2.1 3.0M-8.3 -10.6l-1.1 1.5M-0.4 -11.7l-2.2 3.2M-6.1 -9.2l-2.4 3.4M0.7 -7.8l-2.6 3.7M-8.6 -2.7l-2.3 3.2M-1.0 -4.6l-1.9 2.7M-8.3 -9.4l-2.2 3.2M2.5 -4.5l-1.7 2.4M-4.7 -2.7l-2.5 3.6M-4.5 -4.2l-2.2 3.1" stroke="#8a8a8c" stroke-width=".5" fill="none" opacity=".8"/><path d="M-15.2 0.0L-12.0 -10.3L-10.5 -6.0L-9.2 -15.8L-7.3 -13.5L-5.6 -22.4L-3.4 -19.3L-2.2 -27.7L2.4 -22.2L6.0 -16.9L9.3 -12.9L12.8 -7.1L16.8 0.0" fill="none" stroke="#3c3c3a" stroke-width=".6" stroke-linejoin="round"/><path d="M-2.2 -27.7L-0.9 -20.8L4.9 -13.8L5.0 -6.9" fill="none" stroke="#2a2a28" stroke-width=".55"/></g>
</defs>
<g>
<use href="#m6" transform="translate(950.1 152.7) scale(1.19)"/>
<use href="#m7" transform="translate(844.3 155.0) scale(1.06)"/>
<use href="#m6" transform="translate(887.4 164.3) scale(0.83)"/>
<use href="#m0" transform="translate(820.2 165.2) scale(0.67)"/>
<use href="#m1" transform="translate(850.9 167.0) scale(0.77)"/>
<use href="#m5" transform="translate(930.0 168.0) scale(1.10 0.50)"/>
<use href="#m2" transform="translate(884.0 176.0) scale(1.20 0.55)"/>
<use href="#m0" transform="translate(962.7 179.9) scale(1.13)"/>
<use href="#m1" transform="translate(840.0 181.0) scale(1.30 0.50)"/>
<use href="#m6" transform="translate(881.9 181.4) scale(0.91)"/>
<use href="#m2" transform="translate(921.8 184.3) scale(0.87)"/>
<use href="#m8" transform="translate(905.0 190.0) scale(1.00 0.50)"/>
<use href="#m9" transform="translate(833.0 198.5) scale(0.85)"/>
<use href="#m0" transform="translate(862.0 200.5) scale(1.00)"/>
<use href="#m9" transform="translate(984.2 200.6) scale(1.50)"/>
<use href="#m6" transform="translate(945.3 201.0) scale(1.38)"/>
<use href="#m5" transform="translate(892.6 202.4) scale(1.59)"/>
<use href="#m4" transform="translate(866.7 211.8) scale(1.18)"/>
<use href="#m6" transform="translate(975.8 212.2) scale(1.30)"/>
<use href="#m9" transform="translate(838.1 212.6) scale(0.93)"/>
<use href="#m1" transform="translate(932.9 213.0) scale(1.25)"/>
<use href="#m4" transform="translate(838.0 214.0) scale(1.25 0.60)"/>
<use href="#m8" transform="translate(900.8 217.0) scale(1.14)"/>
<use href="#m6" transform="translate(868.9 229.1) scale(1.30)"/>
<use href="#m7" transform="translate(917.8 229.3) scale(1.54)"/>
<use href="#m9" transform="translate(839.9 232.1) scale(0.87)"/>
<use href="#m6" transform="translate(966.4 232.1) scale(1.26)"/>
<use href="#m2" transform="translate(845.8 241.7) scale(0.76)"/>
<use href="#m9" transform="translate(869.1 242.6) scale(1.27)"/>
<use href="#m3" transform="translate(957.0 243.4) scale(1.29)"/>
<use href="#m0" transform="translate(907.2 245.3) scale(1.54)"/>
<use href="#m1" transform="translate(915.5 257.7) scale(1.39)"/>
<use href="#m4" transform="translate(871.0 258.1) scale(1.29)"/>
<use href="#m5" transform="translate(967.2 259.1) scale(1.31)"/>
<use href="#m7" transform="translate(853.0 261.0) scale(1.40 0.40)"/>
<use href="#m2" transform="translate(839.5 261.0) scale(0.86)"/>
<use href="#m4" transform="translate(847.7 272.9) scale(0.94)"/>
<use href="#m5" transform="translate(920.8 273.4) scale(1.32)"/>
<use href="#m2" transform="translate(874.1 273.8) scale(1.26)"/>
<use href="#m2" transform="translate(964.1 274.6) scale(1.59)"/>
<use href="#m0" transform="translate(848.0 284.0) scale(0.95 0.50)"/>
<use href="#m5" transform="translate(949.3 289.9) scale(1.48)"/>
<use href="#m3" transform="translate(847.6 291.0) scale(0.68)"/>
<use href="#m0" transform="translate(904.3 293.3) scale(1.22)"/>
<use href="#m2" transform="translate(867.6 294.0) scale(1.06)"/>
<use href="#m1" transform="translate(936.5 306.4) scale(1.49)"/>
<use href="#m1" transform="translate(892.0 306.6) scale(1.25)"/>
<use href="#m5" transform="translate(982.9 311.5) scale(1.18)"/>
<use href="#m5" transform="translate(862.4 311.8) scale(0.92)"/>
<use href="#m4" transform="translate(891.1 324.7) scale(1.14)"/>
<use href="#m7" transform="translate(968.3 328.4) scale(1.38)"/>
<use href="#m6" transform="translate(865.9 328.7) scale(0.67)"/>
<use href="#m4" transform="translate(931.1 329.5) scale(1.26)"/>
<use href="#m9" transform="translate(934.9 339.1) scale(1.17)"/>
<use href="#m1" transform="translate(901.1 340.3) scale(1.18)"/>
<use href="#m7" transform="translate(973.1 342.8) scale(1.15)"/>
<use href="#m6" transform="translate(869.3 344.2) scale(0.99)"/>
<use href="#m3" transform="translate(866.0 349.0) scale(1.10 0.45)"/>
<use href="#m6" transform="translate(899.2 355.2) scale(1.53)"/>
<use href="#m4" transform="translate(868.5 358.5) scale(0.88)"/>
<use href="#m4" transform="translate(944.0 359.2) scale(1.60)"/>
<use href="#m4" transform="translate(936.3 370.9) scale(1.20)"/>
<use href="#m3" transform="translate(871.2 371.2) scale(0.71)"/>
<use href="#m2" transform="translate(897.6 375.4) scale(1.28)"/>
<use href="#m9" transform="translate(978.0 375.8) scale(1.36)"/>
<use href="#m6" transform="translate(967.4 389.0) scale(1.49)"/>
<use href="#m1" transform="translate(923.2 391.1) scale(1.25)"/>
<use href="#m8" transform="translate(893.8 392.0) scale(0.97)"/>
<use href="#m5" transform="translate(868.8 392.3) scale(0.72)"/>
<use href="#m2" transform="translate(893.7 404.0) scale(1.33)"/>
<use href="#m8" transform="translate(871.3 404.8) scale(0.66)"/>
<use href="#m5" transform="translate(979.4 405.4) scale(1.46)"/>
<use href="#m0" transform="translate(935.6 407.7) scale(1.23)"/>
<use href="#m6" transform="translate(868.0 412.0) scale(1.00 0.45)"/>
<use href="#m3" transform="translate(934.0 417.3) scale(1.41)"/>
<use href="#m1" transform="translate(976.1 419.6) scale(1.38)"/>
<use href="#m3" transform="translate(873.9 420.6) scale(0.89)"/>
<use href="#m7" transform="translate(901.9 421.3) scale(0.98)"/>
<use href="#m0" transform="translate(879.5 434.6) scale(0.74)"/>
<use href="#m6" transform="translate(955.7 436.7) scale(1.22)"/>
<use href="#m3" transform="translate(905.1 437.8) scale(1.36)"/>
<use href="#m4" transform="translate(943.1 447.4) scale(1.14)"/>
<use href="#m9" transform="translate(872.0 450.0) scale(0.90 0.45)"/>
<use href="#m5" transform="translate(878.8 450.8) scale(0.63)"/>
<use href="#m2" transform="translate(977.7 451.6) scale(1.43)"/>
<use href="#m9" transform="translate(900.8 451.6) scale(1.28)"/>
<use href="#m2" transform="translate(914.7 463.7) scale(1.27)"/>
<use href="#m4" transform="translate(958.7 466.4) scale(1.21)"/>
<use href="#m2" transform="translate(889.3 467.4) scale(0.82)"/>
<use href="#m5" transform="translate(947.7 479.5) scale(1.40)"/>
<use href="#m3" transform="translate(915.1 479.7) scale(0.99)"/>
<use href="#m7" transform="translate(892.5 484.4) scale(0.80)"/>
<use href="#m2" transform="translate(924.0 496.1) scale(1.45)"/>
<use href="#m6" transform="translate(970.8 498.0) scale(1.20)"/>
<use href="#m5" transform="translate(896.2 500.3) scale(0.80)"/>
<use href="#m0" transform="translate(922.5 512.3) scale(0.94)"/>
<use href="#m9" transform="translate(894.7 515.4) scale(0.77)"/>
<use href="#m5" transform="translate(957.5 517.5) scale(1.51)"/>
</g>
<clipPath id="wc"><path d="M418.0 153.0L512.0 153.0L510.7 158.4L510.0 165.0L507.0 175.4L502.0 182.0L498.2 187.8L494.0 195.0L491.8 200.6L489.4 206.7L492.0 214.4L496.0 222.0L495.9 228.6L496.6 234.7L498.0 242.0L497.2 250.0L493.7 257.9L490.4 264.7L494.3 275.4L492.9 281.2L493.0 288.5L492.0 294.0L494.2 300.0L496.9 305.7L498.2 312.6L502.2 320.1L505.0 328.3L504.9 335.5L506.0 344.0L513.0 350.0L517.8 352.0L521.4 358.6L525.7 364.2L526.1 371.0L527.8 377.3L528.5 384.2L533.6 388.5L537.8 393.6L543.8 398.9L548.5 404.0L550.4 412.6L552.8 421.0L556.5 426.0L560.7 432.0L564.0 437.0L569.3 440.6L575.5 444.6L581.6 447.2L587.0 451.0L592.0 455.8L595.4 462.2L599.2 467.1L604.0 472.5L609.3 478.5L616.0 484.0L617.1 490.8L617.9 497.0L618.0 504.0L418.0 504.0Z"/></clipPath>
<path d="M418.0 153.0L512.0 153.0L510.7 158.4L510.0 165.0L507.0 175.4L502.0 182.0L498.2 187.8L494.0 195.0L491.8 200.6L489.4 206.7L492.0 214.4L496.0 222.0L495.9 228.6L496.6 234.7L498.0 242.0L497.2 250.0L493.7 257.9L490.4 264.7L494.3 275.4L492.9 281.2L493.0 288.5L492.0 294.0L494.2 300.0L496.9 305.7L498.2 312.6L502.2 320.1L505.0 328.3L504.9 335.5L506.0 344.0L513.0 350.0L517.8 352.0L521.4 358.6L525.7 364.2L526.1 371.0L527.8 377.3L528.5 384.2L533.6 388.5L537.8 393.6L543.8 398.9L548.5 404.0L550.4 412.6L552.8 421.0L556.5 426.0L560.7 432.0L564.0 437.0L569.3 440.6L575.5 444.6L581.6 447.2L587.0 451.0L592.0 455.8L595.4 462.2L599.2 467.1L604.0 472.5L609.3 478.5L616.0 484.0L617.1 490.8L617.9 497.0L618.0 504.0L418.0 504.0Z" fill="#78b9d3"/>
<g clip-path="url(#wc)"><rect x="418" y="153" width="210" height="351" filter="url(#nzw)" opacity=".22"/><rect x="418" y="153" width="210" height="351" filter="url(#nzd)" opacity=".12"/><rect x="418" y="153" width="210" height="351" fill="url(#wl)"/>
<text transform="translate(426 357) rotate(60.500)" font-family="Liberation Serif,serif" font-size="10" fill="#e8f4fa" opacity=".13" textLength="92" lengthAdjust="spacing">STRAIGHTS</text>
</g>
<path d="M512.0 153.0L510.7 158.4L510.0 165.0L507.0 175.4L502.0 182.0L498.2 187.8L494.0 195.0L491.8 200.6L489.4 206.7L492.0 214.4L496.0 222.0L495.9 228.6L496.6 234.7L498.0 242.0L497.2 250.0L493.7 257.9L490.4 264.7L494.3 275.4L492.9 281.2L493.0 288.5L492.0 294.0L494.2 300.0L496.9 305.7L498.2 312.6L502.2 320.1L505.0 328.3L504.9 335.5L506.0 344.0L513.0 350.0L517.8 352.0L521.4 358.6L525.7 364.2L526.1 371.0L527.8 377.3L528.5 384.2L533.6 388.5L537.8 393.6L543.8 398.9L548.5 404.0L550.4 412.6L552.8 421.0L556.5 426.0L560.7 432.0L564.0 437.0L569.3 440.6L575.5 444.6L581.6 447.2L587.0 451.0L592.0 455.8L595.4 462.2L599.2 467.1L604.0 472.5L609.3 478.5L616.0 484.0L617.1 490.8L617.9 497.0L618.0 504.0" fill="none" stroke="#0f6a6c" stroke-width="1.300" stroke-linejoin="round"/>
<path d="M507.0 175.5C508.2 175.9 511.2 177.2 514.0 178.0C516.8 178.8 521.2 179.8 524.0 180.5C526.8 181.2 528.7 181.9 531.0 182.5C533.3 183.1 536.8 183.8 538.0 184.0" stroke="#117078" fill="none" stroke-linecap="round" stroke-width="2.400"/>
<path d="M588.0 180.0C589.3 179.2 593.0 177.5 596.0 175.5C599.0 173.5 603.0 170.3 606.0 168.0C609.0 165.7 611.5 163.3 614.0 161.5C616.5 159.7 619.8 157.8 621.0 157.0" stroke="#117078" fill="none" stroke-linecap="round" stroke-width="1.800"/>
<path d="M619.0 159.0C617.5 160.2 612.7 164.0 610.0 166.0C607.3 168.0 605.0 169.5 603.0 171.0C601.0 172.5 598.8 174.3 598.0 175.0" stroke="#117078" fill="none" stroke-linecap="round" stroke-width="1" opacity="0"/>
<path d="M739.5 153.0C740.6 153.8 744.2 156.1 746.0 158.0C747.8 159.9 751.2 161.2 750.5 164.5C749.8 167.8 744.9 173.6 742.0 178.0C739.1 182.4 735.6 186.7 733.0 191.0C730.4 195.3 727.6 201.8 726.5 204.0" stroke="#117078" fill="none" stroke-linecap="round" stroke-width="1.100"/>
<path d="M742.5 276.0C743.1 278.3 745.2 285.3 746.0 290.0C746.8 294.7 747.5 297.3 747.5 304.0C747.5 310.7 746.2 323.2 746.0 330.0C745.8 336.8 746.7 341.3 746.5 345.0C746.3 348.7 745.2 350.8 745.0 352.0" stroke="#117078" fill="none" stroke-linecap="round" stroke-width="1.100"/>
<path d="M806.0 477.0C803.3 478.5 795.7 483.0 790.0 486.0C784.3 489.0 776.7 492.8 772.0 495.0C767.3 497.2 765.3 498.0 762.0 499.5C758.7 501.0 753.7 503.2 752.0 504.0" stroke="#117078" fill="none" stroke-linecap="round" stroke-width="1.500"/>
<path d="M727.0 496.0C726.0 496.8 722.8 499.0 721.0 500.5C719.2 502.0 716.8 504.2 716.0 505.0" stroke="#117078" fill="none" stroke-linecap="round" stroke-width="1.100"/>
<path d="M572.5 153.0C572.1 155.0 571.1 161.2 570.0 165.0C568.9 168.8 566.7 174.2 566.0 176.0" stroke="#c4876a" fill="none" stroke-width=".9"/>
<path d="M570.5 206.0C571.1 209.2 572.8 217.7 574.0 225.0C575.2 232.3 576.2 239.7 577.5 250.0C578.8 260.3 578.9 276.7 582.0 287.0C585.1 297.3 591.3 305.3 596.0 312.0C600.7 318.7 604.3 321.0 610.0 327.0C615.7 333.0 624.3 341.2 630.0 348.0C635.7 354.8 640.3 359.3 644.0 367.5C647.7 375.7 650.8 386.4 652.0 397.0C653.2 407.6 652.5 418.8 651.0 431.0C649.5 443.2 645.6 457.8 643.0 470.0C640.4 482.2 636.8 498.3 635.5 504.0" stroke="#c4876a" fill="none" stroke-width=".9"/>
<path d="M645.5 367.0C647.1 364.5 651.3 356.2 655.0 352.0C658.7 347.8 662.7 344.5 667.5 342.0C672.3 339.5 678.4 338.4 684.0 337.0C689.6 335.6 695.7 335.0 701.0 333.5C706.3 332.0 711.5 331.3 716.0 328.0C720.5 324.7 724.0 318.2 728.0 313.5C732.0 308.8 736.2 303.5 740.0 300.0C743.8 296.5 746.0 295.0 751.0 292.5C756.0 290.0 763.5 287.2 770.0 285.0C776.5 282.8 784.0 280.7 790.0 279.0C796.0 277.3 803.3 275.7 806.0 275.0" stroke="#c4876a" fill="none" stroke-width=".9" stroke-dasharray="2.200 1.800" stroke-width=".8"/>
<path d="M698.0 208.0L748.8 206.6L755.0 212.2L755.0 271.4L739.6 272.8L724.2 283.5L711.7 289.6L683.8 304.9L665.5 312.6L653.0 302.1L651.7 283.5L660.7 256.0L667.1 229.1L678.0 215.5Z" fill="#1c421a"/><use href="#t" x="726.5" y="208.7"/><use href="#t" x="742.3" y="208.9"/><use href="#t" x="721.3" y="209.2"/><use href="#t" x="695.2" y="209.2"/><use href="#t" x="710.5" y="209.2"/><use href="#t" x="699.6" y="209.4"/><use href="#t" x="737.8" y="209.4"/><use href="#t" x="705.6" y="209.5"/><use href="#t" x="731.2" y="209.5"/><use href="#t" x="716.0" y="209.6"/><use href="#t" x="747.8" y="209.9"/><use href="#t" x="702.8" y="212.6"/><use href="#t" x="728.5" y="212.7"/><use href="#t" x="713.1" y="212.8"/><use href="#t" x="692.2" y="212.9"/><use href="#t" x="724.1" y="212.9"/><use href="#t" x="708.0" y="213.0"/><use href="#t" x="687.2" y="213.0"/><use href="#t" x="734.0" y="213.1"/><use href="#t" x="718.7" y="213.1"/><use href="#t" x="740.3" y="213.4"/><use href="#t" x="745.5" y="213.4"/><use href="#t" x="750.1" y="213.4"/><use href="#t" x="696.8" y="213.4"/><use href="#t" x="720.6" y="216.1"/><use href="#t" x="699.9" y="216.3"/><use href="#t" x="710.7" y="216.4"/><use href="#t" x="678.4" y="216.4"/><use href="#t" x="694.1" y="216.6"/><use href="#t" x="684.4" y="216.6"/><use href="#t" x="689.2" y="216.7"/><use href="#t" x="748.2" y="216.7"/><use href="#t" x="737.4" y="216.8"/><use href="#t" x="752.7" y="216.9"/><use href="#t" x="731.4" y="216.9"/><use href="#t" x="726.1" y="217.0"/><use href="#t" x="716.1" y="217.1"/><use href="#t" x="704.8" y="217.2"/><use href="#t" x="742.1" y="217.3"/><use href="#t" x="686.5" y="219.8"/><use href="#t" x="751.0" y="219.8"/><use href="#t" x="692.6" y="219.8"/><use href="#t" x="702.8" y="220.0"/><use href="#t" x="729.1" y="220.0"/><use href="#t" x="718.4" y="220.2"/><use href="#t" x="681.8" y="220.3"/><use href="#t" x="739.5" y="220.4"/><use href="#t" x="713.6" y="220.4"/><use href="#t" x="733.9" y="220.6"/><use href="#t" x="723.5" y="220.6"/><use href="#t" x="744.9" y="220.8"/><use href="#t" x="675.9" y="220.9"/><use href="#t" x="697.8" y="221.0"/><use href="#t" x="708.5" y="221.0"/><use href="#t" x="731.3" y="223.5"/><use href="#t" x="688.9" y="223.7"/><use href="#t" x="695.3" y="223.8"/><use href="#t" x="710.4" y="223.8"/><use href="#t" x="705.8" y="223.9"/><use href="#t" x="753.4" y="224.0"/><use href="#t" x="726.0" y="224.2"/><use href="#t" x="700.4" y="224.2"/><use href="#t" x="716.5" y="224.2"/><use href="#t" x="747.5" y="224.2"/><use href="#t" x="674.1" y="224.3"/><use href="#t" x="683.8" y="224.4"/><use href="#t" x="742.9" y="224.5"/><use href="#t" x="736.6" y="224.5"/><use href="#t" x="721.9" y="224.6"/><use href="#t" x="678.8" y="224.7"/><use href="#t" x="739.2" y="227.2"/><use href="#t" x="676.7" y="227.2"/><use href="#t" x="681.7" y="227.3"/><use href="#t" x="702.2" y="227.4"/><use href="#t" x="691.5" y="227.5"/><use href="#t" x="724.5" y="227.6"/><use href="#t" x="745.8" y="227.6"/><use href="#t" x="698.1" y="227.7"/><use href="#t" x="750.5" y="227.7"/><use href="#t" x="728.9" y="227.8"/><use href="#t" x="733.9" y="228.0"/><use href="#t" x="707.6" y="228.1"/><use href="#t" x="670.6" y="228.1"/><use href="#t" x="686.3" y="228.3"/><use href="#t" x="712.7" y="228.3"/><use href="#t" x="718.4" y="228.4"/><use href="#t" x="736.8" y="230.9"/><use href="#t" x="747.8" y="231.0"/><use href="#t" x="742.1" y="231.0"/><use href="#t" x="683.9" y="231.2"/><use href="#t" x="688.9" y="231.2"/><use href="#t" x="721.8" y="231.3"/><use href="#t" x="710.4" y="231.3"/><use href="#t" x="706.0" y="231.4"/><use href="#t" x="695.4" y="231.4"/><use href="#t" x="678.5" y="231.5"/><use href="#t" x="668.9" y="231.6"/><use href="#t" x="726.3" y="231.6"/><use href="#t" x="732.0" y="231.6"/><use href="#t" x="752.5" y="231.7"/><use href="#t" x="700.3" y="231.7"/><use href="#t" x="673.8" y="231.7"/><use href="#t" x="715.7" y="231.9"/><use href="#t" x="703.3" y="234.6"/><use href="#t" x="739.5" y="234.7"/><use href="#t" x="666.0" y="234.7"/><use href="#t" x="698.0" y="234.8"/><use href="#t" x="729.1" y="234.8"/><use href="#t" x="671.5" y="234.8"/><use href="#t" x="724.2" y="234.8"/><use href="#t" x="692.7" y="235.0"/><use href="#t" x="682.0" y="235.0"/><use href="#t" x="686.2" y="235.2"/><use href="#t" x="750.5" y="235.2"/><use href="#t" x="734.8" y="235.4"/><use href="#t" x="719.1" y="235.5"/><use href="#t" x="745.7" y="235.6"/><use href="#t" x="707.7" y="235.7"/><use href="#t" x="713.7" y="235.7"/><use href="#t" x="676.6" y="235.8"/><use href="#t" x="694.4" y="238.3"/><use href="#t" x="668.3" y="238.4"/><use href="#t" x="741.8" y="238.4"/><use href="#t" x="673.3" y="238.5"/><use href="#t" x="721.2" y="238.6"/><use href="#t" x="678.3" y="238.6"/><use href="#t" x="684.6" y="238.8"/><use href="#t" x="705.6" y="238.8"/><use href="#t" x="715.6" y="238.9"/><use href="#t" x="700.1" y="238.9"/><use href="#t" x="726.4" y="239.0"/><use href="#t" x="689.3" y="239.0"/><use href="#t" x="736.8" y="239.1"/><use href="#t" x="710.9" y="239.2"/><use href="#t" x="752.6" y="239.2"/><use href="#t" x="747.8" y="239.4"/><use href="#t" x="732.4" y="239.4"/><use href="#t" x="692.5" y="242.1"/><use href="#t" x="729.8" y="242.2"/><use href="#t" x="681.0" y="242.3"/><use href="#t" x="751.1" y="242.5"/><use href="#t" x="702.5" y="242.6"/><use href="#t" x="686.4" y="242.7"/><use href="#t" x="676.8" y="242.7"/><use href="#t" x="665.9" y="242.7"/><use href="#t" x="719.0" y="242.8"/><use href="#t" x="740.0" y="242.8"/><use href="#t" x="697.7" y="242.9"/><use href="#t" x="707.5" y="242.9"/><use href="#t" x="734.9" y="243.0"/><use href="#t" x="671.4" y="243.1"/><use href="#t" x="723.6" y="243.1"/><use href="#t" x="745.0" y="243.1"/><use href="#t" x="712.7" y="243.2"/><use href="#t" x="689.4" y="245.7"/><use href="#t" x="663.6" y="245.8"/><use href="#t" x="683.5" y="245.9"/><use href="#t" x="700.5" y="245.9"/><use href="#t" x="742.3" y="246.0"/><use href="#t" x="673.0" y="246.1"/><use href="#t" x="668.4" y="246.2"/><use href="#t" x="705.0" y="246.4"/><use href="#t" x="727.2" y="246.4"/><use href="#t" x="737.5" y="246.4"/><use href="#t" x="710.3" y="246.4"/><use href="#t" x="694.9" y="246.4"/><use href="#t" x="715.6" y="246.5"/><use href="#t" x="752.5" y="246.6"/><use href="#t" x="678.5" y="246.6"/><use href="#t" x="747.2" y="246.7"/><use href="#t" x="721.7" y="246.7"/><use href="#t" x="731.8" y="246.7"/><use href="#t" x="676.2" y="249.4"/><use href="#t" x="750.2" y="249.4"/><use href="#t" x="739.5" y="249.6"/><use href="#t" x="702.5" y="249.6"/><use href="#t" x="707.3" y="249.7"/><use href="#t" x="665.7" y="249.8"/><use href="#t" x="670.9" y="249.8"/><use href="#t" x="686.5" y="249.9"/><use href="#t" x="729.7" y="249.9"/><use href="#t" x="681.4" y="249.9"/><use href="#t" x="724.6" y="250.0"/><use href="#t" x="719.1" y="250.0"/><use href="#t" x="745.3" y="250.0"/><use href="#t" x="697.4" y="250.2"/><use href="#t" x="692.5" y="250.2"/><use href="#t" x="713.4" y="250.5"/><use href="#t" x="734.8" y="250.6"/><use href="#t" x="742.7" y="253.1"/><use href="#t" x="726.5" y="253.2"/><use href="#t" x="716.0" y="253.3"/><use href="#t" x="705.1" y="253.4"/><use href="#t" x="737.0" y="253.5"/><use href="#t" x="753.3" y="253.6"/><use href="#t" x="679.0" y="253.6"/><use href="#t" x="721.7" y="253.7"/><use href="#t" x="700.5" y="253.8"/><use href="#t" x="684.3" y="253.9"/><use href="#t" x="673.7" y="253.9"/><use href="#t" x="731.9" y="254.0"/><use href="#t" x="668.2" y="254.0"/><use href="#t" x="663.5" y="254.0"/><use href="#t" x="695.2" y="254.0"/><use href="#t" x="690.1" y="254.0"/><use href="#t" x="710.9" y="254.1"/><use href="#t" x="747.8" y="254.2"/><use href="#t" x="745.3" y="257.0"/><use href="#t" x="740.2" y="257.0"/><use href="#t" x="660.8" y="257.1"/><use href="#t" x="729.4" y="257.2"/><use href="#t" x="708.5" y="257.2"/><use href="#t" x="670.9" y="257.2"/><use href="#t" x="751.1" y="257.3"/><use href="#t" x="697.0" y="257.5"/><use href="#t" x="691.8" y="257.5"/><use href="#t" x="681.0" y="257.6"/><use href="#t" x="676.2" y="257.7"/><use href="#t" x="734.4" y="257.7"/><use href="#t" x="702.2" y="257.7"/><use href="#t" x="687.1" y="257.8"/><use href="#t" x="665.0" y="257.8"/><use href="#t" x="718.9" y="257.8"/><use href="#t" x="723.2" y="257.9"/><use href="#t" x="712.9" y="258.0"/><use href="#t" x="705.0" y="260.5"/><use href="#t" x="694.3" y="260.6"/><use href="#t" x="689.4" y="260.6"/><use href="#t" x="753.2" y="260.8"/><use href="#t" x="742.0" y="260.8"/><use href="#t" x="679.2" y="260.9"/><use href="#t" x="737.1" y="261.0"/><use href="#t" x="683.6" y="261.0"/><use href="#t" x="731.3" y="261.0"/><use href="#t" x="748.2" y="261.1"/><use href="#t" x="716.6" y="261.2"/><use href="#t" x="726.0" y="261.3"/><use href="#t" x="662.4" y="261.4"/><use href="#t" x="673.2" y="261.4"/><use href="#t" x="668.1" y="261.4"/><use href="#t" x="710.9" y="261.5"/><use href="#t" x="721.0" y="261.5"/><use href="#t" x="700.2" y="261.6"/><use href="#t" x="692.7" y="264.2"/><use href="#t" x="733.9" y="264.2"/><use href="#t" x="724.4" y="264.3"/><use href="#t" x="661.0" y="264.3"/><use href="#t" x="717.9" y="264.3"/><use href="#t" x="728.9" y="264.3"/><use href="#t" x="687.2" y="264.4"/><use href="#t" x="702.1" y="264.7"/><use href="#t" x="670.6" y="264.7"/><use href="#t" x="750.6" y="264.7"/><use href="#t" x="707.5" y="264.8"/><use href="#t" x="696.9" y="265.0"/><use href="#t" x="740.0" y="265.1"/><use href="#t" x="745.4" y="265.2"/><use href="#t" x="666.0" y="265.2"/><use href="#t" x="681.4" y="265.3"/><use href="#t" x="713.8" y="265.3"/><use href="#t" x="676.3" y="265.3"/><use href="#t" x="753.6" y="267.9"/><use href="#t" x="673.6" y="268.0"/><use href="#t" x="720.6" y="268.0"/><use href="#t" x="742.4" y="268.1"/><use href="#t" x="663.1" y="268.3"/><use href="#t" x="678.6" y="268.4"/><use href="#t" x="727.0" y="268.5"/><use href="#t" x="736.5" y="268.5"/><use href="#t" x="668.4" y="268.6"/><use href="#t" x="689.3" y="268.7"/><use href="#t" x="747.6" y="268.7"/><use href="#t" x="695.0" y="268.8"/><use href="#t" x="700.4" y="268.8"/><use href="#t" x="716.4" y="268.9"/><use href="#t" x="683.7" y="269.0"/><use href="#t" x="710.2" y="269.0"/><use href="#t" x="657.0" y="269.0"/><use href="#t" x="705.0" y="269.1"/><use href="#t" x="731.7" y="269.1"/><use href="#t" x="739.8" y="271.7"/><use href="#t" x="702.8" y="271.7"/><use href="#t" x="729.7" y="271.9"/><use href="#t" x="665.9" y="272.0"/><use href="#t" x="691.9" y="272.0"/><use href="#t" x="734.0" y="272.0"/><use href="#t" x="659.6" y="272.1"/><use href="#t" x="681.2" y="272.1"/><use href="#t" x="708.2" y="272.1"/><use href="#t" x="686.4" y="272.3"/><use href="#t" x="744.9" y="272.3"/><use href="#t" x="719.1" y="272.4"/><use href="#t" x="714.0" y="272.5"/><use href="#t" x="670.4" y="272.6"/><use href="#t" x="676.6" y="272.6"/><use href="#t" x="723.9" y="272.7"/><use href="#t" x="697.8" y="272.7"/><use href="#t" x="673.3" y="275.7"/><use href="#t" x="721.6" y="275.7"/><use href="#t" x="731.7" y="275.9"/><use href="#t" x="704.8" y="275.9"/><use href="#t" x="663.0" y="275.9"/><use href="#t" x="727.2" y="276.1"/><use href="#t" x="716.3" y="276.1"/><use href="#t" x="657.4" y="276.2"/><use href="#t" x="700.6" y="276.3"/><use href="#t" x="684.1" y="276.4"/><use href="#t" x="667.8" y="276.4"/><use href="#t" x="695.2" y="276.4"/><use href="#t" x="690.0" y="276.5"/><use href="#t" x="678.2" y="276.5"/><use href="#t" x="710.8" y="276.5"/><use href="#t" x="675.6" y="279.1"/><use href="#t" x="654.4" y="279.1"/><use href="#t" x="665.0" y="279.3"/><use href="#t" x="660.4" y="279.3"/><use href="#t" x="691.4" y="279.4"/><use href="#t" x="713.8" y="279.5"/><use href="#t" x="671.1" y="279.6"/><use href="#t" x="718.8" y="279.7"/><use href="#t" x="682.0" y="279.8"/><use href="#t" x="697.9" y="279.9"/><use href="#t" x="724.5" y="280.0"/><use href="#t" x="686.3" y="280.0"/><use href="#t" x="708.1" y="280.0"/><use href="#t" x="702.4" y="280.1"/><use href="#t" x="668.5" y="282.7"/><use href="#t" x="652.5" y="282.7"/><use href="#t" x="662.5" y="283.1"/><use href="#t" x="710.4" y="283.1"/><use href="#t" x="673.0" y="283.1"/><use href="#t" x="658.1" y="283.3"/><use href="#t" x="694.8" y="283.4"/><use href="#t" x="684.8" y="283.4"/><use href="#t" x="689.6" y="283.4"/><use href="#t" x="716.0" y="283.4"/><use href="#t" x="705.2" y="283.5"/><use href="#t" x="679.4" y="283.6"/><use href="#t" x="700.5" y="283.8"/><use href="#t" x="721.3" y="283.9"/><use href="#t" x="670.8" y="286.5"/><use href="#t" x="680.8" y="286.6"/><use href="#t" x="698.1" y="286.7"/><use href="#t" x="692.2" y="286.7"/><use href="#t" x="665.6" y="286.8"/><use href="#t" x="676.0" y="286.9"/><use href="#t" x="708.3" y="286.9"/><use href="#t" x="713.7" y="287.0"/><use href="#t" x="702.7" y="287.3"/><use href="#t" x="660.1" y="287.3"/><use href="#t" x="655.0" y="287.4"/><use href="#t" x="686.5" y="287.4"/><use href="#t" x="700.3" y="290.2"/><use href="#t" x="668.9" y="290.2"/><use href="#t" x="679.1" y="290.2"/><use href="#t" x="683.8" y="290.4"/><use href="#t" x="673.6" y="290.6"/><use href="#t" x="657.7" y="290.7"/><use href="#t" x="705.2" y="290.9"/><use href="#t" x="695.3" y="291.0"/><use href="#t" x="689.4" y="291.1"/><use href="#t" x="662.7" y="291.2"/><use href="#t" x="652.5" y="291.3"/><use href="#t" x="655.0" y="293.8"/><use href="#t" x="692.0" y="294.0"/><use href="#t" x="682.0" y="294.1"/><use href="#t" x="670.6" y="294.4"/><use href="#t" x="697.0" y="294.5"/><use href="#t" x="661.0" y="294.6"/><use href="#t" x="686.5" y="294.6"/><use href="#t" x="676.1" y="294.7"/><use href="#t" x="666.2" y="295.0"/><use href="#t" x="662.7" y="297.7"/><use href="#t" x="684.4" y="297.8"/><use href="#t" x="667.7" y="297.8"/><use href="#t" x="695.3" y="298.0"/><use href="#t" x="657.4" y="298.1"/><use href="#t" x="673.0" y="298.1"/><use href="#t" x="679.1" y="298.2"/><use href="#t" x="689.0" y="298.2"/><use href="#t" x="652.8" y="298.6"/><use href="#t" x="654.3" y="301.4"/><use href="#t" x="665.8" y="301.5"/><use href="#t" x="671.2" y="301.5"/><use href="#t" x="676.2" y="301.6"/><use href="#t" x="682.1" y="301.6"/><use href="#t" x="687.2" y="302.0"/><use href="#t" x="660.2" y="302.3"/><use href="#t" x="679.4" y="305.1"/><use href="#t" x="673.8" y="305.1"/><use href="#t" x="667.6" y="305.3"/><use href="#t" x="663.3" y="305.7"/><use href="#t" x="657.7" y="305.9"/><use href="#t" x="664.9" y="308.7"/><use href="#t" x="670.4" y="308.8"/>
<path d="M665.9 355.3L680.8 348.9L734.4 348.9L744.1 357.0L757.4 369.9L770.4 389.2L773.7 408.4L773.7 463.6L763.9 475.2L744.1 486.9L734.4 493.4L682.3 495.0L670.8 483.5L669.4 398.8L664.5 389.2Z" fill="#1c421a"/><use href="#t" x="718.4" y="351.2"/><use href="#t" x="724.0" y="351.3"/><use href="#t" x="729.3" y="351.4"/><use href="#t" x="712.5" y="351.4"/><use href="#t" x="697.5" y="351.6"/><use href="#t" x="707.9" y="351.6"/><use href="#t" x="675.7" y="351.6"/><use href="#t" x="734.7" y="351.8"/><use href="#t" x="686.4" y="352.0"/><use href="#t" x="691.4" y="352.1"/><use href="#t" x="702.3" y="352.1"/><use href="#t" x="681.0" y="352.1"/><use href="#t" x="736.5" y="354.8"/><use href="#t" x="726.5" y="354.9"/><use href="#t" x="684.2" y="355.0"/><use href="#t" x="720.1" y="355.0"/><use href="#t" x="668.0" y="355.0"/><use href="#t" x="698.9" y="355.1"/><use href="#t" x="677.8" y="355.3"/><use href="#t" x="704.4" y="355.5"/><use href="#t" x="731.0" y="355.5"/><use href="#t" x="694.2" y="355.6"/><use href="#t" x="714.8" y="355.6"/><use href="#t" x="672.7" y="355.8"/><use href="#t" x="688.6" y="355.8"/><use href="#t" x="709.6" y="355.8"/><use href="#t" x="717.6" y="358.5"/><use href="#t" x="686.9" y="358.6"/><use href="#t" x="697.0" y="358.6"/><use href="#t" x="722.8" y="358.6"/><use href="#t" x="670.4" y="358.7"/><use href="#t" x="702.9" y="358.7"/><use href="#t" x="676.0" y="358.8"/><use href="#t" x="691.8" y="358.9"/><use href="#t" x="707.7" y="358.9"/><use href="#t" x="744.3" y="358.9"/><use href="#t" x="680.5" y="358.9"/><use href="#t" x="712.2" y="359.1"/><use href="#t" x="728.2" y="359.2"/><use href="#t" x="734.1" y="359.6"/><use href="#t" x="740.0" y="359.6"/><use href="#t" x="710.3" y="362.2"/><use href="#t" x="720.4" y="362.2"/><use href="#t" x="672.5" y="362.3"/><use href="#t" x="678.0" y="362.4"/><use href="#t" x="668.1" y="362.4"/><use href="#t" x="736.9" y="362.4"/><use href="#t" x="726.5" y="362.5"/><use href="#t" x="742.7" y="362.5"/><use href="#t" x="683.7" y="362.7"/><use href="#t" x="704.8" y="362.7"/><use href="#t" x="715.4" y="362.7"/><use href="#t" x="688.7" y="362.9"/><use href="#t" x="746.6" y="362.9"/><use href="#t" x="700.2" y="363.0"/><use href="#t" x="693.9" y="363.2"/><use href="#t" x="731.4" y="363.2"/><use href="#t" x="713.1" y="365.8"/><use href="#t" x="696.4" y="365.9"/><use href="#t" x="734.5" y="366.1"/><use href="#t" x="692.0" y="366.3"/><use href="#t" x="728.6" y="366.3"/><use href="#t" x="686.2" y="366.4"/><use href="#t" x="739.4" y="366.4"/><use href="#t" x="723.8" y="366.4"/><use href="#t" x="680.6" y="366.5"/><use href="#t" x="675.2" y="366.7"/><use href="#t" x="718.4" y="366.7"/><use href="#t" x="745.3" y="366.8"/><use href="#t" x="750.6" y="366.8"/><use href="#t" x="701.7" y="366.8"/><use href="#t" x="670.3" y="366.9"/><use href="#t" x="707.7" y="367.0"/><use href="#t" x="752.5" y="369.5"/><use href="#t" x="677.8" y="369.6"/><use href="#t" x="689.2" y="369.7"/><use href="#t" x="747.4" y="369.7"/><use href="#t" x="694.0" y="369.8"/><use href="#t" x="726.4" y="369.8"/><use href="#t" x="737.0" y="370.0"/><use href="#t" x="672.6" y="370.0"/><use href="#t" x="732.0" y="370.1"/><use href="#t" x="720.2" y="370.1"/><use href="#t" x="704.8" y="370.1"/><use href="#t" x="709.7" y="370.1"/><use href="#t" x="699.8" y="370.3"/><use href="#t" x="716.1" y="370.4"/><use href="#t" x="742.7" y="370.4"/><use href="#t" x="684.3" y="370.7"/><use href="#t" x="667.6" y="370.7"/><use href="#t" x="739.7" y="373.4"/><use href="#t" x="671.1" y="373.6"/><use href="#t" x="701.6" y="373.8"/><use href="#t" x="665.4" y="373.8"/><use href="#t" x="745.0" y="373.9"/><use href="#t" x="723.8" y="373.9"/><use href="#t" x="754.7" y="373.9"/><use href="#t" x="686.0" y="373.9"/><use href="#t" x="697.6" y="374.0"/><use href="#t" x="676.1" y="374.0"/><use href="#t" x="691.5" y="374.0"/><use href="#t" x="749.5" y="374.2"/><use href="#t" x="733.5" y="374.2"/><use href="#t" x="713.1" y="374.2"/><use href="#t" x="681.4" y="374.2"/><use href="#t" x="707.8" y="374.3"/><use href="#t" x="729.3" y="374.3"/><use href="#t" x="717.5" y="374.3"/><use href="#t" x="689.0" y="376.9"/><use href="#t" x="716.0" y="377.1"/><use href="#t" x="683.5" y="377.2"/><use href="#t" x="726.1" y="377.3"/><use href="#t" x="737.4" y="377.3"/><use href="#t" x="720.3" y="377.4"/><use href="#t" x="742.1" y="377.4"/><use href="#t" x="705.3" y="377.4"/><use href="#t" x="757.9" y="377.5"/><use href="#t" x="730.7" y="377.6"/><use href="#t" x="752.3" y="377.7"/><use href="#t" x="678.4" y="377.7"/><use href="#t" x="699.1" y="377.8"/><use href="#t" x="693.7" y="377.8"/><use href="#t" x="673.3" y="377.8"/><use href="#t" x="710.4" y="377.8"/><use href="#t" x="667.8" y="377.9"/><use href="#t" x="747.2" y="377.9"/><use href="#t" x="717.9" y="380.7"/><use href="#t" x="670.9" y="380.7"/><use href="#t" x="723.4" y="380.8"/><use href="#t" x="696.9" y="380.9"/><use href="#t" x="691.4" y="380.9"/><use href="#t" x="749.4" y="380.9"/><use href="#t" x="728.7" y="381.0"/><use href="#t" x="745.3" y="381.0"/><use href="#t" x="760.4" y="381.0"/><use href="#t" x="712.7" y="381.0"/><use href="#t" x="675.9" y="381.1"/><use href="#t" x="665.4" y="381.1"/><use href="#t" x="686.8" y="381.4"/><use href="#t" x="739.3" y="381.4"/><use href="#t" x="754.8" y="381.4"/><use href="#t" x="707.0" y="381.6"/><use href="#t" x="681.1" y="381.6"/><use href="#t" x="734.6" y="381.7"/><use href="#t" x="701.9" y="381.7"/><use href="#t" x="730.9" y="384.3"/><use href="#t" x="710.1" y="384.5"/><use href="#t" x="752.7" y="384.6"/><use href="#t" x="716.1" y="384.7"/><use href="#t" x="736.5" y="384.7"/><use href="#t" x="705.1" y="384.7"/><use href="#t" x="758.4" y="384.8"/><use href="#t" x="747.7" y="384.8"/><use href="#t" x="673.7" y="384.9"/><use href="#t" x="699.3" y="385.0"/><use href="#t" x="762.9" y="385.1"/><use href="#t" x="684.0" y="385.2"/><use href="#t" x="667.6" y="385.4"/><use href="#t" x="742.6" y="385.4"/><use href="#t" x="720.8" y="385.4"/><use href="#t" x="689.5" y="385.4"/><use href="#t" x="678.7" y="385.4"/><use href="#t" x="725.7" y="385.5"/><use href="#t" x="694.7" y="385.5"/><use href="#t" x="765.9" y="388.1"/><use href="#t" x="707.9" y="388.2"/><use href="#t" x="696.3" y="388.2"/><use href="#t" x="664.6" y="388.2"/><use href="#t" x="680.7" y="388.3"/><use href="#t" x="686.5" y="388.4"/><use href="#t" x="675.4" y="388.4"/><use href="#t" x="729.4" y="388.5"/><use href="#t" x="723.6" y="388.5"/><use href="#t" x="760.5" y="388.5"/><use href="#t" x="670.1" y="388.5"/><use href="#t" x="702.7" y="388.5"/><use href="#t" x="744.8" y="388.7"/><use href="#t" x="734.0" y="388.7"/><use href="#t" x="691.5" y="388.9"/><use href="#t" x="717.9" y="388.9"/><use href="#t" x="739.1" y="389.0"/><use href="#t" x="755.9" y="389.0"/><use href="#t" x="712.9" y="389.0"/><use href="#t" x="750.0" y="389.2"/><use href="#t" x="678.8" y="391.7"/><use href="#t" x="720.8" y="391.8"/><use href="#t" x="694.5" y="391.8"/><use href="#t" x="746.8" y="391.8"/><use href="#t" x="715.6" y="391.9"/><use href="#t" x="688.5" y="391.9"/><use href="#t" x="752.1" y="392.0"/><use href="#t" x="757.3" y="392.0"/><use href="#t" x="672.5" y="392.1"/><use href="#t" x="683.1" y="392.1"/><use href="#t" x="709.8" y="392.3"/><use href="#t" x="741.5" y="392.3"/><use href="#t" x="731.9" y="392.3"/><use href="#t" x="763.0" y="392.4"/><use href="#t" x="700.3" y="392.5"/><use href="#t" x="737.0" y="392.8"/><use href="#t" x="704.3" y="392.8"/><use href="#t" x="769.0" y="392.8"/><use href="#t" x="668.1" y="392.8"/><use href="#t" x="725.7" y="392.8"/><use href="#t" x="760.7" y="395.4"/><use href="#t" x="765.4" y="395.5"/><use href="#t" x="728.3" y="395.6"/><use href="#t" x="675.9" y="395.7"/><use href="#t" x="702.2" y="395.7"/><use href="#t" x="680.9" y="395.8"/><use href="#t" x="686.3" y="395.9"/><use href="#t" x="744.9" y="396.0"/><use href="#t" x="771.3" y="396.1"/><use href="#t" x="722.8" y="396.1"/><use href="#t" x="697.4" y="396.1"/><use href="#t" x="734.2" y="396.2"/><use href="#t" x="718.4" y="396.2"/><use href="#t" x="712.5" y="396.2"/><use href="#t" x="739.5" y="396.3"/><use href="#t" x="749.3" y="396.3"/><use href="#t" x="691.5" y="396.4"/><use href="#t" x="669.9" y="396.4"/><use href="#t" x="755.7" y="396.4"/><use href="#t" x="707.9" y="396.6"/><use href="#t" x="705.1" y="399.2"/><use href="#t" x="732.0" y="399.3"/><use href="#t" x="716.1" y="399.4"/><use href="#t" x="752.6" y="399.4"/><use href="#t" x="710.5" y="399.4"/><use href="#t" x="684.0" y="399.4"/><use href="#t" x="673.0" y="399.5"/><use href="#t" x="768.6" y="399.5"/><use href="#t" x="747.2" y="399.5"/><use href="#t" x="694.2" y="399.6"/><use href="#t" x="742.4" y="399.6"/><use href="#t" x="699.9" y="399.6"/><use href="#t" x="762.8" y="399.7"/><use href="#t" x="757.5" y="399.7"/><use href="#t" x="725.9" y="399.7"/><use href="#t" x="720.6" y="399.7"/><use href="#t" x="689.6" y="399.8"/><use href="#t" x="737.1" y="399.9"/><use href="#t" x="678.0" y="400.1"/><use href="#t" x="718.6" y="402.8"/><use href="#t" x="733.9" y="402.9"/><use href="#t" x="723.6" y="403.0"/><use href="#t" x="680.8" y="403.0"/><use href="#t" x="702.0" y="403.1"/><use href="#t" x="686.8" y="403.2"/><use href="#t" x="754.8" y="403.2"/><use href="#t" x="696.5" y="403.2"/><use href="#t" x="707.9" y="403.2"/><use href="#t" x="712.8" y="403.3"/><use href="#t" x="744.9" y="403.4"/><use href="#t" x="771.7" y="403.5"/><use href="#t" x="728.3" y="403.5"/><use href="#t" x="670.6" y="403.6"/><use href="#t" x="676.3" y="403.6"/><use href="#t" x="765.4" y="403.6"/><use href="#t" x="691.0" y="403.8"/><use href="#t" x="739.5" y="403.9"/><use href="#t" x="750.4" y="403.9"/><use href="#t" x="761.2" y="403.9"/><use href="#t" x="746.9" y="406.5"/><use href="#t" x="715.7" y="406.6"/><use href="#t" x="726.1" y="406.6"/><use href="#t" x="752.6" y="406.7"/><use href="#t" x="699.2" y="406.8"/><use href="#t" x="757.4" y="406.9"/><use href="#t" x="694.3" y="407.0"/><use href="#t" x="689.7" y="407.0"/><use href="#t" x="721.1" y="407.0"/><use href="#t" x="683.5" y="407.0"/><use href="#t" x="731.4" y="407.1"/><use href="#t" x="773.2" y="407.2"/><use href="#t" x="737.1" y="407.2"/><use href="#t" x="763.3" y="407.2"/><use href="#t" x="677.9" y="407.2"/><use href="#t" x="672.5" y="407.3"/><use href="#t" x="742.3" y="407.4"/><use href="#t" x="704.9" y="407.5"/><use href="#t" x="768.7" y="407.6"/><use href="#t" x="709.6" y="407.6"/><use href="#t" x="718.8" y="410.2"/><use href="#t" x="739.9" y="410.3"/><use href="#t" x="670.4" y="410.4"/><use href="#t" x="755.7" y="410.4"/><use href="#t" x="771.4" y="410.6"/><use href="#t" x="686.1" y="410.6"/><use href="#t" x="749.9" y="410.7"/><use href="#t" x="713.4" y="410.8"/><use href="#t" x="759.9" y="410.9"/><use href="#t" x="692.2" y="410.9"/><use href="#t" x="744.7" y="410.9"/><use href="#t" x="675.5" y="411.0"/><use href="#t" x="728.1" y="411.0"/><use href="#t" x="734.7" y="411.1"/><use href="#t" x="696.4" y="411.1"/><use href="#t" x="707.7" y="411.2"/><use href="#t" x="766.5" y="411.2"/><use href="#t" x="723.2" y="411.2"/><use href="#t" x="681.0" y="411.3"/><use href="#t" x="702.1" y="411.3"/><use href="#t" x="705.1" y="414.0"/><use href="#t" x="683.8" y="414.0"/><use href="#t" x="679.0" y="414.0"/><use href="#t" x="688.6" y="414.1"/><use href="#t" x="699.6" y="414.2"/><use href="#t" x="757.4" y="414.3"/><use href="#t" x="726.0" y="414.3"/><use href="#t" x="673.7" y="414.4"/><use href="#t" x="693.6" y="414.4"/><use href="#t" x="720.3" y="414.4"/><use href="#t" x="736.7" y="414.4"/><use href="#t" x="710.2" y="414.5"/><use href="#t" x="732.1" y="414.6"/><use href="#t" x="752.1" y="414.6"/><use href="#t" x="769.2" y="414.7"/><use href="#t" x="747.7" y="414.7"/><use href="#t" x="762.5" y="414.7"/><use href="#t" x="715.4" y="415.0"/><use href="#t" x="741.9" y="415.0"/><use href="#t" x="686.5" y="417.6"/><use href="#t" x="750.6" y="417.7"/><use href="#t" x="670.3" y="417.9"/><use href="#t" x="766.5" y="418.1"/><use href="#t" x="734.4" y="418.1"/><use href="#t" x="723.5" y="418.2"/><use href="#t" x="697.6" y="418.3"/><use href="#t" x="755.4" y="418.3"/><use href="#t" x="745.0" y="418.4"/><use href="#t" x="718.1" y="418.4"/><use href="#t" x="702.3" y="418.4"/><use href="#t" x="707.2" y="418.5"/><use href="#t" x="675.4" y="418.5"/><use href="#t" x="771.3" y="418.5"/><use href="#t" x="681.7" y="418.6"/><use href="#t" x="691.4" y="418.6"/><use href="#t" x="712.7" y="418.6"/><use href="#t" x="739.4" y="418.7"/><use href="#t" x="728.7" y="418.7"/><use href="#t" x="760.5" y="418.8"/><use href="#t" x="757.3" y="421.3"/><use href="#t" x="715.4" y="421.3"/><use href="#t" x="768.8" y="421.4"/><use href="#t" x="741.8" y="421.4"/><use href="#t" x="720.7" y="421.4"/><use href="#t" x="726.7" y="421.7"/><use href="#t" x="747.4" y="421.8"/><use href="#t" x="689.4" y="421.8"/><use href="#t" x="678.6" y="421.8"/><use href="#t" x="753.2" y="421.8"/><use href="#t" x="773.6" y="421.9"/><use href="#t" x="762.5" y="421.9"/><use href="#t" x="694.9" y="422.0"/><use href="#t" x="699.5" y="422.1"/><use href="#t" x="672.6" y="422.1"/><use href="#t" x="710.4" y="422.1"/><use href="#t" x="731.5" y="422.2"/><use href="#t" x="736.3" y="422.3"/><use href="#t" x="705.3" y="422.4"/><use href="#t" x="683.7" y="422.5"/><use href="#t" x="739.4" y="425.2"/><use href="#t" x="681.2" y="425.2"/><use href="#t" x="749.8" y="425.2"/><use href="#t" x="713.5" y="425.2"/><use href="#t" x="770.6" y="425.3"/><use href="#t" x="675.9" y="425.3"/><use href="#t" x="723.8" y="425.3"/><use href="#t" x="728.9" y="425.3"/><use href="#t" x="696.9" y="425.3"/><use href="#t" x="744.5" y="425.6"/><use href="#t" x="702.3" y="425.7"/><use href="#t" x="734.6" y="425.7"/><use href="#t" x="671.0" y="425.8"/><use href="#t" x="754.8" y="425.8"/><use href="#t" x="691.7" y="425.9"/><use href="#t" x="766.0" y="425.9"/><use href="#t" x="717.8" y="426.0"/><use href="#t" x="686.1" y="426.0"/><use href="#t" x="761.1" y="426.0"/><use href="#t" x="707.2" y="426.0"/><use href="#t" x="720.8" y="428.8"/><use href="#t" x="694.3" y="428.8"/><use href="#t" x="714.9" y="428.9"/><use href="#t" x="763.6" y="428.9"/><use href="#t" x="700.2" y="428.9"/><use href="#t" x="672.7" y="428.9"/><use href="#t" x="752.5" y="428.9"/><use href="#t" x="731.8" y="429.0"/><use href="#t" x="757.3" y="429.1"/><use href="#t" x="741.6" y="429.2"/><use href="#t" x="726.5" y="429.3"/><use href="#t" x="688.7" y="429.4"/><use href="#t" x="746.8" y="429.4"/><use href="#t" x="768.1" y="429.4"/><use href="#t" x="678.3" y="429.7"/><use href="#t" x="683.0" y="429.8"/><use href="#t" x="705.3" y="429.8"/><use href="#t" x="736.0" y="429.8"/><use href="#t" x="710.1" y="429.9"/><use href="#t" x="712.2" y="432.4"/><use href="#t" x="750.6" y="432.5"/><use href="#t" x="675.1" y="432.5"/><use href="#t" x="739.3" y="432.8"/><use href="#t" x="765.4" y="432.8"/><use href="#t" x="697.1" y="432.8"/><use href="#t" x="707.1" y="433.1"/><use href="#t" x="744.0" y="433.2"/><use href="#t" x="734.7" y="433.2"/><use href="#t" x="718.3" y="433.3"/><use href="#t" x="702.9" y="433.3"/><use href="#t" x="728.2" y="433.3"/><use href="#t" x="724.0" y="433.3"/><use href="#t" x="680.5" y="433.3"/><use href="#t" x="760.3" y="433.4"/><use href="#t" x="771.2" y="433.5"/><use href="#t" x="755.7" y="433.5"/><use href="#t" x="686.4" y="433.5"/><use href="#t" x="692.3" y="433.5"/><use href="#t" x="737.3" y="436.2"/><use href="#t" x="678.2" y="436.2"/><use href="#t" x="704.7" y="436.3"/><use href="#t" x="726.5" y="436.4"/><use href="#t" x="673.5" y="436.4"/><use href="#t" x="773.2" y="436.4"/><use href="#t" x="763.2" y="436.4"/><use href="#t" x="758.0" y="436.5"/><use href="#t" x="694.8" y="436.5"/><use href="#t" x="768.4" y="436.6"/><use href="#t" x="720.6" y="436.6"/><use href="#t" x="683.3" y="436.6"/><use href="#t" x="731.1" y="436.7"/><use href="#t" x="700.2" y="436.9"/><use href="#t" x="710.8" y="436.9"/><use href="#t" x="688.9" y="436.9"/><use href="#t" x="746.8" y="436.9"/><use href="#t" x="714.9" y="436.9"/><use href="#t" x="752.8" y="437.0"/><use href="#t" x="742.5" y="437.0"/><use href="#t" x="707.4" y="439.8"/><use href="#t" x="696.5" y="440.0"/><use href="#t" x="766.5" y="440.0"/><use href="#t" x="718.6" y="440.0"/><use href="#t" x="680.8" y="440.1"/><use href="#t" x="739.0" y="440.1"/><use href="#t" x="733.6" y="440.1"/><use href="#t" x="771.6" y="440.2"/><use href="#t" x="701.7" y="440.2"/><use href="#t" x="750.4" y="440.2"/><use href="#t" x="728.6" y="440.2"/><use href="#t" x="755.1" y="440.4"/><use href="#t" x="744.3" y="440.4"/><use href="#t" x="675.4" y="440.5"/><use href="#t" x="712.7" y="440.6"/><use href="#t" x="670.5" y="440.7"/><use href="#t" x="761.0" y="440.7"/><use href="#t" x="722.8" y="440.8"/><use href="#t" x="692.3" y="440.8"/><use href="#t" x="685.8" y="441.0"/><use href="#t" x="672.5" y="443.5"/><use href="#t" x="747.7" y="443.6"/><use href="#t" x="725.6" y="443.6"/><use href="#t" x="683.6" y="443.6"/><use href="#t" x="731.8" y="443.7"/><use href="#t" x="699.1" y="443.8"/><use href="#t" x="742.3" y="443.8"/><use href="#t" x="758.0" y="443.9"/><use href="#t" x="710.9" y="444.0"/><use href="#t" x="689.5" y="444.1"/><use href="#t" x="694.3" y="444.3"/><use href="#t" x="763.9" y="444.4"/><use href="#t" x="705.3" y="444.4"/><use href="#t" x="736.7" y="444.4"/><use href="#t" x="679.0" y="444.6"/><use href="#t" x="716.2" y="444.6"/><use href="#t" x="720.8" y="444.6"/><use href="#t" x="768.9" y="444.6"/><use href="#t" x="752.7" y="444.6"/><use href="#t" x="675.4" y="447.2"/><use href="#t" x="686.9" y="447.3"/><use href="#t" x="707.5" y="447.4"/><use href="#t" x="692.0" y="447.4"/><use href="#t" x="733.9" y="447.5"/><use href="#t" x="696.7" y="447.6"/><use href="#t" x="728.1" y="447.6"/><use href="#t" x="770.5" y="447.6"/><use href="#t" x="712.2" y="447.6"/><use href="#t" x="681.2" y="447.7"/><use href="#t" x="718.8" y="447.7"/><use href="#t" x="766.5" y="447.9"/><use href="#t" x="702.9" y="448.0"/><use href="#t" x="749.7" y="448.0"/><use href="#t" x="739.2" y="448.0"/><use href="#t" x="744.1" y="448.0"/><use href="#t" x="754.8" y="448.1"/><use href="#t" x="760.4" y="448.2"/><use href="#t" x="723.7" y="448.3"/><use href="#t" x="769.1" y="450.9"/><use href="#t" x="683.1" y="450.9"/><use href="#t" x="700.1" y="450.9"/><use href="#t" x="763.5" y="451.1"/><use href="#t" x="731.3" y="451.2"/><use href="#t" x="752.2" y="451.2"/><use href="#t" x="704.2" y="451.2"/><use href="#t" x="746.6" y="451.2"/><use href="#t" x="742.3" y="451.6"/><use href="#t" x="709.5" y="451.6"/><use href="#t" x="678.6" y="451.6"/><use href="#t" x="726.3" y="451.7"/><use href="#t" x="720.2" y="451.7"/><use href="#t" x="757.5" y="451.7"/><use href="#t" x="688.6" y="451.8"/><use href="#t" x="694.8" y="451.8"/><use href="#t" x="716.1" y="452.0"/><use href="#t" x="737.2" y="452.0"/><use href="#t" x="673.7" y="452.0"/><use href="#t" x="718.8" y="454.7"/><use href="#t" x="696.6" y="454.7"/><use href="#t" x="723.2" y="454.7"/><use href="#t" x="750.2" y="454.7"/><use href="#t" x="675.3" y="454.8"/><use href="#t" x="691.2" y="454.9"/><use href="#t" x="681.5" y="454.9"/><use href="#t" x="707.8" y="455.0"/><use href="#t" x="734.2" y="455.0"/><use href="#t" x="745.3" y="455.1"/><use href="#t" x="765.3" y="455.2"/><use href="#t" x="771.3" y="455.2"/><use href="#t" x="685.8" y="455.2"/><use href="#t" x="702.7" y="455.3"/><use href="#t" x="740.0" y="455.3"/><use href="#t" x="760.2" y="455.3"/><use href="#t" x="755.3" y="455.4"/><use href="#t" x="728.7" y="455.4"/><use href="#t" x="670.7" y="455.7"/><use href="#t" x="713.2" y="455.8"/><use href="#t" x="753.1" y="458.4"/><use href="#t" x="720.1" y="458.4"/><use href="#t" x="699.0" y="458.4"/><use href="#t" x="742.3" y="458.5"/><use href="#t" x="673.0" y="458.5"/><use href="#t" x="763.3" y="458.6"/><use href="#t" x="678.2" y="458.7"/><use href="#t" x="689.0" y="458.7"/><use href="#t" x="758.2" y="458.9"/><use href="#t" x="725.6" y="459.0"/><use href="#t" x="683.2" y="459.0"/><use href="#t" x="731.5" y="459.1"/><use href="#t" x="737.3" y="459.2"/><use href="#t" x="710.8" y="459.2"/><use href="#t" x="704.6" y="459.2"/><use href="#t" x="768.9" y="459.3"/><use href="#t" x="715.1" y="459.3"/><use href="#t" x="693.6" y="459.4"/><use href="#t" x="747.9" y="459.4"/><use href="#t" x="670.7" y="462.0"/><use href="#t" x="702.0" y="462.1"/><use href="#t" x="675.1" y="462.1"/><use href="#t" x="717.7" y="462.2"/><use href="#t" x="744.8" y="462.3"/><use href="#t" x="708.1" y="462.3"/><use href="#t" x="739.9" y="462.5"/><use href="#t" x="765.8" y="462.5"/><use href="#t" x="750.4" y="462.5"/><use href="#t" x="733.7" y="462.7"/><use href="#t" x="686.3" y="462.8"/><use href="#t" x="755.2" y="462.8"/><use href="#t" x="771.5" y="462.8"/><use href="#t" x="760.3" y="463.0"/><use href="#t" x="697.6" y="463.0"/><use href="#t" x="691.8" y="463.0"/><use href="#t" x="723.3" y="463.0"/><use href="#t" x="713.2" y="463.0"/><use href="#t" x="681.3" y="463.2"/><use href="#t" x="729.2" y="463.2"/><use href="#t" x="763.0" y="465.8"/><use href="#t" x="741.4" y="465.9"/><use href="#t" x="688.5" y="466.0"/><use href="#t" x="683.7" y="466.2"/><use href="#t" x="725.9" y="466.2"/><use href="#t" x="757.5" y="466.3"/><use href="#t" x="768.4" y="466.4"/><use href="#t" x="736.2" y="466.5"/><use href="#t" x="677.8" y="466.5"/><use href="#t" x="731.7" y="466.5"/><use href="#t" x="709.7" y="466.5"/><use href="#t" x="720.5" y="466.5"/><use href="#t" x="716.0" y="466.6"/><use href="#t" x="700.3" y="466.6"/><use href="#t" x="752.3" y="466.6"/><use href="#t" x="705.4" y="466.7"/><use href="#t" x="673.3" y="466.7"/><use href="#t" x="694.6" y="466.8"/><use href="#t" x="747.8" y="466.8"/><use href="#t" x="760.7" y="469.5"/><use href="#t" x="718.6" y="469.6"/><use href="#t" x="733.5" y="469.6"/><use href="#t" x="750.1" y="469.9"/><use href="#t" x="696.3" y="469.9"/><use href="#t" x="712.3" y="470.0"/><use href="#t" x="680.7" y="470.0"/><use href="#t" x="686.4" y="470.0"/><use href="#t" x="728.3" y="470.1"/><use href="#t" x="765.5" y="470.1"/><use href="#t" x="755.9" y="470.1"/><use href="#t" x="744.8" y="470.1"/><use href="#t" x="723.0" y="470.1"/><use href="#t" x="702.3" y="470.2"/><use href="#t" x="739.1" y="470.3"/><use href="#t" x="707.6" y="470.4"/><use href="#t" x="676.2" y="470.5"/><use href="#t" x="692.3" y="470.5"/><use href="#t" x="720.6" y="473.1"/><use href="#t" x="672.7" y="473.2"/><use href="#t" x="757.2" y="473.3"/><use href="#t" x="763.4" y="473.4"/><use href="#t" x="753.2" y="473.4"/><use href="#t" x="699.2" y="473.4"/><use href="#t" x="705.3" y="473.5"/><use href="#t" x="689.1" y="473.6"/><use href="#t" x="736.6" y="473.6"/><use href="#t" x="678.8" y="473.7"/><use href="#t" x="694.1" y="473.7"/><use href="#t" x="710.5" y="473.9"/><use href="#t" x="683.8" y="473.9"/><use href="#t" x="726.6" y="474.0"/><use href="#t" x="747.0" y="474.0"/><use href="#t" x="715.5" y="474.0"/><use href="#t" x="742.2" y="474.1"/><use href="#t" x="731.7" y="474.2"/><use href="#t" x="729.0" y="476.9"/><use href="#t" x="718.2" y="476.9"/><use href="#t" x="681.5" y="477.1"/><use href="#t" x="692.0" y="477.1"/><use href="#t" x="739.8" y="477.1"/><use href="#t" x="707.5" y="477.3"/><use href="#t" x="733.9" y="477.3"/><use href="#t" x="749.3" y="477.4"/><use href="#t" x="697.0" y="477.4"/><use href="#t" x="686.3" y="477.5"/><use href="#t" x="702.4" y="477.5"/><use href="#t" x="755.3" y="477.6"/><use href="#t" x="723.3" y="477.7"/><use href="#t" x="745.2" y="477.8"/><use href="#t" x="675.5" y="477.9"/><use href="#t" x="712.7" y="478.0"/><use href="#t" x="720.9" y="480.5"/><use href="#t" x="698.9" y="480.5"/><use href="#t" x="684.1" y="480.8"/><use href="#t" x="688.8" y="480.8"/><use href="#t" x="730.9" y="480.9"/><use href="#t" x="673.5" y="481.0"/><use href="#t" x="725.5" y="481.0"/><use href="#t" x="747.2" y="481.0"/><use href="#t" x="752.0" y="481.0"/><use href="#t" x="678.0" y="481.3"/><use href="#t" x="742.7" y="481.3"/><use href="#t" x="710.3" y="481.4"/><use href="#t" x="704.5" y="481.4"/><use href="#t" x="694.0" y="481.5"/><use href="#t" x="715.8" y="481.6"/><use href="#t" x="736.4" y="481.7"/><use href="#t" x="724.1" y="484.3"/><use href="#t" x="701.6" y="484.3"/><use href="#t" x="717.8" y="484.4"/><use href="#t" x="691.4" y="484.5"/><use href="#t" x="739.8" y="484.5"/><use href="#t" x="686.0" y="484.5"/><use href="#t" x="681.7" y="484.7"/><use href="#t" x="744.4" y="484.8"/><use href="#t" x="728.8" y="484.8"/><use href="#t" x="697.5" y="485.0"/><use href="#t" x="733.8" y="485.1"/><use href="#t" x="712.6" y="485.2"/><use href="#t" x="676.0" y="485.2"/><use href="#t" x="707.1" y="485.4"/><use href="#t" x="684.0" y="487.9"/><use href="#t" x="705.0" y="488.4"/><use href="#t" x="694.6" y="488.5"/><use href="#t" x="730.7" y="488.5"/><use href="#t" x="725.7" y="488.6"/><use href="#t" x="720.5" y="488.6"/><use href="#t" x="678.6" y="488.7"/><use href="#t" x="689.4" y="488.7"/><use href="#t" x="715.7" y="488.8"/><use href="#t" x="710.3" y="488.9"/><use href="#t" x="737.0" y="489.0"/><use href="#t" x="700.1" y="489.1"/><use href="#t" x="691.1" y="491.7"/><use href="#t" x="696.6" y="491.7"/><use href="#t" x="702.5" y="491.8"/><use href="#t" x="718.3" y="491.9"/><use href="#t" x="686.3" y="492.0"/><use href="#t" x="707.4" y="492.1"/><use href="#t" x="722.9" y="492.3"/><use href="#t" x="680.6" y="492.4"/><use href="#t" x="733.7" y="492.4"/><use href="#t" x="728.6" y="492.5"/><use href="#t" x="713.1" y="492.6"/>
<path d="M598.0 153.6L620.0 153.6L620.0 155.5L611.5 157.6L601.4 157.1Z" fill="#1c421a"/><use href="#t" x="609.4" y="155.9"/><use href="#t" x="604.4" y="156.3"/><use href="#t" x="614.7" y="156.7"/>
<path d="M751.0 273.6L758.3 273.6L759.0 285.6L751.0 285.6Z" fill="#1c421a"/><use href="#t" x="757.3" y="276.0"/><use href="#t" x="752.2" y="276.7"/><use href="#t" x="753.8" y="279.5"/><use href="#t" x="757.4" y="283.3"/><use href="#t" x="752.1" y="284.1"/>
<g>
<path d="M535.6 188.0L563.0 171.5L592.4 190.0L564.5 207.5Z" fill="#5a5046" filter="url(#b1)"/>
<path d="M560.9 174.3h3.2v-2.4h-3.2z" fill="#d2cec2"/><path d="M564.0 174.3l2.1 -0.7v-2.4l-2.1 0.7z" fill="#8e897e"/><path d="M560.6 171.9l1.6 -2.4l2.1 -0.7l1.9 2.4l-2.1 0.7z" fill="#6e3c2e" stroke="#2e221c" stroke-width=".35"/><path d="M560.6 171.9l1.6 -2.4l1.9 2.4z" fill="#a2604c" stroke="#2e221c" stroke-width=".3"/><path d="M555.9 178.6h3.8v-3.1h-3.8z" fill="#d2cec2"/><path d="M559.6 178.6l2.5 -0.9v-3.1l-2.5 0.9z" fill="#8e897e"/><path d="M555.6 175.5l1.9 -3.1l2.5 -0.9l2.2 3.1l-2.5 0.9z" fill="#643830" stroke="#2e221c" stroke-width=".35"/><path d="M555.6 175.5l1.9 -3.1l2.2 3.1z" fill="#96584a" stroke="#2e221c" stroke-width=".3"/><path d="M567.7 179.2h3.5v-3.6h-3.5z" fill="#d2cec2"/><path d="M571.2 179.2l2.4 -1.1v-3.6l-2.4 1.1z" fill="#8e897e"/><path d="M567.4 175.6l1.8 -3.6l2.4 -1.1l2.1 3.6l-2.4 1.1z" fill="#643830" stroke="#2e221c" stroke-width=".35"/><path d="M567.4 175.6l1.8 -3.6l2.1 3.6z" fill="#96584a" stroke="#2e221c" stroke-width=".3"/><path d="M557.3 179.1h3.6v-3.2h-3.6z" fill="#d2cec2"/><path d="M560.9 179.1l2.4 -1.0v-3.2l-2.4 1.0z" fill="#8e897e"/><path d="M557.0 176.0l1.8 -3.2l2.4 -1.0l2.1 3.2l-2.4 1.0z" fill="#7a4636" stroke="#2e221c" stroke-width=".35"/><path d="M557.0 176.0l1.8 -3.2l2.1 3.2z" fill="#b07058" stroke="#2e221c" stroke-width=".3"/><path d="M564.9 179.3h2.9v-2.7h-2.9z" fill="#d2cec2"/><path d="M567.8 179.3l1.9 -0.8v-2.7l-1.9 0.8z" fill="#8e897e"/><path d="M564.6 176.6l1.4 -2.7l1.9 -0.8l1.7 2.7l-1.9 0.8z" fill="#54302a" stroke="#2e221c" stroke-width=".35"/><path d="M564.6 176.6l1.4 -2.7l1.7 2.7z" fill="#7e463a" stroke="#2e221c" stroke-width=".3"/><path d="M561.3 179.8h3.8v-3.4h-3.8z" fill="#d2cec2"/><path d="M565.1 179.8l2.5 -1.0v-3.4l-2.5 1.0z" fill="#8e897e"/><path d="M561.0 176.4l1.9 -3.4l2.5 -1.0l2.2 3.4l-2.5 1.0z" fill="#54302a" stroke="#2e221c" stroke-width=".35"/><path d="M561.0 176.4l1.9 -3.4l2.2 3.4z" fill="#7e463a" stroke="#2e221c" stroke-width=".3"/><path d="M554.6 183.5h3.2v-3.0h-3.2z" fill="#d2cec2"/><path d="M557.8 183.5l2.2 -0.9v-3.0l-2.2 0.9z" fill="#8e897e"/><path d="M554.3 180.6l1.6 -3.0l2.2 -0.9l1.9 3.0l-2.2 0.9z" fill="#7a4636" stroke="#2e221c" stroke-width=".35"/><path d="M554.3 180.6l1.6 -3.0l1.9 3.0z" fill="#b07058" stroke="#2e221c" stroke-width=".3"/><path d="M561.8 185.1h3.8v-3.4h-3.8z" fill="#d2cec2"/><path d="M565.6 185.1l2.5 -1.0v-3.4l-2.5 1.0z" fill="#8e897e"/><path d="M561.5 181.7l1.9 -3.4l2.5 -1.0l2.2 3.4l-2.5 1.0z" fill="#7a4636" stroke="#2e221c" stroke-width=".35"/><path d="M561.5 181.7l1.9 -3.4l2.2 3.4z" fill="#b07058" stroke="#2e221c" stroke-width=".3"/><path d="M575.6 185.2h2.7v-2.2h-2.7z" fill="#d2cec2"/><path d="M578.4 185.2l1.8 -0.7v-2.2l-1.8 0.7z" fill="#8e897e"/><path d="M575.3 183.0l1.4 -2.2l1.8 -0.7l1.7 2.2l-1.8 0.7z" fill="#7a4636" stroke="#2e221c" stroke-width=".35"/><path d="M575.3 183.0l1.4 -2.2l1.7 2.2z" fill="#b07058" stroke="#2e221c" stroke-width=".3"/><path d="M571.9 185.9h4.2v-3.9h-4.2z" fill="#d2cec2"/><path d="M576.1 185.9l2.8 -1.2v-3.9l-2.8 1.2z" fill="#8e897e"/><path d="M571.6 182.0l2.1 -3.9l2.8 -1.2l2.4 3.9l-2.8 1.2z" fill="#5c3226" stroke="#2e221c" stroke-width=".35"/><path d="M571.6 182.0l2.1 -3.9l2.4 3.9z" fill="#8c5040" stroke="#2e221c" stroke-width=".3"/><path d="M548.0 185.6h3.3v-2.7h-3.3z" fill="#d2cec2"/><path d="M551.3 185.6l2.2 -0.8v-2.7l-2.2 0.8z" fill="#8e897e"/><path d="M547.7 182.9l1.7 -2.7l2.2 -0.8l2.0 2.7l-2.2 0.8z" fill="#6e3c2e" stroke="#2e221c" stroke-width=".35"/><path d="M547.7 182.9l1.7 -2.7l2.0 2.7z" fill="#a2604c" stroke="#2e221c" stroke-width=".3"/><path d="M563.4 186.4h4.2v-4.5h-4.2z" fill="#d2cec2"/><path d="M567.6 186.4l2.8 -1.3v-4.5l-2.8 1.3z" fill="#8e897e"/><path d="M563.1 182.0l2.1 -4.5l2.8 -1.3l2.4 4.5l-2.8 1.3z" fill="#7a4636" stroke="#2e221c" stroke-width=".35"/><path d="M563.1 182.0l2.1 -4.5l2.4 4.5z" fill="#b07058" stroke="#2e221c" stroke-width=".3"/><path d="M576.1 186.6h4.3v-4.5h-4.3z" fill="#d2cec2"/><path d="M580.4 186.6l2.9 -1.3v-4.5l-2.9 1.3z" fill="#8e897e"/><path d="M575.8 182.2l2.2 -4.5l2.9 -1.3l2.5 4.5l-2.9 1.3z" fill="#643830" stroke="#2e221c" stroke-width=".35"/><path d="M575.8 182.2l2.2 -4.5l2.5 4.5z" fill="#96584a" stroke="#2e221c" stroke-width=".3"/><path d="M555.2 186.6h3.6v-3.9h-3.6z" fill="#d2cec2"/><path d="M558.7 186.6l2.4 -1.2v-3.9l-2.4 1.2z" fill="#8e897e"/><path d="M554.9 182.7l1.8 -3.9l2.4 -1.2l2.1 3.9l-2.4 1.2z" fill="#5c3226" stroke="#2e221c" stroke-width=".35"/><path d="M554.9 182.7l1.8 -3.9l2.1 3.9z" fill="#8c5040" stroke="#2e221c" stroke-width=".3"/><path d="M561.4 186.2h2.8v-2.2h-2.8z" fill="#d2cec2"/><path d="M564.3 186.2l1.9 -0.6v-2.2l-1.9 0.6z" fill="#8e897e"/><path d="M561.1 184.0l1.4 -2.2l1.9 -0.6l1.7 2.2l-1.9 0.6z" fill="#5c3226" stroke="#2e221c" stroke-width=".35"/><path d="M561.1 184.0l1.4 -2.2l1.7 2.2z" fill="#8c5040" stroke="#2e221c" stroke-width=".3"/><path d="M571.4 186.7h3.0v-3.2h-3.0z" fill="#d2cec2"/><path d="M574.4 186.7l2.0 -1.0v-3.2l-2.0 1.0z" fill="#8e897e"/><path d="M571.1 183.6l1.5 -3.2l2.0 -1.0l1.8 3.2l-2.0 1.0z" fill="#5c3226" stroke="#2e221c" stroke-width=".35"/><path d="M571.1 183.6l1.5 -3.2l1.8 3.2z" fill="#8c5040" stroke="#2e221c" stroke-width=".3"/><path d="M566.6 186.7h3.2v-2.7h-3.2z" fill="#d2cec2"/><path d="M569.8 186.7l2.1 -0.8v-2.7l-2.1 0.8z" fill="#8e897e"/><path d="M566.3 183.9l1.6 -2.7l2.1 -0.8l1.9 2.7l-2.1 0.8z" fill="#643830" stroke="#2e221c" stroke-width=".35"/><path d="M566.3 183.9l1.6 -2.7l1.9 2.7z" fill="#96584a" stroke="#2e221c" stroke-width=".3"/><path d="M564.1 187.1h4.2v-3.7h-4.2z" fill="#d2cec2"/><path d="M568.3 187.1l2.8 -1.1v-3.7l-2.8 1.1z" fill="#8e897e"/><path d="M563.8 183.4l2.1 -3.7l2.8 -1.1l2.4 3.7l-2.8 1.1z" fill="#7a4636" stroke="#2e221c" stroke-width=".35"/><path d="M563.8 183.4l2.1 -3.7l2.4 3.7z" fill="#b07058" stroke="#2e221c" stroke-width=".3"/><path d="M548.4 186.6h2.9v-2.4h-2.9z" fill="#d2cec2"/><path d="M551.3 186.6l1.9 -0.7v-2.4l-1.9 0.7z" fill="#8e897e"/><path d="M548.1 184.2l1.5 -2.4l1.9 -0.7l1.8 2.4l-1.9 0.7z" fill="#643830" stroke="#2e221c" stroke-width=".35"/><path d="M548.1 184.2l1.5 -2.4l1.8 2.4z" fill="#96584a" stroke="#2e221c" stroke-width=".3"/><path d="M552.3 187.6h4.1v-4.1h-4.1z" fill="#d2cec2"/><path d="M556.4 187.6l2.7 -1.2v-4.1l-2.7 1.2z" fill="#8e897e"/><path d="M552.0 183.6l2.1 -4.1l2.7 -1.2l2.4 4.1l-2.7 1.2z" fill="#54302a" stroke="#2e221c" stroke-width=".35"/><path d="M552.0 183.6l2.1 -4.1l2.4 4.1z" fill="#7e463a" stroke="#2e221c" stroke-width=".3"/><path d="M561.8 187.4h2.9v-2.7h-2.9z" fill="#d2cec2"/><path d="M564.7 187.4l2.0 -0.8v-2.7l-2.0 0.8z" fill="#8e897e"/><path d="M561.5 184.7l1.5 -2.7l2.0 -0.8l1.8 2.7l-2.0 0.8z" fill="#6e3c2e" stroke="#2e221c" stroke-width=".35"/><path d="M561.5 184.7l1.5 -2.7l1.8 2.7z" fill="#a2604c" stroke="#2e221c" stroke-width=".3"/><path d="M558.4 187.8h3.3v-2.9h-3.3z" fill="#d2cec2"/><path d="M561.6 187.8l2.2 -0.9v-2.9l-2.2 0.9z" fill="#8e897e"/><path d="M558.1 184.9l1.6 -2.9l2.2 -0.9l1.9 2.9l-2.2 0.9z" fill="#54302a" stroke="#2e221c" stroke-width=".35"/><path d="M558.1 184.9l1.6 -2.9l1.9 2.9z" fill="#7e463a" stroke="#2e221c" stroke-width=".3"/><path d="M574.4 188.9h4.3v-4.3h-4.3z" fill="#d2cec2"/><path d="M578.6 188.9l2.8 -1.3v-4.3l-2.8 1.3z" fill="#8e897e"/><path d="M574.1 184.6l2.1 -4.3l2.8 -1.3l2.4 4.3l-2.8 1.3z" fill="#5c3226" stroke="#2e221c" stroke-width=".35"/><path d="M574.1 184.6l2.1 -4.3l2.4 4.3z" fill="#8c5040" stroke="#2e221c" stroke-width=".3"/><path d="M575.7 188.5h3.3v-3.2h-3.3z" fill="#d2cec2"/><path d="M579.0 188.5l2.2 -0.9v-3.2l-2.2 0.9z" fill="#8e897e"/><path d="M575.4 185.4l1.7 -3.2l2.2 -0.9l2.0 3.2l-2.2 0.9z" fill="#54302a" stroke="#2e221c" stroke-width=".35"/><path d="M575.4 185.4l1.7 -3.2l2.0 3.2z" fill="#7e463a" stroke="#2e221c" stroke-width=".3"/><path d="M545.7 188.6h2.8v-2.6h-2.8z" fill="#d2cec2"/><path d="M548.5 188.6l1.9 -0.8v-2.6l-1.9 0.8z" fill="#8e897e"/><path d="M545.4 185.9l1.4 -2.6l1.9 -0.8l1.7 2.6l-1.9 0.8z" fill="#643830" stroke="#2e221c" stroke-width=".35"/><path d="M545.4 185.9l1.4 -2.6l1.7 2.6z" fill="#96584a" stroke="#2e221c" stroke-width=".3"/><path d="M574.3 188.8h2.8v-2.4h-2.8z" fill="#d2cec2"/><path d="M577.1 188.8l1.9 -0.7v-2.4l-1.9 0.7z" fill="#8e897e"/><path d="M574.0 186.4l1.4 -2.4l1.9 -0.7l1.7 2.4l-1.9 0.7z" fill="#7a4636" stroke="#2e221c" stroke-width=".35"/><path d="M574.0 186.4l1.4 -2.4l1.7 2.4z" fill="#b07058" stroke="#2e221c" stroke-width=".3"/><path d="M569.2 189.6h3.7v-3.9h-3.7z" fill="#d2cec2"/><path d="M573.0 189.6l2.5 -1.2v-3.9l-2.5 1.2z" fill="#8e897e"/><path d="M568.9 185.7l1.9 -3.9l2.5 -1.2l2.2 3.9l-2.5 1.2z" fill="#54302a" stroke="#2e221c" stroke-width=".35"/><path d="M568.9 185.7l1.9 -3.9l2.2 3.9z" fill="#7e463a" stroke="#2e221c" stroke-width=".3"/><path d="M549.6 189.5h4.3v-3.4h-4.3z" fill="#d2cec2"/><path d="M553.9 189.5l2.9 -1.0v-3.4l-2.9 1.0z" fill="#8e897e"/><path d="M549.3 186.1l2.2 -3.4l2.9 -1.0l2.5 3.4l-2.9 1.0z" fill="#6e3c2e" stroke="#2e221c" stroke-width=".35"/><path d="M549.3 186.1l2.2 -3.4l2.5 3.4z" fill="#a2604c" stroke="#2e221c" stroke-width=".3"/><path d="M545.2 189.4h4.2v-3.2h-4.2z" fill="#d2cec2"/><path d="M549.4 189.4l2.8 -0.9v-3.2l-2.8 0.9z" fill="#8e897e"/><path d="M544.9 186.2l2.1 -3.2l2.8 -0.9l2.4 3.2l-2.8 0.9z" fill="#6e3c2e" stroke="#2e221c" stroke-width=".35"/><path d="M544.9 186.2l2.1 -3.2l2.4 3.2z" fill="#a2604c" stroke="#2e221c" stroke-width=".3"/><path d="M577.4 189.3h2.9v-2.3h-2.9z" fill="#d2cec2"/><path d="M580.3 189.3l1.9 -0.7v-2.3l-1.9 0.7z" fill="#8e897e"/><path d="M577.1 187.0l1.4 -2.3l1.9 -0.7l1.7 2.3l-1.9 0.7z" fill="#6e3c2e" stroke="#2e221c" stroke-width=".35"/><path d="M577.1 187.0l1.4 -2.3l1.7 2.3z" fill="#a2604c" stroke="#2e221c" stroke-width=".3"/><path d="M556.5 190.1h3.0v-3.1h-3.0z" fill="#d2cec2"/><path d="M559.6 190.1l2.0 -0.9v-3.1l-2.0 0.9z" fill="#8e897e"/><path d="M556.2 187.1l1.5 -3.1l2.0 -0.9l1.8 3.1l-2.0 0.9z" fill="#643830" stroke="#2e221c" stroke-width=".35"/><path d="M556.2 187.1l1.5 -3.1l1.8 3.1z" fill="#96584a" stroke="#2e221c" stroke-width=".3"/><path d="M546.0 190.2h3.5v-2.7h-3.5z" fill="#d2cec2"/><path d="M549.5 190.2l2.3 -0.8v-2.7l-2.3 0.8z" fill="#8e897e"/><path d="M545.7 187.5l1.7 -2.7l2.3 -0.8l2.0 2.7l-2.3 0.8z" fill="#5c3226" stroke="#2e221c" stroke-width=".35"/><path d="M545.7 187.5l1.7 -2.7l2.0 2.7z" fill="#8c5040" stroke="#2e221c" stroke-width=".3"/><path d="M551.5 190.5h3.9v-3.2h-3.9z" fill="#d2cec2"/><path d="M555.5 190.5l2.6 -0.9v-3.2l-2.6 0.9z" fill="#8e897e"/><path d="M551.2 187.4l2.0 -3.2l2.6 -0.9l2.3 3.2l-2.6 0.9z" fill="#6e3c2e" stroke="#2e221c" stroke-width=".35"/><path d="M551.2 187.4l2.0 -3.2l2.3 3.2z" fill="#a2604c" stroke="#2e221c" stroke-width=".3"/><path d="M561.3 190.8h3.5v-3.7h-3.5z" fill="#d2cec2"/><path d="M564.8 190.8l2.3 -1.1v-3.7l-2.3 1.1z" fill="#8e897e"/><path d="M561.0 187.0l1.7 -3.7l2.3 -1.1l2.0 3.7l-2.3 1.1z" fill="#643830" stroke="#2e221c" stroke-width=".35"/><path d="M561.0 187.0l1.7 -3.7l2.0 3.7z" fill="#96584a" stroke="#2e221c" stroke-width=".3"/><path d="M562.2 191.7h4.3v-3.7h-4.3z" fill="#d2cec2"/><path d="M566.5 191.7l2.9 -1.1v-3.7l-2.9 1.1z" fill="#8e897e"/><path d="M561.9 188.1l2.2 -3.7l2.9 -1.1l2.5 3.7l-2.9 1.1z" fill="#7a4636" stroke="#2e221c" stroke-width=".35"/><path d="M561.9 188.1l2.2 -3.7l2.5 3.7z" fill="#b07058" stroke="#2e221c" stroke-width=".3"/><path d="M552.3 191.8h4.0v-3.4h-4.0z" fill="#d2cec2"/><path d="M556.3 191.8l2.7 -1.0v-3.4l-2.7 1.0z" fill="#8e897e"/><path d="M552.0 188.4l2.0 -3.4l2.7 -1.0l2.3 3.4l-2.7 1.0z" fill="#5c3226" stroke="#2e221c" stroke-width=".35"/><path d="M552.0 188.4l2.0 -3.4l2.3 3.4z" fill="#8c5040" stroke="#2e221c" stroke-width=".3"/><path d="M547.8 192.2h3.9v-3.0h-3.9z" fill="#d2cec2"/><path d="M551.7 192.2l2.6 -0.9v-3.0l-2.6 0.9z" fill="#8e897e"/><path d="M547.5 189.2l1.9 -3.0l2.6 -0.9l2.2 3.0l-2.6 0.9z" fill="#6e3c2e" stroke="#2e221c" stroke-width=".35"/><path d="M547.5 189.2l1.9 -3.0l2.2 3.0z" fill="#a2604c" stroke="#2e221c" stroke-width=".3"/><path d="M576.0 193.3h4.1v-4.4h-4.1z" fill="#d2cec2"/><path d="M580.1 193.3l2.7 -1.3v-4.4l-2.7 1.3z" fill="#8e897e"/><path d="M575.7 189.0l2.1 -4.4l2.7 -1.3l2.4 4.4l-2.7 1.3z" fill="#643830" stroke="#2e221c" stroke-width=".35"/><path d="M575.7 189.0l2.1 -4.4l2.4 4.4z" fill="#96584a" stroke="#2e221c" stroke-width=".3"/><path d="M570.8 192.9h3.3v-2.9h-3.3z" fill="#d2cec2"/><path d="M574.0 192.9l2.2 -0.9v-2.9l-2.2 0.9z" fill="#8e897e"/><path d="M570.5 190.0l1.6 -2.9l2.2 -0.9l1.9 2.9l-2.2 0.9z" fill="#54302a" stroke="#2e221c" stroke-width=".35"/><path d="M570.5 190.0l1.6 -2.9l1.9 2.9z" fill="#7e463a" stroke="#2e221c" stroke-width=".3"/><path d="M572.0 194.0h2.8v-3.0h-2.8z" fill="#d2cec2"/><path d="M574.8 194.0l1.9 -0.9v-3.0l-1.9 0.9z" fill="#8e897e"/><path d="M571.7 191.0l1.4 -3.0l1.9 -0.9l1.7 3.0l-1.9 0.9z" fill="#643830" stroke="#2e221c" stroke-width=".35"/><path d="M571.7 191.0l1.4 -3.0l1.7 3.0z" fill="#96584a" stroke="#2e221c" stroke-width=".3"/><path d="M557.7 194.5h4.4v-3.5h-4.4z" fill="#d2cec2"/><path d="M562.2 194.5l3.0 -1.0v-3.5l-3.0 1.0z" fill="#8e897e"/><path d="M557.4 191.0l2.2 -3.5l3.0 -1.0l2.5 3.5l-3.0 1.0z" fill="#5c3226" stroke="#2e221c" stroke-width=".35"/><path d="M557.4 191.0l2.2 -3.5l2.5 3.5z" fill="#8c5040" stroke="#2e221c" stroke-width=".3"/><path d="M561.0 196.3h4.1v-4.2h-4.1z" fill="#d2cec2"/><path d="M565.1 196.3l2.7 -1.2v-4.2l-2.7 1.2z" fill="#8e897e"/><path d="M560.7 192.2l2.1 -4.2l2.7 -1.2l2.4 4.2l-2.7 1.2z" fill="#643830" stroke="#2e221c" stroke-width=".35"/><path d="M560.7 192.2l2.1 -4.2l2.4 4.2z" fill="#96584a" stroke="#2e221c" stroke-width=".3"/><path d="M567.5 196.5h4.3v-3.9h-4.3z" fill="#d2cec2"/><path d="M571.8 196.5l2.8 -1.2v-3.9l-2.8 1.2z" fill="#8e897e"/><path d="M567.2 192.7l2.1 -3.9l2.8 -1.2l2.4 3.9l-2.8 1.2z" fill="#7a4636" stroke="#2e221c" stroke-width=".35"/><path d="M567.2 192.7l2.1 -3.9l2.4 3.9z" fill="#b07058" stroke="#2e221c" stroke-width=".3"/><path d="M566.3 197.0h3.2v-2.9h-3.2z" fill="#d2cec2"/><path d="M569.5 197.0l2.1 -0.9v-2.9l-2.1 0.9z" fill="#8e897e"/><path d="M566.0 194.0l1.6 -2.9l2.1 -0.9l1.9 2.9l-2.1 0.9z" fill="#7a4636" stroke="#2e221c" stroke-width=".35"/><path d="M566.0 194.0l1.6 -2.9l1.9 2.9z" fill="#b07058" stroke="#2e221c" stroke-width=".3"/><path d="M562.1 200.7h3.1v-2.7h-3.1z" fill="#d2cec2"/><path d="M565.2 200.7l2.0 -0.8v-2.7l-2.0 0.8z" fill="#8e897e"/><path d="M561.8 198.0l1.5 -2.7l2.0 -0.8l1.8 2.7l-2.0 0.8z" fill="#7a4636" stroke="#2e221c" stroke-width=".35"/><path d="M561.8 198.0l1.5 -2.7l1.8 2.7z" fill="#b07058" stroke="#2e221c" stroke-width=".3"/><path d="M561.7 201.6h2.9v-2.9h-2.9z" fill="#d2cec2"/><path d="M564.6 201.6l1.9 -0.9v-2.9l-1.9 0.9z" fill="#8e897e"/><path d="M561.4 198.8l1.4 -2.9l1.9 -0.9l1.7 2.9l-1.9 0.9z" fill="#6e3c2e" stroke="#2e221c" stroke-width=".35"/><path d="M561.4 198.8l1.4 -2.9l1.7 2.9z" fill="#a2604c" stroke="#2e221c" stroke-width=".3"/>
<path d="M536.6 187.0L564.5 205.0v-3.200L536.6 183.8z" fill="#dad8d0" stroke="#3a3630" stroke-width=".4"/><path d="M536.6 183.8L564.5 201.8" stroke="#f4f2ec" stroke-width="1.100" stroke-dasharray="1.200 .9" fill="none"/><path d="M536.6 185.8L564.5 203.8" stroke="#8a867c" stroke-width=".5" fill="none"/>
<path d="M564.5 205.0L591.4 189.0v-3.200L564.5 201.8z" fill="#dad8d0" stroke="#3a3630" stroke-width=".4"/><path d="M564.5 201.8L591.4 185.8" stroke="#f4f2ec" stroke-width="1.100" stroke-dasharray="1.200 .9" fill="none"/><path d="M564.5 203.8L591.4 187.8" stroke="#8a867c" stroke-width=".5" fill="none"/>
<path d="M535.3 187.5v-5.5h2.6v5.5z" fill="#d8d5cc" stroke="#3a342e" stroke-width=".35"/><path d="M536.6 187.5v-5.5h1.3v5.5z" fill="#9a968c"/><path d="M534.8 182.0l1.8 -3.9l1.8 3.9z" fill="#8c5040" stroke="#2e221c" stroke-width=".35"/>
<path d="M563.0 205.8v-5.5h3.0v5.5z" fill="#d8d5cc" stroke="#3a342e" stroke-width=".35"/><path d="M564.5 205.8v-5.5h1.5v5.5z" fill="#9a968c"/><path d="M562.5 200.3l2.0 -4.5l2.0 4.5z" fill="#8c5040" stroke="#2e221c" stroke-width=".35"/>
<path d="M590.1 189.5v-5.5h2.6v5.5z" fill="#d8d5cc" stroke="#3a342e" stroke-width=".35"/><path d="M591.4 189.5v-5.5h1.3v5.5z" fill="#9a968c"/><path d="M589.6 184.0l1.8 -3.9l1.8 3.9z" fill="#8c5040" stroke="#2e221c" stroke-width=".35"/>
<path d="M548.8 196.5v-5.0h2.4v5.0z" fill="#d8d5cc" stroke="#3a342e" stroke-width=".35"/><path d="M550.0 196.5v-5.0h1.2v5.0z" fill="#9a968c"/><path d="M548.3 191.5l1.7 -3.6l1.7 3.6z" fill="#8c5040" stroke="#2e221c" stroke-width=".35"/>
<path d="M576.8 197.5v-5.0h2.4v5.0z" fill="#d8d5cc" stroke="#3a342e" stroke-width=".35"/><path d="M578.0 197.5v-5.0h1.2v5.0z" fill="#9a968c"/><path d="M576.3 192.5l1.7 -3.6l1.7 3.6z" fill="#8c5040" stroke="#2e221c" stroke-width=".35"/>
<path d="M550.7 176.5v-7.5h3.6v7.5z" fill="#d8d5cc" stroke="#3a342e" stroke-width=".35"/><path d="M552.5 176.5v-7.5h1.8v7.5z" fill="#9a968c"/><path d="M550.2 169.0l2.3 -5.4l2.3 5.4z" fill="#a86454" stroke="#2e221c" stroke-width=".35"/>
<path d="M582.6 181.0v-6.0h2.8v6.0z" fill="#d8d5cc" stroke="#3a342e" stroke-width=".35"/><path d="M584.0 181.0v-6.0h1.4v6.0z" fill="#9a968c"/><path d="M582.1 175.0l1.9 -4.2l1.9 4.2z" fill="#7e463a" stroke="#2e221c" stroke-width=".35"/>
<path d="M545.4 183.0v-5.0h3.2v5.0z" fill="#d8d5cc" stroke="#3a342e" stroke-width=".35"/><path d="M547.0 183.0v-5.0h1.6v5.0z" fill="#9a968c"/><path d="M544.9 178.0l2.1 -4.8l2.1 4.8z" fill="#96584a" stroke="#2e221c" stroke-width=".35"/>
</g>
<ellipse cx="812" cy="245" rx="14" ry="8.500" fill="#c2c2b8" opacity=".9" filter="url(#b1)"/>
<path d="M813.2 235.5h3.0v-2.9h-3.0z" fill="#d2cec2"/><path d="M816.2 235.5l2.0 -0.9v-2.9l-2.0 0.9z" fill="#8e897e"/><path d="M812.9 232.5l1.5 -2.9l2.0 -0.9l1.8 2.9l-2.0 0.9z" fill="#9c4018" stroke="#2e221c" stroke-width=".35"/><path d="M812.9 232.5l1.5 -2.9l1.8 2.9z" fill="#e06a26" stroke="#2e221c" stroke-width=".3"/><path d="M806.2 236.4h3.1v-2.7h-3.1z" fill="#d2cec2"/><path d="M809.3 236.4l2.1 -0.8v-2.7l-2.1 0.8z" fill="#8e897e"/><path d="M805.9 233.7l1.5 -2.7l2.1 -0.8l1.8 2.7l-2.1 0.8z" fill="#9c4018" stroke="#2e221c" stroke-width=".35"/><path d="M805.9 233.7l1.5 -2.7l1.8 2.7z" fill="#e06a26" stroke="#2e221c" stroke-width=".3"/><path d="M801.7 237.8h3.6v-3.1h-3.6z" fill="#d2cec2"/><path d="M805.3 237.8l2.4 -0.9v-3.1l-2.4 0.9z" fill="#8e897e"/><path d="M801.4 234.8l1.8 -3.1l2.4 -0.9l2.1 3.1l-2.4 0.9z" fill="#9c4018" stroke="#2e221c" stroke-width=".35"/><path d="M801.4 234.8l1.8 -3.1l2.1 3.1z" fill="#e06a26" stroke="#2e221c" stroke-width=".3"/><path d="M808.7 238.6h3.6v-2.9h-3.6z" fill="#d2cec2"/><path d="M812.3 238.6l2.4 -0.9v-2.9l-2.4 0.9z" fill="#8e897e"/><path d="M808.4 235.7l1.8 -2.9l2.4 -0.9l2.1 2.9l-2.4 0.9z" fill="#9c4018" stroke="#2e221c" stroke-width=".35"/><path d="M808.4 235.7l1.8 -2.9l2.1 2.9z" fill="#e06a26" stroke="#2e221c" stroke-width=".3"/><path d="M819.7 240.0h4.2v-3.2h-4.2z" fill="#d2cec2"/><path d="M823.8 240.0l2.8 -0.9v-3.2l-2.8 0.9z" fill="#8e897e"/><path d="M819.4 236.9l2.1 -3.2l2.8 -0.9l2.4 3.2l-2.8 0.9z" fill="#8c3c1a" stroke="#2e221c" stroke-width=".35"/><path d="M819.4 236.9l2.1 -3.2l2.4 3.2z" fill="#d0602a" stroke="#2e221c" stroke-width=".3"/><path d="M796.9 244.3h3.4v-3.0h-3.4z" fill="#d2cec2"/><path d="M800.4 244.3l2.3 -0.9v-3.0l-2.3 0.9z" fill="#8e897e"/><path d="M796.6 241.3l1.7 -3.0l2.3 -0.9l2.0 3.0l-2.3 0.9z" fill="#8c3c1a" stroke="#2e221c" stroke-width=".35"/><path d="M796.6 241.3l1.7 -3.0l2.0 3.0z" fill="#d0602a" stroke="#2e221c" stroke-width=".3"/><path d="M810.4 247.3h3.9v-3.4h-3.9z" fill="#d2cec2"/><path d="M814.3 247.3l2.6 -1.0v-3.4l-2.6 1.0z" fill="#8e897e"/><path d="M810.1 243.9l2.0 -3.4l2.6 -1.0l2.3 3.4l-2.6 1.0z" fill="#8c3c1a" stroke="#2e221c" stroke-width=".35"/><path d="M810.1 243.9l2.0 -3.4l2.3 3.4z" fill="#d0602a" stroke="#2e221c" stroke-width=".3"/><path d="M803.8 248.1h4.0v-3.6h-4.0z" fill="#d2cec2"/><path d="M807.8 248.1l2.7 -1.1v-3.6l-2.7 1.1z" fill="#8e897e"/><path d="M803.5 244.5l2.0 -3.6l2.7 -1.1l2.3 3.6l-2.7 1.1z" fill="#8c3c1a" stroke="#2e221c" stroke-width=".35"/><path d="M803.5 244.5l2.0 -3.6l2.3 3.6z" fill="#d0602a" stroke="#2e221c" stroke-width=".3"/><path d="M821.8 249.2h3.2v-3.4h-3.2z" fill="#d2cec2"/><path d="M825.0 249.2l2.1 -1.0v-3.4l-2.1 1.0z" fill="#8e897e"/><path d="M821.5 245.8l1.6 -3.4l2.1 -1.0l1.9 3.4l-2.1 1.0z" fill="#a8481c" stroke="#2e221c" stroke-width=".35"/><path d="M821.5 245.8l1.6 -3.4l1.9 3.4z" fill="#ec782c" stroke="#2e221c" stroke-width=".3"/><path d="M810.9 249.7h3.1v-2.6h-3.1z" fill="#d2cec2"/><path d="M814.1 249.7l2.1 -0.8v-2.6l-2.1 0.8z" fill="#8e897e"/><path d="M810.6 247.1l1.6 -2.6l2.1 -0.8l1.9 2.6l-2.1 0.8z" fill="#9c4018" stroke="#2e221c" stroke-width=".35"/><path d="M810.6 247.1l1.6 -2.6l1.9 2.6z" fill="#e06a26" stroke="#2e221c" stroke-width=".3"/><path d="M813.0 251.5h3.4v-3.0h-3.4z" fill="#d2cec2"/><path d="M816.4 251.5l2.3 -0.9v-3.0l-2.3 0.9z" fill="#8e897e"/><path d="M812.7 248.5l1.7 -3.0l2.3 -0.9l2.0 3.0l-2.3 0.9z" fill="#8c3c1a" stroke="#2e221c" stroke-width=".35"/><path d="M812.7 248.5l1.7 -3.0l2.0 3.0z" fill="#d0602a" stroke="#2e221c" stroke-width=".3"/>
<g fill="#3f8a38" stroke="#1e441a" stroke-width=".3"><circle cx="804.500" cy="235" r="2"/><circle cx="820" cy="249" r="2"/></g>
<path d="M724.5 291.5h3.3v-4.0h-3.3z" fill="#d2cec2"/><path d="M727.8 291.5l2.2 -1.2v-4.0l-2.2 1.2z" fill="#8e897e"/><path d="M724.2 287.5l1.6 -4.0l2.2 -1.2l1.9 4.0l-2.2 1.2z" fill="#a8481c" stroke="#2e221c" stroke-width=".35"/><path d="M724.2 287.5l1.6 -4.0l1.9 4.0z" fill="#ec782c" stroke="#2e221c" stroke-width=".3"/><path d="M730.0 290.0h3.3v-4.0h-3.3z" fill="#d2cec2"/><path d="M733.3 290.0l2.2 -1.2v-4.0l-2.2 1.2z" fill="#8e897e"/><path d="M729.7 286.0l1.6 -4.0l2.2 -1.2l1.9 4.0l-2.2 1.2z" fill="#9c4018" stroke="#2e221c" stroke-width=".35"/><path d="M729.7 286.0l1.6 -4.0l1.9 4.0z" fill="#e06a26" stroke="#2e221c" stroke-width=".3"/><path d="M727.5 295.0h3.6v-4.5h-3.6z" fill="#d2cec2"/><path d="M731.1 295.0l2.4 -1.3v-4.5l-2.4 1.3z" fill="#8e897e"/><path d="M727.2 290.5l1.8 -4.5l2.4 -1.3l2.1 4.5l-2.4 1.3z" fill="#8c3c1a" stroke="#2e221c" stroke-width=".35"/><path d="M727.2 290.5l1.8 -4.5l2.1 4.5z" fill="#d0602a" stroke="#2e221c" stroke-width=".3"/><path d="M733.5 294.0h3.0v-4.0h-3.0z" fill="#d2cec2"/><path d="M736.5 294.0l2.0 -1.2v-4.0l-2.0 1.2z" fill="#8e897e"/><path d="M733.2 290.0l1.5 -4.0l2.0 -1.2l1.8 4.0l-2.0 1.2z" fill="#a8481c" stroke="#2e221c" stroke-width=".35"/><path d="M733.2 290.0l1.5 -4.0l1.8 4.0z" fill="#ec782c" stroke="#2e221c" stroke-width=".3"/>
<g transform="translate(450 178) scale(.88)"><path d="M-8 1.500q1 4 5 4.500h7q4-1 4.500-5.500l-3 2h-10z" fill="#7a5a42" stroke="#3a2414" stroke-width=".4"/><path d="M-5-6h5v6.500h-5zM1.500-8h5v8.500h-5z" fill="#e0dccc" stroke="#5a4a3a" stroke-width=".4"/><path d="M-2.500-9v10M4-10.500v11.500" stroke="#4a3424" stroke-width=".5"/><path d="M4-10.500l3 .8l-3 .8z" fill="#c83020"/><circle cx="-2.500" cy="-2.800" r="1.300" fill="#d8a838"/><circle cx="4" cy="-3.800" r="1.400" fill="#d8a838"/></g>
<defs><linearGradient id="lg" x1="0" y1="0" x2="0" y2="1"><stop offset=".25" stop-color="#ffffff"/><stop offset=".8" stop-color="#c4c4c4"/></linearGradient></defs>
<text x="419.300" y="221.200" font-family="Liberation Serif,serif" fill="#f0f0f0" stroke="#3a3836" paint-order="stroke" stroke-linejoin="round" stroke-width="1.700" textLength="144" lengthAdjust="spacing"><tspan font-size="19.500">C</tspan><tspan font-size="16.200">ITY OF </tspan><tspan font-size="19.500">S</tspan><tspan font-size="16.200">OJOUR</tspan></text>
<text x="777.800" y="227.300" font-family="Liberation Serif,serif" fill="#f0f0f0" stroke="#3a3836" paint-order="stroke" stroke-linejoin="round" stroke-width="1.500" textLength="64.500" lengthAdjust="spacing"><tspan font-size="15.500">R</tspan><tspan font-size="12.800">OCKEND</tspan></text>
<text x="697.800" y="303" font-family="Liberation Serif,serif" fill="#f0f0f0" stroke="#3a3836" paint-order="stroke" stroke-linejoin="round" stroke-width=".8" textLength="36.500" lengthAdjust="spacing"><tspan font-size="6.400">K</tspan><tspan font-size="5.200">YLE </tspan><tspan font-size="6.400">M</tspan><tspan font-size="5.200">ANOR</tspan></text>
</g></svg>
<svg class="abs" style="left:418px;top:534px;will-change:transform" width="200" height="18" viewBox="418 534 200 18"><g stroke="#a01c14" fill="none" stroke-width=".8"><path d="M421.600 538v6.400M482.400 540.200v4M574.200 538v6.400"/><path d="M421.600 544h152.600M452 541h30.400"/></g><rect x="421.600" y="540.800" width="30.400" height="3.200" fill="#c81410"/><g font-family="Liberation Sans,sans-serif" font-size="6.500" fill="#c0241a"><text x="422" y="549.700">0</text><text x="454.300" y="549.700">5</text><text x="483.700" y="549.700">10km</text><text x="575" y="549.700">25km</text></g></svg>
</body></html>
